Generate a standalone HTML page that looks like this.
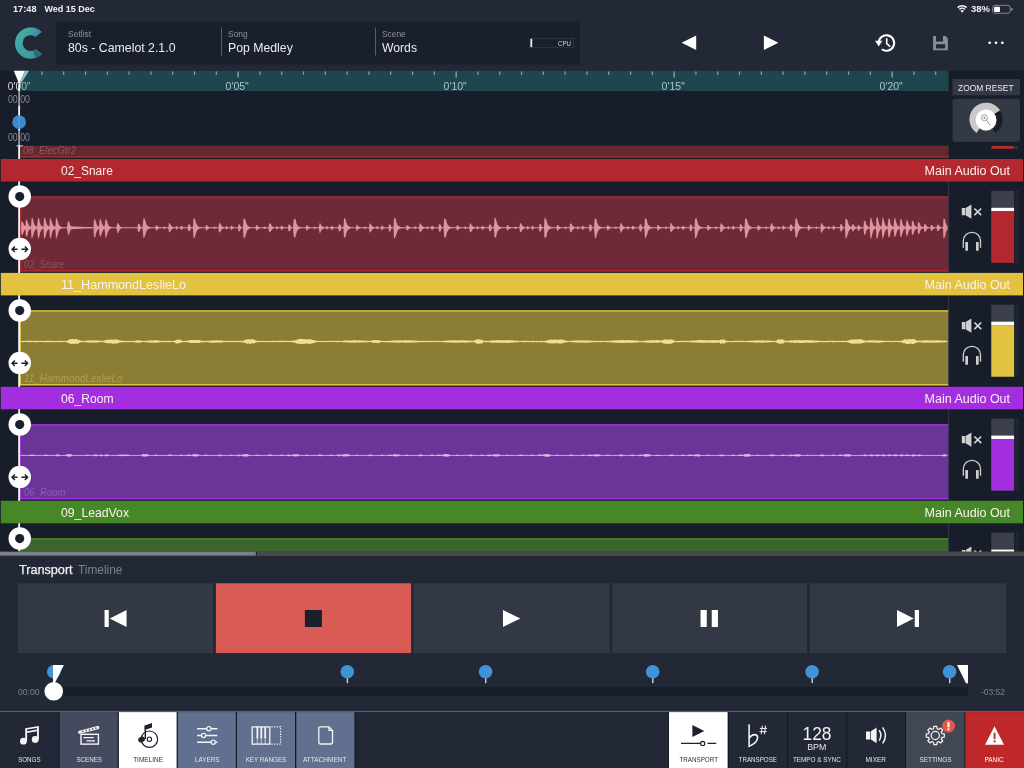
<!DOCTYPE html>
<html><head><meta charset="utf-8"><title>Camelot Timeline</title>
<style>
html,body{margin:0;padding:0;background:#222836;}
body{width:1024px;height:768px;overflow:hidden;position:relative;font-family:"Liberation Sans", sans-serif;-webkit-font-smoothing:antialiased;}
span{display:block}
</style></head><body>
<div id="app" style="position:absolute;left:0;top:0;width:1024px;height:768px;overflow:hidden;will-change:transform">
<svg style="position:absolute;left:0px;top:0px" width="1024" height="768"><rect x="0" y="0" width="1024" height="768" fill="#222836"/></svg>
<span id="t0" style="position:absolute;top:4px;font-size:9px;line-height:10px;white-space:nowrap;color:#f2f2f2;font-weight:700;left:12.50px;transform-origin:left center;transform:scaleX(1.0204);">17:48</span>
<span id="t1" style="position:absolute;top:4px;font-size:9px;line-height:10px;white-space:nowrap;color:#f2f2f2;font-weight:700;left:44.50px;transform-origin:left center;">Wed 15 Dec</span>
<span id="t2" style="position:absolute;top:4px;font-size:9px;line-height:10px;white-space:nowrap;color:#f2f2f2;font-weight:700;left:971.00px;transform-origin:left center;transform:scaleX(1.0546);">38%</span>
<svg style="position:absolute;left:955px;top:3px" width="15" height="12" viewBox="955 3 15 12">
<path d="M957.63 7.62 A6.5 6.5 0 0 1 966.67 7.62" fill="none" stroke="#f2f2f2" stroke-width="1.55"/>
<path d="M959.37 9.42 A4.0 4.0 0 0 1 964.93 9.42" fill="none" stroke="#f2f2f2" stroke-width="1.5"/>
<path d="M962.15 12.8 L960.40 10.85 A2.2 2.2 0 0 1 963.90 10.85 Z" fill="#f2f2f2"/>
</svg>
<svg style="position:absolute;left:991px;top:3px" width="23" height="13" viewBox="991 3 23 13">
<rect x="992.7" y="5.35" width="17.5" height="7.9" rx="2.3" fill="none" stroke="#8e9199" stroke-width="0.9"/>
<rect x="994.1" y="6.7" width="5.9" height="5.2" rx="1" fill="#ffffff"/>
<path d="M1011.2 7.8 Q1012.8 8 1012.8 9.3 Q1012.8 10.6 1011.2 10.8 Z" fill="#8e9199"/>
</svg>
<svg style="position:absolute;left:0;top:20px" width="60" height="48" viewBox="0 20 60 48"><defs><linearGradient id="lg" gradientUnits="userSpaceOnUse" x1="15" y1="30" x2="42" y2="56"><stop offset="0" stop-color="#4aafa6"/><stop offset="1" stop-color="#3c9398"/></linearGradient><linearGradient id="lg2" gradientUnits="userSpaceOnUse" x1="26" y1="28" x2="41" y2="33"><stop offset="0" stop-color="#46a6a6" stop-opacity="0"/><stop offset="0.6" stop-color="#3f93a6" stop-opacity="0.75"/><stop offset="1" stop-color="#3a7ca2"/></linearGradient></defs><path d="M41.63 32.07 A15.6 15.6 0 1 0 42.01 53.74 L35.85 49.14 A8.0 8.0 0 1 1 35.41 36.71 Z" fill="url(#lg)" /><path d="M41.63 32.07 A15.6 15.6 0 0 0 25.26 28.44 L27.86 35.58 A8.0 8.0 0 0 1 35.41 36.71 Z" fill="url(#lg2)" /><path d="M35.42 57.94 A15.6 15.6 0 0 0 42.01 53.74 L35.85 49.14 A8.0 8.0 0 0 1 33.07 50.71 Z" fill="#2a6c79" /></svg>
<svg style="position:absolute;left:56px;top:21px" width="524" height="44"><rect x="0" y="0.6" width="524" height="42.9" fill="#1a1f2c"/></svg>
<span id="t3" style="position:absolute;top:29px;font-size:9.2px;line-height:10px;white-space:nowrap;color:#8e939c;font-weight:400;left:67.80px;transform-origin:left center;transform:scaleX(0.9268);">Setlist</span>
<span id="t4" style="position:absolute;top:40px;font-size:13px;line-height:15px;white-space:nowrap;color:#ececec;font-weight:400;left:67.80px;transform-origin:left center;transform:scaleX(0.9475);">80s - Camelot 2.1.0</span>
<svg style="position:absolute;left:221px;top:27px" width="1" height="29"><rect x="0" y="0.5" width="1" height="28" fill="#5a5f6a"/></svg>
<span id="t5" style="position:absolute;top:29px;font-size:9.2px;line-height:10px;white-space:nowrap;color:#8e939c;font-weight:400;left:227.50px;transform-origin:left center;transform:scaleX(0.9223);">Song</span>
<span id="t6" style="position:absolute;top:40px;font-size:13px;line-height:15px;white-space:nowrap;color:#ececec;font-weight:400;left:227.50px;transform-origin:left center;transform:scaleX(0.9438);">Pop Medley</span>
<svg style="position:absolute;left:375px;top:27px" width="1" height="29"><rect x="0" y="0.5" width="1" height="28" fill="#5a5f6a"/></svg>
<span id="t7" style="position:absolute;top:29px;font-size:9.2px;line-height:10px;white-space:nowrap;color:#8e939c;font-weight:400;left:382.00px;transform-origin:left center;transform:scaleX(0.9132);">Scene</span>
<span id="t8" style="position:absolute;top:40px;font-size:13px;line-height:15px;white-space:nowrap;color:#ececec;font-weight:400;left:382.00px;transform-origin:left center;transform:scaleX(0.9376);">Words</span>
<svg style="position:absolute;left:528px;top:36px" width="48" height="14" viewBox="528 36 48 14"><rect x="530" y="38.4" width="43.5" height="9.2" fill="none" stroke="#2e3340" stroke-width="1"/><rect x="530.4" y="38.9" width="1.8" height="8.2" fill="#ededed"/></svg>
<span id="t9" style="position:absolute;top:39px;font-size:7.4px;line-height:9px;white-space:nowrap;color:#d8d8d8;font-weight:400;left:557.60px;transform-origin:left center;transform:scaleX(0.8328);">CPU</span>
<svg style="position:absolute;left:680px;top:34px" width="18" height="18" viewBox="0 0 18 18"><path d="M1.6 8.75 L16.2 1.5 L16.2 16 Z" fill="#fff"/></svg>
<svg style="position:absolute;left:762px;top:34px" width="18" height="18" viewBox="0 0 18 18"><path d="M16.4 8.75 L1.9 1.5 L1.9 16 Z" fill="#fff"/></svg>
<svg style="position:absolute;left:872px;top:30px" width="28" height="26" viewBox="872 30 28 26">
<path d="M878.65 43.5 A7.75 7.75 0 1 1 881.84 49.27" fill="none" stroke="#fff" stroke-width="2.1"/>
<path d="M875 40.7 H882.4 L878.7 46.4 Z" fill="#fff"/>
<path d="M886.7 38.3 V43.6 L890.2 46.6" fill="none" stroke="#fff" stroke-width="1.6"/>
</svg>
<svg style="position:absolute;left:932px;top:35px" width="17" height="17" viewBox="932 35 17 17">
<path d="M933.1 36 H936 V41.5 H943 V36 H945.5 L947.9 38.6 V50.3 H933.1 Z M936 44.3 V48.5 H945.2 V44.3 Z" fill="#8a8d96" fill-rule="evenodd"/>
</svg>
<svg style="position:absolute;left:987px;top:40px" width="18" height="6" viewBox="0 0 18 6"><circle cx="2.7" cy="2.8" r="1.35" fill="#fff"/><circle cx="9" cy="2.8" r="1.35" fill="#fff"/><circle cx="15.3" cy="2.8" r="1.35" fill="#fff"/></svg>
<svg style="position:absolute;left:0px;top:70px" width="1024" height="484"><rect x="0" y="0.6" width="1024" height="483" fill="#181d2a"/></svg>
<svg style="position:absolute;left:19px;top:70px" width="930" height="21"><rect x="0.5" y="0.6" width="929" height="20.4" fill="#1f464f"/></svg>
<svg style="position:absolute;left:0;top:70.6px" width="949" height="21" viewBox="0 0 949 21"><rect x="41.35" y="0.4" width="1.15" height="3.6" fill="#9dbcbc" opacity="0.8"/><rect x="63.15" y="0.4" width="1.15" height="3.6" fill="#9dbcbc" opacity="0.8"/><rect x="84.95" y="0.4" width="1.15" height="3.6" fill="#9dbcbc" opacity="0.8"/><rect x="106.75" y="0.4" width="1.15" height="3.6" fill="#9dbcbc" opacity="0.8"/><rect x="128.55" y="0.4" width="1.15" height="3.6" fill="#9dbcbc" opacity="0.8"/><rect x="150.35" y="0.4" width="1.15" height="3.6" fill="#9dbcbc" opacity="0.8"/><rect x="172.15" y="0.4" width="1.15" height="3.6" fill="#9dbcbc" opacity="0.8"/><rect x="193.95" y="0.4" width="1.15" height="3.6" fill="#9dbcbc" opacity="0.8"/><rect x="215.75" y="0.4" width="1.15" height="3.6" fill="#9dbcbc" opacity="0.8"/><rect x="237.55" y="0.4" width="1.15" height="6.3" fill="#9dbcbc" opacity="0.95"/><rect x="259.35" y="0.4" width="1.15" height="3.6" fill="#9dbcbc" opacity="0.8"/><rect x="281.15" y="0.4" width="1.15" height="3.6" fill="#9dbcbc" opacity="0.8"/><rect x="302.95" y="0.4" width="1.15" height="3.6" fill="#9dbcbc" opacity="0.8"/><rect x="324.75" y="0.4" width="1.15" height="3.6" fill="#9dbcbc" opacity="0.8"/><rect x="346.55" y="0.4" width="1.15" height="3.6" fill="#9dbcbc" opacity="0.8"/><rect x="368.35" y="0.4" width="1.15" height="3.6" fill="#9dbcbc" opacity="0.8"/><rect x="390.15" y="0.4" width="1.15" height="3.6" fill="#9dbcbc" opacity="0.8"/><rect x="411.95" y="0.4" width="1.15" height="3.6" fill="#9dbcbc" opacity="0.8"/><rect x="433.75" y="0.4" width="1.15" height="3.6" fill="#9dbcbc" opacity="0.8"/><rect x="455.55" y="0.4" width="1.15" height="6.3" fill="#9dbcbc" opacity="0.95"/><rect x="477.35" y="0.4" width="1.15" height="3.6" fill="#9dbcbc" opacity="0.8"/><rect x="499.15" y="0.4" width="1.15" height="3.6" fill="#9dbcbc" opacity="0.8"/><rect x="520.95" y="0.4" width="1.15" height="3.6" fill="#9dbcbc" opacity="0.8"/><rect x="542.75" y="0.4" width="1.15" height="3.6" fill="#9dbcbc" opacity="0.8"/><rect x="564.55" y="0.4" width="1.15" height="3.6" fill="#9dbcbc" opacity="0.8"/><rect x="586.35" y="0.4" width="1.15" height="3.6" fill="#9dbcbc" opacity="0.8"/><rect x="608.15" y="0.4" width="1.15" height="3.6" fill="#9dbcbc" opacity="0.8"/><rect x="629.95" y="0.4" width="1.15" height="3.6" fill="#9dbcbc" opacity="0.8"/><rect x="651.75" y="0.4" width="1.15" height="3.6" fill="#9dbcbc" opacity="0.8"/><rect x="673.55" y="0.4" width="1.15" height="6.3" fill="#9dbcbc" opacity="0.95"/><rect x="695.35" y="0.4" width="1.15" height="3.6" fill="#9dbcbc" opacity="0.8"/><rect x="717.15" y="0.4" width="1.15" height="3.6" fill="#9dbcbc" opacity="0.8"/><rect x="738.95" y="0.4" width="1.15" height="3.6" fill="#9dbcbc" opacity="0.8"/><rect x="760.75" y="0.4" width="1.15" height="3.6" fill="#9dbcbc" opacity="0.8"/><rect x="782.55" y="0.4" width="1.15" height="3.6" fill="#9dbcbc" opacity="0.8"/><rect x="804.35" y="0.4" width="1.15" height="3.6" fill="#9dbcbc" opacity="0.8"/><rect x="826.15" y="0.4" width="1.15" height="3.6" fill="#9dbcbc" opacity="0.8"/><rect x="847.95" y="0.4" width="1.15" height="3.6" fill="#9dbcbc" opacity="0.8"/><rect x="869.75" y="0.4" width="1.15" height="3.6" fill="#9dbcbc" opacity="0.8"/><rect x="891.55" y="0.4" width="1.15" height="6.3" fill="#9dbcbc" opacity="0.95"/><rect x="913.35" y="0.4" width="1.15" height="3.6" fill="#9dbcbc" opacity="0.8"/><rect x="935.15" y="0.4" width="1.15" height="3.6" fill="#9dbcbc" opacity="0.8"/></svg>
<span id="t10" style="position:absolute;top:80px;font-size:11px;line-height:12px;white-space:nowrap;color:transparent;font-weight:400;left:7.32px;transform-origin:center center;transform:scaleX(0.9360);background:linear-gradient(to right,#ececec 50%,#a9c6c6 50%);-webkit-background-clip:text;background-clip:text;">0'00&quot;</span>
<span id="t11" style="position:absolute;top:80px;font-size:11px;line-height:12px;white-space:nowrap;color:#a9c6c6;font-weight:400;left:225.42px;transform-origin:center center;transform:scaleX(0.9524);">0'05&quot;</span>
<span id="t12" style="position:absolute;top:80px;font-size:11px;line-height:12px;white-space:nowrap;color:#a9c6c6;font-weight:400;left:443.42px;transform-origin:center center;transform:scaleX(0.9524);">0'10&quot;</span>
<span id="t13" style="position:absolute;top:80px;font-size:11px;line-height:12px;white-space:nowrap;color:#a9c6c6;font-weight:400;left:661.42px;transform-origin:center center;transform:scaleX(0.9524);">0'15&quot;</span>
<span id="t14" style="position:absolute;top:80px;font-size:11px;line-height:12px;white-space:nowrap;color:#a9c6c6;font-weight:400;left:879.42px;transform-origin:center center;transform:scaleX(0.9524);">0'20&quot;</span>
<svg style="position:absolute;left:952px;top:79px" width="68" height="17"><rect x="0.5" y="0" width="67.5" height="16.3" fill="#333845"/></svg>
<span id="t15" style="position:absolute;top:82px;font-size:9.7px;line-height:11px;white-space:nowrap;color:#ececec;font-weight:400;left:958.40px;transform-origin:left center;transform:scaleX(0.8679);">ZOOM RESET</span>
<svg style="position:absolute;left:952px;top:98px" width="69" height="45"><rect x="0.50" y="0.80" width="67.50" height="43.00" fill="#333845" rx="2.5"/></svg>
<svg style="position:absolute;left:952.5px;top:98.8px" width="68" height="43" viewBox="0 0 68 43"><path d="M23.48 33.90 A16.6 16.6 0 1 1 47.08 11.50 L38.94 16.59 A7 7 0 1 0 28.98 26.03 Z" fill="#c9c9c9"/><path d="M47.08 11.50 A16.6 16.6 0 0 1 42.52 33.90 L37.02 26.03 A7 7 0 0 0 38.94 16.59 Z" fill="#181d2a"/><circle cx="33" cy="21.6" r="10.6" fill="#d0d0d0" opacity="0.5"/><circle cx="33" cy="20.900000000000002" r="10.4" fill="#fff"/><circle cx="31.4" cy="18.7" r="3" fill="none" stroke="#777" stroke-width="0.7"/><path d="M33.5 21.1 L37 26.3" stroke="#777" stroke-width="0.8"/><path d="M30 18.7 h2.8 M31.4 17.3 v2.8" stroke="#777" stroke-width="0.6"/></svg>
<svg style="position:absolute;left:0px;top:145px" width="949" height="14"><rect x="20.10" y="0.70" width="928.50" height="12.00" fill="#652a30"/><rect x="20.10" y="11.10" width="928.50" height="1.50" fill="#9a2b2b"/></svg>
<span id="t18" style="position:absolute;top:145px;font-size:10.4px;line-height:11px;white-space:nowrap;color:#8e5860;font-weight:400;font-style:italic;left:23.20px;transform-origin:left center;transform:scaleX(0.9175);">08_ElecGtr2</span>
<svg style="position:absolute;left:991px;top:146px" width="23" height="3"><rect x="0.4" y="0" width="22.6" height="2.8" fill="#b03224"/></svg>
<svg style="position:absolute;left:1015px;top:146px" width="3" height="3"><rect x="0" y="0.4" width="2.6" height="2.2" fill="#3a3f4a"/></svg>
<svg style="position:absolute;left:948px;top:181px" width="2" height="92"><rect x="0.2" y="0.5" width="0.9" height="91.5" fill="#353a48"/></svg>
<svg style="position:absolute;left:0;top:196px" width="949" height="76" viewBox="0 196 949 76"><rect x="20" y="196.40" width="928.2" height="75.10" fill="#6f2a3a"/><rect x="20" y="196.40" width="928.2" height="1.35" fill="#b3282e"/><rect x="20" y="196.40" width="0.9" height="75.10" fill="#b3282e"/><rect x="20" y="270.10" width="928.2" height="1.4" fill="#b3282e"/></svg>
<svg style="position:absolute;left:0;top:199px" width="949" height="70" viewBox="0 199 949 70"><path d="M20.5 227.2 21.0 227.2 21.5 220.4 22.0 221.4 22.5 221.7 23.0 222.2 23.5 223.5 24.0 224.9 24.5 225.4 25.0 226.0 25.5 225.3 26.0 218.4 26.5 220.0 27.0 220.0 27.5 221.4 28.0 222.8 28.5 224.2 29.0 225.4 29.5 225.8 30.0 226.3 30.5 226.6 31.0 226.8 31.5 218.4 32.0 218.3 32.5 218.3 33.0 218.3 33.5 221.7 34.0 223.6 34.5 224.8 35.0 225.2 35.5 225.8 36.0 226.3 36.5 226.6 37.0 226.8 37.5 222.7 38.0 218.8 38.5 218.1 39.0 218.2 39.5 220.7 40.0 223.1 40.5 224.3 41.0 225.3 41.5 225.8 42.0 226.2 42.5 226.6 43.0 226.7 43.5 226.8 44.0 218.0 44.5 218.2 45.0 217.5 45.5 219.3 46.0 221.7 46.5 223.1 47.0 224.7 47.5 225.3 48.0 225.7 48.5 226.3 49.0 226.5 49.5 225.0 50.0 217.1 50.5 218.5 51.0 219.4 51.5 220.7 52.0 222.6 52.5 223.9 53.0 225.1 53.5 225.7 54.0 226.2 54.5 226.4 55.0 226.7 55.5 225.2 56.0 217.1 56.5 218.2 57.0 219.3 57.5 220.2 58.0 221.9 58.5 224.1 59.0 224.8 59.5 225.5 60.0 226.1 60.5 226.3 61.0 226.7 61.5 226.9 62.0 227.0 62.5 227.1 63.0 227.1 63.5 227.2 64.0 227.2 64.5 227.2 65.0 227.2 65.5 227.3 66.0 227.2 66.5 227.2 67.0 227.2 67.5 223.8 68.0 221.2 68.5 221.5 69.0 221.2 69.5 222.8 70.0 224.4 70.5 225.6 71.0 225.9 71.5 226.2 72.0 226.4 72.5 226.4 73.0 226.3 73.5 226.5 74.0 226.4 74.5 226.6 75.0 226.4 75.5 226.6 76.0 226.5 76.5 226.6 77.0 226.7 77.5 226.5 78.0 226.7 78.5 226.7 79.0 226.6 79.5 226.8 80.0 226.8 80.5 226.8 81.0 226.8 81.5 226.8 82.0 226.8 82.5 226.8 83.0 226.8 83.5 226.9 84.0 226.9 84.5 227.0 85.0 227.0 85.5 226.9 86.0 227.0 86.5 226.9 87.0 227.0 87.5 227.0 88.0 226.9 88.5 227.0 89.0 226.9 89.5 227.0 90.0 227.0 90.5 227.0 91.0 227.0 91.5 227.0 92.0 227.2 92.5 227.2 93.0 227.2 93.5 227.3 94.0 219.3 94.5 219.7 95.0 218.8 95.5 220.7 96.0 222.2 96.5 223.6 97.0 225.1 97.5 225.7 98.0 226.0 98.5 226.6 99.0 226.7 99.5 221.3 100.0 218.6 100.5 219.2 101.0 220.5 101.5 221.5 102.0 223.8 102.5 224.4 103.0 225.6 103.5 226.1 104.0 226.4 104.5 226.7 105.0 222.7 105.5 219.2 106.0 218.8 106.5 220.0 107.0 220.7 107.5 223.3 108.0 224.2 108.5 225.4 109.0 226.0 109.5 226.3 110.0 226.6 110.5 226.8 111.0 226.9 111.5 227.1 112.0 227.2 112.5 227.2 113.0 227.2 113.5 227.2 114.0 227.2 114.5 227.2 115.0 227.2 115.5 227.2 116.0 227.2 116.5 227.2 117.0 225.2 117.5 223.0 118.0 222.9 118.5 223.4 119.0 224.6 119.5 225.6 120.0 226.3 120.5 226.7 121.0 226.9 121.5 227.1 122.0 227.2 122.5 227.2 123.0 227.2 123.5 227.3 124.0 227.2 124.5 227.2 125.0 227.2 125.5 227.2 126.0 227.3 126.5 227.2 127.0 227.2 127.5 227.3 128.0 227.3 128.5 227.3 129.0 227.2 129.5 227.2 130.0 227.2 130.5 227.2 131.0 227.2 131.5 227.2 132.0 227.2 132.5 227.3 133.0 227.2 133.5 227.2 134.0 227.3 134.5 227.2 135.0 227.2 135.5 227.2 136.0 227.2 136.5 227.2 137.0 227.3 137.5 227.3 138.0 223.8 138.5 223.9 139.0 224.1 139.5 224.0 140.0 224.9 140.5 226.4 141.0 227.0 141.5 227.3 142.0 227.2 142.5 227.2 143.0 222.8 143.5 218.1 144.0 217.9 144.5 218.5 145.0 219.7 145.5 221.2 146.0 223.1 146.5 224.6 147.0 225.1 147.5 225.7 148.0 226.2 148.5 226.5 149.0 226.7 149.5 226.8 150.0 227.1 150.5 227.1 151.0 227.2 151.5 227.2 152.0 227.2 152.5 227.3 153.0 227.2 153.5 227.2 154.0 227.2 154.5 227.2 155.0 227.2 155.5 227.0 156.0 224.8 156.5 225.2 157.0 225.7 157.5 226.3 158.0 226.4 158.5 226.7 159.0 226.9 159.5 227.1 160.0 227.2 160.5 227.2 161.0 227.2 161.5 227.3 162.0 227.2 162.5 227.2 163.0 227.2 163.5 227.1 164.0 226.4 164.5 226.5 165.0 226.7 165.5 227.2 166.0 227.2 166.5 227.2 167.0 227.2 167.5 227.2 168.0 227.2 168.5 226.6 169.0 222.7 169.5 223.3 170.0 223.6 170.5 224.7 171.0 225.5 171.5 225.9 172.0 226.2 172.5 226.7 173.0 226.9 173.5 227.1 174.0 227.2 174.5 227.2 175.0 227.2 175.5 227.2 176.0 226.0 176.5 226.2 177.0 226.0 177.5 227.0 178.0 227.2 178.5 227.2 179.0 227.2 179.5 227.2 180.0 227.2 180.5 227.2 181.0 225.4 181.5 225.7 182.0 226.2 182.5 226.6 183.0 226.9 183.5 227.2 184.0 227.2 184.5 227.2 185.0 227.2 185.5 227.2 186.0 227.3 186.5 227.2 187.0 227.2 187.5 227.3 188.0 225.9 188.5 224.5 189.0 224.3 189.5 224.5 190.0 224.5 190.5 226.4 191.0 227.0 191.5 227.2 192.0 227.2 192.5 227.2 193.0 226.8 193.5 218.0 194.0 218.5 194.5 218.3 195.0 219.5 195.5 221.0 196.0 222.5 196.5 223.8 197.0 224.9 197.5 225.4 198.0 226.0 198.5 226.5 199.0 226.7 199.5 226.9 200.0 227.0 200.5 227.1 201.0 227.2 201.5 227.2 202.0 227.3 202.5 227.3 203.0 227.2 203.5 227.2 204.0 227.2 204.5 227.3 205.0 227.2 205.5 227.2 206.0 224.8 206.5 225.1 207.0 225.5 207.5 225.8 208.0 226.3 208.5 226.7 209.0 226.9 209.5 227.1 210.0 227.2 210.5 227.2 211.0 227.2 211.5 227.2 212.0 227.2 212.5 227.3 213.0 227.2 213.5 227.2 214.0 226.5 214.5 226.4 215.0 226.6 215.5 227.2 216.0 227.3 216.5 227.2 217.0 227.2 217.5 227.2 218.0 227.2 218.5 227.2 219.0 223.2 219.5 222.9 220.0 223.3 220.5 224.0 221.0 225.0 221.5 225.8 222.0 226.1 222.5 226.6 223.0 226.9 223.5 227.1 224.0 227.2 224.5 227.2 225.0 227.2 225.5 227.3 226.0 226.6 226.5 226.1 227.0 226.1 227.5 226.7 228.0 227.2 228.5 227.2 229.0 227.2 229.5 227.2 230.0 227.2 230.5 227.3 231.0 225.5 231.5 225.7 232.0 226.0 232.5 226.4 233.0 226.8 233.5 227.1 234.0 227.2 234.5 227.3 235.0 227.3 235.5 227.2 236.0 227.2 236.5 227.2 237.0 227.2 237.5 227.2 238.0 227.2 238.5 224.4 239.0 224.5 239.5 224.6 240.0 224.4 240.5 226.1 241.0 226.9 241.5 227.2 242.0 227.2 242.5 227.3 243.0 227.2 243.5 218.1 244.0 218.9 244.5 218.7 245.0 219.2 245.5 220.3 246.0 222.3 246.5 223.3 247.0 224.7 247.5 225.3 248.0 226.1 248.5 226.3 249.0 226.6 249.5 226.8 250.0 227.0 250.5 227.0 251.0 227.2 251.5 227.2 252.0 227.3 252.5 227.2 253.0 227.3 253.5 227.2 254.0 227.2 254.5 227.2 255.0 227.2 255.5 227.2 256.0 225.4 256.5 224.7 257.0 225.1 257.5 225.9 258.0 226.2 258.5 226.7 259.0 226.9 259.5 227.1 260.0 227.2 260.5 227.3 261.0 227.2 261.5 227.2 262.0 227.2 262.5 227.2 263.0 227.2 263.5 227.2 264.0 226.5 264.5 226.6 265.0 226.6 265.5 227.0 266.0 227.2 266.5 227.2 267.0 227.3 267.5 227.3 268.0 227.2 268.5 227.2 269.0 224.3 269.5 223.2 270.0 223.5 270.5 223.5 271.0 224.6 271.5 225.5 272.0 226.2 272.5 226.5 273.0 226.7 273.5 226.9 274.0 227.2 274.5 227.2 275.0 227.2 275.5 227.2 276.0 227.2 276.5 226.1 277.0 226.1 277.5 226.6 278.0 227.2 278.5 227.2 279.0 227.3 279.5 227.3 280.0 227.2 280.5 227.2 281.0 226.1 281.5 225.8 282.0 225.7 282.5 226.3 283.0 226.7 283.5 227.0 284.0 227.2 284.5 227.2 285.0 227.2 285.5 227.2 286.0 227.2 286.5 227.2 287.0 227.3 287.5 227.2 288.0 227.2 288.5 224.6 289.0 224.2 289.5 224.7 290.0 224.8 290.5 225.6 291.0 226.7 291.5 227.2 292.0 227.3 292.5 227.2 293.0 227.3 293.5 221.9 294.0 218.3 294.5 219.3 295.0 218.7 295.5 218.9 296.0 221.0 296.5 223.4 297.0 224.7 297.5 225.2 298.0 226.0 298.5 226.4 299.0 226.4 299.5 226.8 300.0 226.9 300.5 227.0 301.0 227.1 301.5 227.2 302.0 227.2 302.5 227.3 303.0 227.2 303.5 227.2 304.0 227.2 304.5 227.2 305.0 227.2 305.5 227.2 306.0 226.8 306.5 224.8 307.0 224.9 307.5 225.7 308.0 226.0 308.5 226.4 309.0 226.8 309.5 227.0 310.0 227.1 310.5 227.2 311.0 227.2 311.5 227.2 312.0 227.2 312.5 227.2 313.0 227.2 313.5 227.2 314.0 227.0 314.5 226.6 315.0 226.7 315.5 226.9 316.0 227.3 316.5 227.2 317.0 227.3 317.5 227.2 318.0 227.2 318.5 227.3 319.0 226.4 319.5 222.9 320.0 223.8 320.5 223.3 321.0 224.8 321.5 225.5 322.0 225.8 322.5 226.3 323.0 226.6 323.5 227.0 324.0 227.0 324.5 227.2 325.0 227.3 325.5 227.2 326.0 227.2 326.5 225.8 327.0 226.0 327.5 226.4 328.0 227.0 328.5 227.2 329.0 227.2 329.5 227.2 330.0 227.2 330.5 227.3 331.0 227.0 331.5 225.8 332.0 225.7 332.5 226.3 333.0 226.7 333.5 227.0 334.0 227.2 334.5 227.2 335.0 227.3 335.5 227.3 336.0 227.2 336.5 227.2 337.0 227.2 337.5 227.2 338.0 227.2 338.5 225.9 339.0 223.9 339.5 224.4 340.0 224.6 340.5 224.7 341.0 226.3 341.5 227.1 342.0 227.3 342.5 227.2 343.0 227.3 343.5 226.2 344.0 218.7 344.5 217.6 345.0 219.2 345.5 218.6 346.0 221.4 346.5 223.0 347.0 224.0 347.5 225.1 348.0 225.4 348.5 226.2 349.0 226.5 349.5 226.6 350.0 226.8 350.5 227.0 351.0 227.1 351.5 227.2 352.0 227.2 352.5 227.2 353.0 227.2 353.5 227.3 354.0 227.2 354.5 227.2 355.0 227.2 355.5 227.2 356.0 227.2 356.5 224.6 357.0 224.8 357.5 225.4 358.0 226.1 358.5 226.5 359.0 226.6 359.5 226.9 360.0 227.1 360.5 227.2 361.0 227.2 361.5 227.3 362.0 227.2 362.5 227.2 363.0 227.3 363.5 227.3 364.0 227.2 364.5 226.6 365.0 226.5 365.5 226.6 366.0 227.2 366.5 227.2 367.0 227.2 367.5 227.2 368.0 227.3 368.5 227.2 369.0 227.2 369.5 223.6 370.0 223.4 370.5 223.7 371.0 224.4 371.5 224.9 372.0 225.9 372.5 226.3 373.0 226.7 373.5 226.8 374.0 227.0 374.5 227.2 375.0 227.2 375.5 227.2 376.0 227.2 376.5 226.6 377.0 225.9 377.5 226.0 378.0 226.8 378.5 227.2 379.0 227.3 379.5 227.2 380.0 227.2 380.5 227.2 381.0 227.2 381.5 225.3 382.0 225.8 382.5 225.8 383.0 226.6 383.5 226.8 384.0 227.2 384.5 227.2 385.0 227.3 385.5 227.2 386.0 227.2 386.5 227.2 387.0 227.3 387.5 227.2 388.0 227.2 388.5 227.1 389.0 224.4 389.5 224.3 390.0 224.5 390.5 224.5 391.0 226.1 391.5 226.9 392.0 227.2 392.5 227.2 393.0 227.2 393.5 227.3 394.0 218.0 394.5 217.9 395.0 218.8 395.5 218.1 396.0 219.9 396.5 222.7 397.0 223.5 397.5 224.8 398.0 225.4 398.5 225.8 399.0 226.3 399.5 226.6 400.0 226.8 400.5 226.9 401.0 227.1 401.5 227.2 402.0 227.2 402.5 227.2 403.0 227.2 403.5 227.2 404.0 227.2 404.5 227.2 405.0 227.2 405.5 227.2 406.0 227.3 406.5 225.3 407.0 225.2 407.5 225.5 408.0 225.7 408.5 226.2 409.0 226.5 409.5 226.8 410.0 227.0 410.5 227.2 411.0 227.2 411.5 227.2 412.0 227.3 412.5 227.2 413.0 227.2 413.5 227.2 414.0 227.2 414.5 226.5 415.0 226.6 415.5 226.5 416.0 227.1 416.5 227.3 417.0 227.2 417.5 227.2 418.0 227.3 418.5 227.2 419.0 227.2 419.5 224.3 420.0 223.1 420.5 223.8 421.0 224.3 421.5 225.1 422.0 225.8 422.5 226.2 423.0 226.4 423.5 226.7 424.0 227.0 424.5 227.1 425.0 227.2 425.5 227.2 426.0 227.2 426.5 227.2 427.0 225.9 427.5 226.3 428.0 226.5 428.5 227.2 429.0 227.3 429.5 227.2 430.0 227.2 430.5 227.2 431.0 227.3 431.5 226.1 432.0 225.6 432.5 225.8 433.0 226.2 433.5 226.8 434.0 227.1 434.5 227.2 435.0 227.2 435.5 227.2 436.0 227.2 436.5 227.2 437.0 227.2 437.5 227.2 438.0 227.2 438.5 227.3 439.0 224.2 439.5 224.0 440.0 224.7 440.5 224.3 441.0 225.5 441.5 226.7 442.0 227.2 442.5 227.2 443.0 227.2 443.5 227.2 444.0 221.3 444.5 217.9 445.0 218.5 445.5 219.2 446.0 218.8 446.5 222.1 447.0 223.0 447.5 224.4 448.0 225.0 448.5 225.8 449.0 226.3 449.5 226.6 450.0 226.8 450.5 226.9 451.0 227.1 451.5 227.1 452.0 227.2 452.5 227.2 453.0 227.2 453.5 227.2 454.0 227.3 454.5 227.2 455.0 227.2 455.5 227.2 456.0 227.2 456.5 226.6 457.0 225.0 457.5 225.2 458.0 225.8 458.5 226.1 459.0 226.5 459.5 226.7 460.0 227.0 460.5 227.2 461.0 227.2 461.5 227.2 462.0 227.2 462.5 227.2 463.0 227.2 463.5 227.2 464.0 227.2 464.5 226.9 465.0 226.4 465.5 226.5 466.0 226.8 466.5 227.3 467.0 227.2 467.5 227.2 468.0 227.2 468.5 227.3 469.0 227.2 469.5 226.1 470.0 223.4 470.5 223.3 471.0 223.4 471.5 224.9 472.0 225.5 472.5 225.8 473.0 226.5 473.5 226.8 474.0 226.9 474.5 227.1 475.0 227.2 475.5 227.2 476.0 227.2 476.5 227.2 477.0 226.1 477.5 226.2 478.0 226.4 478.5 227.0 479.0 227.3 479.5 227.2 480.0 227.3 480.5 227.3 481.0 227.2 481.5 226.9 482.0 225.7 482.5 225.8 483.0 226.0 483.5 226.7 484.0 226.9 484.5 227.1 485.0 227.2 485.5 227.2 486.0 227.3 486.5 227.2 487.0 227.3 487.5 227.2 488.0 227.2 488.5 227.3 489.0 225.5 489.5 224.5 490.0 224.3 490.5 224.6 491.0 224.7 491.5 226.4 492.0 227.1 492.5 227.2 493.0 227.2 493.5 227.2 494.0 225.6 494.5 218.0 495.0 217.6 495.5 218.0 496.0 219.6 496.5 221.1 497.0 222.9 497.5 224.4 498.0 225.0 498.5 225.8 499.0 226.0 499.5 226.5 500.0 226.7 500.5 226.9 501.0 226.9 501.5 227.1 502.0 227.2 502.5 227.2 503.0 227.3 503.5 227.2 504.0 227.3 504.5 227.2 505.0 227.3 505.5 227.2 506.0 227.2 506.5 227.2 507.0 225.0 507.5 225.0 508.0 225.6 508.5 226.0 509.0 226.4 509.5 226.8 510.0 226.9 510.5 227.1 511.0 227.2 511.5 227.2 512.0 227.2 512.5 227.2 513.0 227.2 513.5 227.2 514.0 227.2 514.5 227.2 515.0 226.6 515.5 226.4 516.0 226.7 516.5 227.2 517.0 227.2 517.5 227.2 518.0 227.3 518.5 227.2 519.0 227.2 519.5 227.2 520.0 222.8 520.5 223.2 521.0 223.4 521.5 224.3 522.0 225.1 522.5 225.8 523.0 226.1 523.5 226.6 524.0 226.9 524.5 227.0 525.0 227.2 525.5 227.2 526.0 227.3 526.5 227.2 527.0 226.5 527.5 226.2 528.0 226.0 528.5 226.8 529.0 227.2 529.5 227.2 530.0 227.2 530.5 227.2 531.0 227.2 531.5 227.2 532.0 225.7 532.5 225.5 533.0 226.0 533.5 226.6 534.0 226.9 534.5 227.2 535.0 227.2 535.5 227.3 536.0 227.2 536.5 227.3 537.0 227.2 537.5 227.3 538.0 227.2 538.5 227.2 539.0 226.9 539.5 224.0 540.0 224.1 540.5 224.2 541.0 224.3 541.5 226.0 542.0 226.9 542.5 227.2 543.0 227.2 543.5 227.2 544.0 227.2 544.5 218.0 545.0 217.8 545.5 218.8 546.0 219.1 546.5 219.8 547.0 222.3 547.5 224.0 548.0 224.9 548.5 225.4 549.0 225.8 549.5 226.3 550.0 226.5 550.5 226.8 551.0 227.0 551.5 227.1 552.0 227.1 552.5 227.2 553.0 227.2 553.5 227.2 554.0 227.2 554.5 227.2 555.0 227.2 555.5 227.3 556.0 227.2 556.5 227.2 557.0 225.1 557.5 224.9 558.0 225.0 558.5 225.8 559.0 226.4 559.5 226.5 560.0 226.9 560.5 227.0 561.0 227.2 561.5 227.2 562.0 227.3 562.5 227.2 563.0 227.2 563.5 227.2 564.0 227.2 564.5 227.2 565.0 226.5 565.5 226.6 566.0 226.7 566.5 227.0 567.0 227.2 567.5 227.2 568.0 227.2 568.5 227.2 569.0 227.2 569.5 227.3 570.0 223.8 570.5 223.6 571.0 223.5 571.5 223.8 572.0 225.2 572.5 225.5 573.0 226.1 573.5 226.6 574.0 226.8 574.5 227.0 575.0 227.1 575.5 227.3 576.0 227.2 576.5 227.2 577.0 227.2 577.5 225.9 578.0 226.2 578.5 226.5 579.0 227.1 579.5 227.2 580.0 227.2 580.5 227.2 581.0 227.2 581.5 227.2 582.0 226.0 582.5 225.7 583.0 225.6 583.5 226.4 584.0 226.8 584.5 227.1 585.0 227.3 585.5 227.2 586.0 227.2 586.5 227.2 587.0 227.2 587.5 227.3 588.0 227.3 588.5 227.2 589.0 227.2 589.5 223.9 590.0 224.4 590.5 224.5 591.0 224.7 591.5 225.6 592.0 226.8 592.5 227.2 593.0 227.2 593.5 227.2 594.0 227.2 594.5 220.9 595.0 218.1 595.5 218.9 596.0 219.0 596.5 219.3 597.0 221.8 597.5 223.6 598.0 224.6 598.5 225.4 599.0 225.9 599.5 226.3 600.0 226.6 600.5 226.8 601.0 226.9 601.5 227.0 602.0 227.1 602.5 227.2 603.0 227.3 603.5 227.2 604.0 227.2 604.5 227.2 605.0 227.2 605.5 227.2 606.0 227.3 606.5 227.2 607.0 226.6 607.5 225.0 608.0 225.2 608.5 225.9 609.0 226.1 609.5 226.5 610.0 226.8 610.5 227.0 611.0 227.2 611.5 227.2 612.0 227.2 612.5 227.2 613.0 227.3 613.5 227.3 614.0 227.2 614.5 227.2 615.0 226.9 615.5 226.4 616.0 226.6 616.5 226.8 617.0 227.2 617.5 227.2 618.0 227.2 618.5 227.3 619.0 227.2 619.5 227.2 620.0 225.8 620.5 223.0 621.0 223.6 621.5 223.2 622.0 224.6 622.5 225.6 623.0 226.0 623.5 226.4 624.0 226.7 624.5 227.0 625.0 227.1 625.5 227.1 626.0 227.2 626.5 227.3 627.0 227.2 627.5 226.0 628.0 226.2 628.5 226.3 629.0 227.0 629.5 227.3 630.0 227.2 630.5 227.3 631.0 227.2 631.5 227.2 632.0 226.8 632.5 225.6 633.0 225.9 633.5 226.1 634.0 226.8 634.5 226.9 635.0 227.2 635.5 227.2 636.0 227.2 636.5 227.2 637.0 227.2 637.5 227.2 638.0 227.2 638.5 227.3 639.0 227.2 639.5 225.5 640.0 224.0 640.5 224.6 641.0 224.3 641.5 225.0 642.0 226.4 642.5 227.1 643.0 227.2 643.5 227.2 644.0 227.2 644.5 225.1 645.0 217.3 645.5 218.4 646.0 219.3 646.5 218.9 647.0 220.8 647.5 222.9 648.0 224.4 648.5 225.1 649.0 225.6 649.5 226.0 650.0 226.4 650.5 226.7 651.0 226.9 651.5 227.0 652.0 227.1 652.5 227.1 653.0 227.2 653.5 227.2 654.0 227.2 654.5 227.2 655.0 227.2 655.5 227.2 656.0 227.2 656.5 227.2 657.0 227.2 657.5 224.9 658.0 224.7 658.5 225.4 659.0 226.1 659.5 226.6 660.0 226.7 660.5 227.0 661.0 227.1 661.5 227.2 662.0 227.2 662.5 227.3 663.0 227.2 663.5 227.3 664.0 227.2 664.5 227.2 665.0 227.2 665.5 226.5 666.0 226.6 666.5 226.6 667.0 227.2 667.5 227.2 668.0 227.2 668.5 227.2 669.0 227.2 669.5 227.3 670.0 227.2 670.5 222.7 671.0 223.1 671.5 223.3 672.0 224.5 672.5 225.4 673.0 225.9 673.5 226.2 674.0 226.5 674.5 226.8 675.0 227.0 675.5 227.2 676.0 227.2 676.5 227.2 677.0 227.3 677.5 226.3 678.0 226.0 678.5 226.1 679.0 226.8 679.5 227.3 680.0 227.2 680.5 227.2 681.0 227.2 681.5 227.3 682.0 227.3 682.5 225.7 683.0 225.8 683.5 226.1 684.0 226.5 684.5 226.9 685.0 227.1 685.5 227.2 686.0 227.2 686.5 227.2 687.0 227.3 687.5 227.2 688.0 227.2 688.5 227.2 689.0 227.2 689.5 226.9 690.0 224.4 690.5 224.3 691.0 224.6 691.5 224.6 692.0 226.2 692.5 227.0 693.0 227.2 693.5 227.2 694.0 227.3 694.5 227.2 695.0 218.4 695.5 218.7 696.0 218.5 696.5 218.0 697.0 220.2 697.5 221.9 698.0 223.7 698.5 224.8 699.0 225.4 699.5 225.8 700.0 226.4 700.5 226.6 701.0 226.8 701.5 227.0 702.0 227.1 702.5 227.2 703.0 227.2 703.5 227.2 704.0 227.2 704.5 227.3 705.0 227.2 705.5 227.2 706.0 227.3 706.5 227.2 707.0 227.2 707.5 224.9 708.0 224.7 708.5 225.5 709.0 225.8 709.5 226.4 710.0 226.7 710.5 227.0 711.0 227.0 711.5 227.2 712.0 227.3 712.5 227.2 713.0 227.2 713.5 227.2 714.0 227.2 714.5 227.2 715.0 227.2 715.5 226.4 716.0 226.6 716.5 226.7 717.0 227.0 717.5 227.2 718.0 227.2 718.5 227.2 719.0 227.2 719.5 227.3 720.0 227.3 720.5 223.9 721.0 223.2 721.5 223.5 722.0 223.7 722.5 224.7 723.0 225.6 723.5 226.2 724.0 226.6 724.5 226.7 725.0 226.9 725.5 227.1 726.0 227.2 726.5 227.2 727.0 227.2 727.5 227.1 728.0 225.9 728.5 226.0 729.0 226.6 729.5 227.2 730.0 227.3 730.5 227.2 731.0 227.2 731.5 227.2 732.0 227.2 732.5 226.0 733.0 225.8 733.5 225.8 734.0 226.3 734.5 226.9 735.0 227.0 735.5 227.3 736.0 227.2 736.5 227.2 737.0 227.2 737.5 227.2 738.0 227.2 738.5 227.3 739.0 227.3 739.5 227.2 740.0 224.5 740.5 224.3 741.0 224.1 741.5 224.7 742.0 225.8 742.5 226.8 743.0 227.2 743.5 227.2 744.0 227.2 744.5 227.3 745.0 220.3 745.5 217.7 746.0 218.9 746.5 218.8 747.0 220.1 747.5 221.7 748.0 223.3 748.5 224.7 749.0 225.3 749.5 225.7 750.0 226.1 750.5 226.6 751.0 226.8 751.5 227.0 752.0 227.1 752.5 227.2 753.0 227.2 753.5 227.2 754.0 227.2 754.5 227.2 755.0 227.2 755.5 227.2 756.0 227.2 756.5 227.2 757.0 227.3 757.5 226.4 758.0 225.1 758.5 225.3 759.0 225.8 759.5 226.3 760.0 226.5 760.5 226.8 761.0 226.9 761.5 227.2 762.0 227.2 762.5 227.2 763.0 227.2 763.5 227.3 764.0 227.2 764.5 227.2 765.0 227.2 765.5 226.8 766.0 226.5 766.5 226.5 767.0 226.9 767.5 227.2 768.0 227.2 768.5 227.2 769.0 227.2 769.5 227.2 770.0 227.2 770.5 225.7 771.0 223.5 771.5 223.1 772.0 223.3 772.5 224.6 773.0 225.4 773.5 226.1 774.0 226.5 774.5 226.6 775.0 226.9 775.5 227.1 776.0 227.2 776.5 227.2 777.0 227.2 777.5 227.2 778.0 225.9 778.5 226.2 779.0 226.4 779.5 227.0 780.0 227.2 780.5 227.2 781.0 227.2 781.5 227.2 782.0 227.2 782.5 226.8 783.0 225.6 783.5 225.6 784.0 226.1 784.5 226.7 785.0 226.9 785.5 227.2 786.0 227.3 786.5 227.2 787.0 227.2 787.5 227.2 788.0 227.2 788.5 227.2 789.0 227.2 789.5 227.2 790.0 225.2 790.5 224.3 791.0 224.4 791.5 224.7 792.0 225.2 792.5 226.5 793.0 227.1 793.5 227.2 794.0 227.2 794.5 227.2 795.0 224.6 795.5 218.3 796.0 218.5 796.5 218.3 797.0 219.2 797.5 220.7 798.0 223.0 798.5 223.9 799.0 224.8 799.5 225.7 800.0 226.2 800.5 226.4 801.0 226.7 801.5 226.8 802.0 227.1 802.5 227.1 803.0 227.1 803.5 227.2 804.0 227.2 804.5 227.2 805.0 227.2 805.5 227.2 806.0 227.2 806.5 227.2 807.0 227.3 807.5 227.3 808.0 225.0 808.5 224.9 809.0 225.7 809.5 226.0 810.0 226.6 810.5 226.8 811.0 226.9 811.5 227.1 812.0 227.2 812.5 227.3 813.0 227.2 813.5 227.2 814.0 227.2 814.5 227.2 815.0 227.3 815.5 227.2 816.0 226.4 816.5 226.6 817.0 226.6 817.5 227.2 818.0 227.2 818.5 227.2 819.0 227.2 819.5 227.3 820.0 227.2 820.5 227.2 821.0 223.3 821.5 223.5 822.0 223.3 822.5 224.4 823.0 225.2 823.5 226.0 824.0 226.3 824.5 226.5 825.0 226.8 825.5 227.0 826.0 227.1 826.5 227.2 827.0 227.2 827.5 227.2 828.0 226.2 828.5 226.2 829.0 226.1 829.5 226.9 830.0 227.2 830.5 227.2 831.0 227.3 831.5 227.3 832.0 227.2 832.5 227.2 833.0 225.5 833.5 225.5 834.0 225.9 834.5 226.5 835.0 226.9 835.5 227.1 836.0 227.2 836.5 227.3 837.0 227.2 837.5 227.2 838.0 227.2 838.5 227.2 839.0 227.2 839.5 227.2 840.0 226.6 840.5 223.9 841.0 224.3 841.5 224.4 842.0 224.8 842.5 226.3 843.0 226.9 843.5 227.2 844.0 227.2 844.5 227.2 845.0 227.2 845.5 218.3 846.0 218.7 846.5 219.2 847.0 219.3 847.5 220.3 848.0 222.4 848.5 223.7 849.0 225.1 849.5 225.7 850.0 226.1 850.5 226.4 851.0 226.6 851.5 226.9 852.0 225.8 852.5 223.7 853.0 224.4 853.5 224.0 854.0 225.0 854.5 226.0 855.0 226.5 855.5 226.8 856.0 227.0 856.5 227.2 857.0 227.2 857.5 226.3 858.0 225.2 858.5 225.0 859.0 225.1 859.5 225.8 860.0 226.4 860.5 226.8 861.0 227.0 861.5 227.1 862.0 227.2 862.5 227.2 863.0 227.2 863.5 227.2 864.0 220.3 864.5 221.1 865.0 221.1 865.5 221.4 866.0 223.3 866.5 224.6 867.0 225.7 867.5 226.3 868.0 226.6 868.5 226.9 869.0 227.1 869.5 227.2 870.0 222.2 870.5 217.9 871.0 217.7 871.5 218.2 872.0 221.1 872.5 222.5 873.0 224.5 873.5 225.3 874.0 225.7 874.5 226.2 875.0 226.5 875.5 226.7 876.0 226.9 876.5 217.2 877.0 217.2 877.5 217.5 878.0 218.5 878.5 221.4 879.0 223.2 879.5 224.9 880.0 225.7 880.5 226.1 881.0 226.5 881.5 226.7 882.0 222.8 882.5 217.4 883.0 217.5 883.5 218.9 884.0 220.5 884.5 223.0 885.0 224.0 885.5 225.5 886.0 226.1 886.5 226.2 887.0 226.6 887.5 226.8 888.0 222.9 888.5 217.9 889.0 219.3 889.5 218.6 890.0 220.6 890.5 223.3 891.0 224.7 891.5 225.4 892.0 225.7 892.5 226.4 893.0 226.6 893.5 226.9 894.0 222.5 894.5 217.4 895.0 218.1 895.5 219.1 896.0 221.4 896.5 223.1 897.0 224.6 897.5 225.5 898.0 225.8 898.5 226.4 899.0 226.6 899.5 226.9 900.0 223.2 900.5 219.1 901.0 219.0 901.5 219.6 902.0 220.9 902.5 223.4 903.0 224.9 903.5 225.4 904.0 226.1 904.5 226.3 905.0 226.7 905.5 226.9 906.0 223.3 906.5 220.4 907.0 220.0 907.5 220.6 908.0 221.9 908.5 223.6 909.0 224.9 909.5 225.5 910.0 226.1 910.5 226.6 911.0 226.8 911.5 227.0 912.0 220.7 912.5 220.7 913.0 221.8 913.5 221.2 914.0 223.3 914.5 224.9 915.0 225.7 915.5 226.1 916.0 226.6 916.5 226.8 917.0 227.0 917.5 227.2 918.0 222.1 918.5 221.7 919.0 222.7 919.5 222.7 920.0 224.1 920.5 225.4 921.0 225.9 921.5 226.4 922.0 226.7 922.5 227.0 923.0 227.1 923.5 227.2 924.0 225.6 924.5 223.5 925.0 224.0 925.5 224.3 926.0 225.1 926.5 225.6 927.0 226.3 927.5 226.8 928.0 226.9 928.5 227.1 929.0 227.2 929.5 227.2 930.0 227.2 930.5 226.9 931.0 225.0 931.5 225.0 932.0 225.0 932.5 225.7 933.0 226.3 933.5 226.6 934.0 226.9 934.5 227.2 935.0 227.2 935.5 227.2 936.0 227.3 936.5 227.2 937.0 225.9 937.5 224.4 938.0 224.6 938.5 225.0 939.0 225.3 939.5 226.2 940.0 226.6 940.5 226.9 941.0 227.1 941.5 227.2 942.0 227.2 942.5 227.2 943.0 227.2 943.5 218.6 944.0 218.7 944.5 219.2 945.0 219.3 945.5 222.5 946.0 224.0 946.5 224.8 947.0 225.7 947.5 226.2 947.5 229.5 947.0 230.0 946.5 230.7 946.0 231.8 945.5 234.3 945.0 237.2 944.5 237.6 944.0 237.7 943.5 238.9 943.0 228.2 942.5 228.2 942.0 228.2 941.5 228.3 941.0 228.3 940.5 228.5 940.0 229.0 939.5 229.3 939.0 230.2 938.5 231.0 938.0 231.3 937.5 231.4 937.0 229.6 936.5 228.2 936.0 228.2 935.5 228.3 935.0 228.3 934.5 228.3 934.0 228.5 933.5 228.9 933.0 229.3 932.5 230.0 932.0 230.7 931.5 230.7 931.0 231.0 930.5 228.5 930.0 228.2 929.5 228.2 929.0 228.2 928.5 228.3 928.0 228.6 927.5 228.7 927.0 229.3 926.5 229.9 926.0 230.8 925.5 231.4 925.0 232.1 924.5 232.0 924.0 229.7 923.5 228.2 923.0 228.3 922.5 228.5 922.0 228.7 921.5 229.1 921.0 229.6 920.5 230.1 920.0 231.7 919.5 233.6 919.0 233.9 918.5 233.4 918.0 233.8 917.5 228.3 917.0 228.4 916.5 228.6 916.0 228.9 915.5 229.5 915.0 229.9 914.5 230.6 914.0 231.9 913.5 233.8 913.0 234.6 912.5 234.7 912.0 235.7 911.5 228.4 911.0 228.7 910.5 229.0 910.0 229.4 909.5 229.9 909.0 230.6 908.5 231.8 908.0 233.6 907.5 235.9 907.0 235.1 906.5 236.4 906.0 232.4 905.5 228.5 905.0 228.7 904.5 229.1 904.0 229.6 903.5 230.1 903.0 231.3 902.5 232.9 902.0 234.6 901.5 236.8 901.0 236.6 900.5 237.5 900.0 233.0 899.5 228.6 899.0 228.9 898.5 229.3 898.0 229.6 897.5 230.3 897.0 231.2 896.5 233.1 896.0 235.6 895.5 236.1 895.0 236.8 894.5 237.2 894.0 232.9 893.5 228.6 893.0 228.9 892.5 229.3 892.0 229.6 891.5 230.2 891.0 231.6 890.5 233.0 890.0 235.6 889.5 237.1 889.0 237.2 888.5 237.6 888.0 233.4 887.5 228.6 887.0 228.9 886.5 229.2 886.0 229.5 885.5 230.4 885.0 231.6 884.5 233.1 884.0 235.8 883.5 236.6 883.0 238.5 882.5 238.6 882.0 233.4 881.5 228.8 881.0 229.2 880.5 229.3 880.0 229.9 879.5 231.1 879.0 232.4 878.5 233.5 878.0 236.9 877.5 237.5 877.0 239.0 876.5 238.7 876.0 228.6 875.5 228.7 875.0 229.0 874.5 229.1 874.0 229.8 873.5 230.2 873.0 231.6 872.5 233.3 872.0 235.6 871.5 237.8 871.0 238.8 870.5 238.4 870.0 233.5 869.5 228.4 869.0 228.4 868.5 228.5 868.0 228.8 867.5 229.4 867.0 229.7 866.5 230.7 866.0 231.7 865.5 234.1 865.0 234.2 864.5 235.0 864.0 234.3 863.5 228.2 863.0 228.2 862.5 228.2 862.0 228.2 861.5 228.2 861.0 228.4 860.5 228.7 860.0 229.1 859.5 230.0 859.0 230.6 858.5 230.8 858.0 231.0 857.5 229.4 857.0 228.3 856.5 228.2 856.0 228.4 855.5 228.7 855.0 229.1 854.5 229.7 854.0 230.6 853.5 231.1 853.0 231.3 852.5 231.7 852.0 229.9 851.5 228.7 851.0 228.8 850.5 229.1 850.0 229.6 849.5 230.1 849.0 230.8 848.5 231.9 848.0 233.8 847.5 234.9 847.0 236.4 846.5 238.1 846.0 238.4 845.5 238.2 845.0 228.2 844.5 228.3 844.0 228.3 843.5 228.2 843.0 228.4 842.5 229.5 842.0 230.9 841.5 231.3 841.0 231.6 840.5 231.2 840.0 228.9 839.5 228.2 839.0 228.2 838.5 228.3 838.0 228.2 837.5 228.2 837.0 228.2 836.5 228.2 836.0 228.2 835.5 228.3 835.0 228.5 834.5 229.1 834.0 229.4 833.5 229.8 833.0 229.9 832.5 228.2 832.0 228.2 831.5 228.3 831.0 228.2 830.5 228.2 830.0 228.3 829.5 228.6 829.0 229.5 828.5 229.3 828.0 229.1 827.5 228.2 827.0 228.2 826.5 228.2 826.0 228.3 825.5 228.4 825.0 228.6 824.5 228.8 824.0 229.1 823.5 229.7 823.0 230.6 822.5 231.6 822.0 232.3 821.5 232.6 821.0 232.9 820.5 228.2 820.0 228.2 819.5 228.2 819.0 228.2 818.5 228.2 818.0 228.2 817.5 228.2 817.0 228.8 816.5 228.8 816.0 229.0 815.5 228.3 815.0 228.2 814.5 228.2 814.0 228.2 813.5 228.2 813.0 228.2 812.5 228.3 812.0 228.2 811.5 228.3 811.0 228.6 810.5 228.8 810.0 229.1 809.5 229.5 809.0 230.1 808.5 230.7 808.0 230.6 807.5 228.3 807.0 228.2 806.5 228.2 806.0 228.2 805.5 228.2 805.0 228.2 804.5 228.3 804.0 228.2 803.5 228.3 803.0 228.3 802.5 228.3 802.0 228.5 801.5 228.6 801.0 228.8 800.5 229.0 800.0 229.2 799.5 230.0 799.0 230.7 798.5 231.3 798.0 233.0 797.5 234.6 797.0 237.4 796.5 237.0 796.0 237.5 795.5 237.2 795.0 231.0 794.5 228.2 794.0 228.3 793.5 228.2 793.0 228.3 792.5 228.9 792.0 230.4 791.5 231.2 791.0 231.0 790.5 231.3 790.0 230.3 789.5 228.2 789.0 228.2 788.5 228.3 788.0 228.2 787.5 228.3 787.0 228.2 786.5 228.2 786.0 228.2 785.5 228.2 785.0 228.4 784.5 228.9 784.0 229.1 783.5 230.0 783.0 230.1 782.5 228.8 782.0 228.2 781.5 228.2 781.0 228.2 780.5 228.2 780.0 228.2 779.5 228.4 779.0 229.3 778.5 229.5 778.0 229.6 777.5 228.2 777.0 228.2 776.5 228.2 776.0 228.2 775.5 228.4 775.0 228.6 774.5 228.8 774.0 229.2 773.5 229.7 773.0 230.2 772.5 230.9 772.0 231.7 771.5 232.6 771.0 232.2 770.5 229.8 770.0 228.2 769.5 228.3 769.0 228.2 768.5 228.2 768.0 228.2 767.5 228.3 767.0 228.5 766.5 229.0 766.0 229.1 765.5 228.7 765.0 228.2 764.5 228.2 764.0 228.2 763.5 228.2 763.0 228.2 762.5 228.2 762.0 228.2 761.5 228.3 761.0 228.4 760.5 228.7 760.0 228.9 759.5 229.4 759.0 229.9 758.5 230.5 758.0 230.8 757.5 229.3 757.0 228.3 756.5 228.2 756.0 228.2 755.5 228.2 755.0 228.3 754.5 228.2 754.0 228.3 753.5 228.3 753.0 228.2 752.5 228.3 752.0 228.5 751.5 228.6 751.0 228.8 750.5 228.8 750.0 229.4 749.5 229.6 749.0 230.5 748.5 231.5 748.0 232.8 747.5 234.1 747.0 236.9 746.5 238.1 746.0 237.3 745.5 238.7 745.0 234.8 744.5 228.3 744.0 228.2 743.5 228.3 743.0 228.3 742.5 228.6 742.0 229.9 741.5 231.0 741.0 231.4 740.5 231.7 740.0 231.6 739.5 228.3 739.0 228.2 738.5 228.2 738.0 228.3 737.5 228.2 737.0 228.2 736.5 228.2 736.0 228.2 735.5 228.2 735.0 228.5 734.5 228.6 734.0 229.1 733.5 229.6 733.0 230.0 732.5 229.6 732.0 228.2 731.5 228.2 731.0 228.2 730.5 228.2 730.0 228.2 729.5 228.3 729.0 228.8 728.5 229.6 728.0 229.4 727.5 228.4 727.0 228.2 726.5 228.2 726.0 228.2 725.5 228.3 725.0 228.5 724.5 228.6 724.0 228.9 723.5 229.2 723.0 230.0 722.5 230.4 722.0 231.8 721.5 231.8 721.0 232.3 720.5 231.9 720.0 228.2 719.5 228.2 719.0 228.2 718.5 228.2 718.0 228.2 717.5 228.2 717.0 228.4 716.5 228.9 716.0 228.9 715.5 229.1 715.0 228.2 714.5 228.3 714.0 228.2 713.5 228.3 713.0 228.2 712.5 228.2 712.0 228.2 711.5 228.2 711.0 228.4 710.5 228.6 710.0 228.9 709.5 229.3 709.0 229.9 708.5 230.2 708.0 230.8 707.5 230.4 707.0 228.2 706.5 228.2 706.0 228.2 705.5 228.2 705.0 228.2 704.5 228.3 704.0 228.2 703.5 228.2 703.0 228.2 702.5 228.4 702.0 228.4 701.5 228.5 701.0 228.6 700.5 228.9 700.0 229.2 699.5 229.6 699.0 230.3 698.5 230.7 698.0 232.1 697.5 233.8 697.0 236.1 696.5 236.3 696.0 238.5 695.5 238.1 695.0 238.3 694.5 228.2 694.0 228.2 693.5 228.3 693.0 228.2 692.5 228.5 692.0 229.3 691.5 231.2 691.0 231.1 690.5 231.0 690.0 231.8 689.5 228.6 689.0 228.2 688.5 228.2 688.0 228.2 687.5 228.2 687.0 228.3 686.5 228.2 686.0 228.3 685.5 228.2 685.0 228.3 684.5 228.6 684.0 229.0 683.5 229.4 683.0 230.0 682.5 230.1 682.0 228.3 681.5 228.2 681.0 228.2 680.5 228.2 680.0 228.2 679.5 228.3 679.0 228.7 678.5 229.2 678.0 229.3 677.5 229.2 677.0 228.2 676.5 228.3 676.0 228.2 675.5 228.3 675.0 228.5 674.5 228.6 674.0 228.9 673.5 229.2 673.0 229.7 672.5 230.5 672.0 231.3 671.5 231.8 671.0 232.1 670.5 232.7 670.0 228.2 669.5 228.3 669.0 228.2 668.5 228.2 668.0 228.2 667.5 228.3 667.0 228.2 666.5 228.8 666.0 229.0 665.5 229.0 665.0 228.2 664.5 228.2 664.0 228.2 663.5 228.3 663.0 228.2 662.5 228.2 662.0 228.2 661.5 228.2 661.0 228.4 660.5 228.5 660.0 228.7 659.5 229.0 659.0 229.6 658.5 230.0 658.0 230.6 657.5 230.9 657.0 228.2 656.5 228.2 656.0 228.2 655.5 228.3 655.0 228.3 654.5 228.2 654.0 228.2 653.5 228.2 653.0 228.2 652.5 228.2 652.0 228.4 651.5 228.5 651.0 228.6 650.5 228.8 650.0 229.0 649.5 229.5 649.0 229.7 648.5 230.4 648.0 231.2 647.5 233.4 647.0 234.4 646.5 236.3 646.0 237.1 645.5 237.8 645.0 239.1 644.5 230.5 644.0 228.2 643.5 228.2 643.0 228.3 642.5 228.4 642.0 229.0 641.5 230.5 641.0 231.4 640.5 231.5 640.0 231.8 639.5 230.3 639.0 228.2 638.5 228.2 638.0 228.2 637.5 228.2 637.0 228.3 636.5 228.2 636.0 228.2 635.5 228.2 635.0 228.3 634.5 228.5 634.0 228.9 633.5 229.4 633.0 229.6 632.5 229.9 632.0 228.7 631.5 228.2 631.0 228.2 630.5 228.2 630.0 228.2 629.5 228.2 629.0 228.5 628.5 229.2 628.0 229.5 627.5 229.7 627.0 228.3 626.5 228.2 626.0 228.3 625.5 228.2 625.0 228.4 624.5 228.5 624.0 228.8 623.5 229.0 623.0 229.4 622.5 230.1 622.0 230.9 621.5 232.2 621.0 232.4 620.5 232.9 620.0 229.5 619.5 228.2 619.0 228.2 618.5 228.2 618.0 228.2 617.5 228.3 617.0 228.2 616.5 228.6 616.0 228.8 615.5 229.1 615.0 228.6 614.5 228.2 614.0 228.3 613.5 228.3 613.0 228.2 612.5 228.2 612.0 228.2 611.5 228.2 611.0 228.2 610.5 228.5 610.0 228.6 609.5 229.0 609.0 229.2 608.5 229.8 608.0 230.5 607.5 230.6 607.0 228.9 606.5 228.2 606.0 228.3 605.5 228.2 605.0 228.2 604.5 228.2 604.0 228.2 603.5 228.2 603.0 228.2 602.5 228.2 602.0 228.4 601.5 228.5 601.0 228.5 600.5 228.8 600.0 228.9 599.5 229.1 599.0 229.7 598.5 230.4 598.0 231.3 597.5 232.8 597.0 233.7 596.5 236.3 596.0 237.7 595.5 238.2 595.0 238.1 594.5 234.1 594.0 228.2 593.5 228.2 593.0 228.2 592.5 228.2 592.0 228.7 591.5 229.9 591.0 231.5 590.5 231.6 590.0 231.6 589.5 231.3 589.0 228.3 588.5 228.2 588.0 228.2 587.5 228.2 587.0 228.2 586.5 228.2 586.0 228.2 585.5 228.2 585.0 228.3 584.5 228.3 584.0 228.7 583.5 229.0 583.0 229.7 582.5 229.8 582.0 229.5 581.5 228.3 581.0 228.3 580.5 228.2 580.0 228.2 579.5 228.3 579.0 228.4 578.5 228.8 578.0 229.5 577.5 229.7 577.0 228.2 576.5 228.2 576.0 228.3 575.5 228.3 575.0 228.3 574.5 228.5 574.0 228.8 573.5 228.9 573.0 229.4 572.5 229.9 572.0 230.4 571.5 232.0 571.0 232.6 570.5 232.2 570.0 231.4 569.5 228.2 569.0 228.2 568.5 228.3 568.0 228.2 567.5 228.2 567.0 228.2 566.5 228.4 566.0 228.9 565.5 229.0 565.0 229.1 564.5 228.2 564.0 228.3 563.5 228.2 563.0 228.2 562.5 228.2 562.0 228.2 561.5 228.2 561.0 228.3 560.5 228.4 560.0 228.5 559.5 228.9 559.0 229.2 558.5 229.8 558.0 230.3 557.5 230.8 557.0 230.3 556.5 228.3 556.0 228.2 555.5 228.2 555.0 228.2 554.5 228.3 554.0 228.2 553.5 228.2 553.0 228.2 552.5 228.3 552.0 228.3 551.5 228.4 551.0 228.4 550.5 228.7 550.0 228.8 549.5 229.3 549.0 229.5 548.5 229.9 548.0 231.0 547.5 231.8 547.0 233.5 546.5 236.4 546.0 236.9 545.5 237.7 545.0 237.5 544.5 238.2 544.0 228.2 543.5 228.3 543.0 228.2 542.5 228.3 542.0 228.5 541.5 229.3 541.0 230.9 540.5 231.4 540.0 231.4 539.5 231.7 539.0 228.5 538.5 228.3 538.0 228.2 537.5 228.2 537.0 228.2 536.5 228.2 536.0 228.2 535.5 228.2 535.0 228.2 534.5 228.3 534.0 228.6 533.5 229.1 533.0 229.5 532.5 229.8 532.0 230.0 531.5 228.2 531.0 228.2 530.5 228.2 530.0 228.2 529.5 228.2 529.0 228.2 528.5 228.7 528.0 229.4 527.5 229.5 527.0 228.9 526.5 228.2 526.0 228.2 525.5 228.2 525.0 228.3 524.5 228.4 524.0 228.6 523.5 228.9 523.0 229.2 522.5 229.7 522.0 230.3 521.5 231.7 521.0 232.0 520.5 232.2 520.0 232.2 519.5 228.3 519.0 228.2 518.5 228.2 518.0 228.2 517.5 228.2 517.0 228.2 516.5 228.2 516.0 228.9 515.5 229.1 515.0 229.0 514.5 228.3 514.0 228.3 513.5 228.3 513.0 228.2 512.5 228.2 512.0 228.3 511.5 228.2 511.0 228.2 510.5 228.4 510.0 228.5 509.5 228.8 509.0 229.2 508.5 229.4 508.0 229.9 507.5 230.6 507.0 230.6 506.5 228.2 506.0 228.2 505.5 228.2 505.0 228.2 504.5 228.2 504.0 228.2 503.5 228.3 503.0 228.2 502.5 228.2 502.0 228.2 501.5 228.4 501.0 228.5 500.5 228.7 500.0 228.9 499.5 229.1 499.0 229.6 498.5 230.0 498.0 230.6 497.5 231.6 497.0 233.1 496.5 234.5 496.0 237.7 495.5 237.0 495.0 237.8 494.5 237.2 494.0 230.0 493.5 228.2 493.0 228.2 492.5 228.2 492.0 228.3 491.5 229.1 491.0 231.0 490.5 231.0 490.0 231.3 489.5 231.2 489.0 229.9 488.5 228.2 488.0 228.2 487.5 228.2 487.0 228.2 486.5 228.2 486.0 228.2 485.5 228.2 485.0 228.2 484.5 228.3 484.0 228.4 483.5 228.8 483.0 229.5 482.5 230.1 482.0 229.9 481.5 228.5 481.0 228.2 480.5 228.3 480.0 228.3 479.5 228.3 479.0 228.2 478.5 228.4 478.0 229.2 477.5 229.4 477.0 229.7 476.5 228.2 476.0 228.2 475.5 228.2 475.0 228.3 474.5 228.4 474.0 228.6 473.5 228.9 473.0 229.1 472.5 229.7 472.0 230.4 471.5 231.4 471.0 231.9 470.5 231.9 470.0 232.2 469.5 229.3 469.0 228.2 468.5 228.2 468.0 228.2 467.5 228.2 467.0 228.3 466.5 228.2 466.0 228.7 465.5 229.0 465.0 228.9 464.5 228.6 464.0 228.2 463.5 228.2 463.0 228.3 462.5 228.2 462.0 228.2 461.5 228.3 461.0 228.2 460.5 228.4 460.0 228.4 459.5 228.6 459.0 229.1 458.5 229.5 458.0 229.7 457.5 230.4 457.0 230.5 456.5 228.9 456.0 228.2 455.5 228.2 455.0 228.2 454.5 228.2 454.0 228.3 453.5 228.2 453.0 228.2 452.5 228.2 452.0 228.3 451.5 228.3 451.0 228.4 450.5 228.6 450.0 228.7 449.5 229.0 449.0 229.2 448.5 229.8 448.0 230.4 447.5 231.5 447.0 232.3 446.5 234.7 446.0 236.7 445.5 237.8 445.0 237.1 444.5 238.4 444.0 233.7 443.5 228.2 443.0 228.3 442.5 228.2 442.0 228.3 441.5 228.8 441.0 230.0 440.5 231.4 440.0 231.5 439.5 231.7 439.0 231.6 438.5 228.2 438.0 228.2 437.5 228.3 437.0 228.2 436.5 228.3 436.0 228.2 435.5 228.3 435.0 228.2 434.5 228.3 434.0 228.5 433.5 228.7 433.0 229.2 432.5 229.9 432.0 229.9 431.5 229.5 431.0 228.3 430.5 228.2 430.0 228.2 429.5 228.2 429.0 228.3 428.5 228.3 428.0 228.8 427.5 229.5 427.0 229.3 426.5 228.3 426.0 228.3 425.5 228.2 425.0 228.2 424.5 228.4 424.0 228.5 423.5 228.7 423.0 228.9 422.5 229.3 422.0 230.2 421.5 231.0 421.0 232.0 420.5 231.8 420.0 232.2 419.5 231.1 419.0 228.2 418.5 228.3 418.0 228.2 417.5 228.2 417.0 228.2 416.5 228.2 416.0 228.4 415.5 229.0 415.0 229.0 414.5 229.0 414.0 228.2 413.5 228.2 413.0 228.2 412.5 228.3 412.0 228.2 411.5 228.2 411.0 228.2 410.5 228.2 410.0 228.4 409.5 228.6 409.0 228.9 408.5 229.3 408.0 229.8 407.5 230.2 407.0 230.6 406.5 230.1 406.0 228.2 405.5 228.2 405.0 228.2 404.5 228.2 404.0 228.3 403.5 228.3 403.0 228.2 402.5 228.2 402.0 228.2 401.5 228.3 401.0 228.4 400.5 228.6 400.0 228.7 399.5 229.0 399.0 229.2 398.5 229.4 398.0 230.1 397.5 231.3 397.0 232.4 396.5 233.8 396.0 236.1 395.5 236.4 395.0 237.4 394.5 238.7 394.0 238.4 393.5 228.3 393.0 228.3 392.5 228.2 392.0 228.2 391.5 228.5 391.0 229.4 390.5 231.0 390.0 231.5 389.5 231.6 389.0 231.7 388.5 228.3 388.0 228.3 387.5 228.2 387.0 228.3 386.5 228.3 386.0 228.2 385.5 228.2 385.0 228.2 384.5 228.2 384.0 228.4 383.5 228.5 383.0 229.1 382.5 229.7 382.0 230.1 381.5 230.2 381.0 228.2 380.5 228.2 380.0 228.2 379.5 228.2 379.0 228.2 378.5 228.2 378.0 228.6 377.5 229.3 377.0 229.4 376.5 228.8 376.0 228.2 375.5 228.3 375.0 228.2 374.5 228.4 374.0 228.5 373.5 228.7 373.0 229.0 372.5 229.2 372.0 229.9 371.5 230.5 371.0 231.6 370.5 232.0 370.0 232.6 369.5 232.6 369.0 228.2 368.5 228.2 368.0 228.3 367.5 228.2 367.0 228.2 366.5 228.3 366.0 228.2 365.5 228.9 365.0 229.0 364.5 229.1 364.0 228.2 363.5 228.2 363.0 228.2 362.5 228.3 362.0 228.2 361.5 228.2 361.0 228.3 360.5 228.2 360.0 228.4 359.5 228.5 359.0 228.8 358.5 229.1 358.0 229.6 357.5 230.1 357.0 230.8 356.5 231.0 356.0 228.3 355.5 228.2 355.0 228.2 354.5 228.2 354.0 228.2 353.5 228.2 353.0 228.2 352.5 228.2 352.0 228.3 351.5 228.2 351.0 228.3 350.5 228.5 350.0 228.6 349.5 228.9 349.0 229.0 348.5 229.6 348.0 230.1 347.5 230.5 347.0 231.4 346.5 232.9 346.0 234.6 345.5 237.8 345.0 237.1 344.5 237.3 344.0 238.1 343.5 229.3 343.0 228.2 342.5 228.2 342.0 228.3 341.5 228.4 341.0 229.1 340.5 231.1 340.0 231.2 339.5 231.6 339.0 231.5 338.5 229.7 338.0 228.2 337.5 228.2 337.0 228.2 336.5 228.2 336.0 228.2 335.5 228.2 335.0 228.2 334.5 228.2 334.0 228.3 333.5 228.6 333.0 228.9 332.5 229.4 332.0 230.0 331.5 230.0 331.0 228.5 330.5 228.2 330.0 228.2 329.5 228.2 329.0 228.2 328.5 228.2 328.0 228.5 327.5 229.3 327.0 229.5 326.5 229.6 326.0 228.2 325.5 228.2 325.0 228.2 324.5 228.3 324.0 228.4 323.5 228.5 323.0 228.8 322.5 229.2 322.0 229.7 321.5 230.0 321.0 230.9 320.5 232.5 320.0 232.7 319.5 233.0 319.0 229.3 318.5 228.2 318.0 228.2 317.5 228.2 317.0 228.2 316.5 228.2 316.0 228.3 315.5 228.6 315.0 229.0 314.5 229.0 314.0 228.4 313.5 228.2 313.0 228.3 312.5 228.3 312.0 228.3 311.5 228.2 311.0 228.3 310.5 228.2 310.0 228.3 309.5 228.5 309.0 228.6 308.5 228.9 308.0 229.3 307.5 230.0 307.0 230.6 306.5 230.8 306.0 228.6 305.5 228.3 305.0 228.2 304.5 228.2 304.0 228.2 303.5 228.2 303.0 228.2 302.5 228.3 302.0 228.2 301.5 228.3 301.0 228.3 300.5 228.4 300.0 228.6 299.5 228.8 299.0 228.9 298.5 229.3 298.0 229.9 297.5 230.3 297.0 231.3 296.5 233.0 296.0 234.7 295.5 236.8 295.0 237.1 294.5 238.0 294.0 237.6 293.5 233.9 293.0 228.2 292.5 228.2 292.0 228.3 291.5 228.3 291.0 228.7 290.5 230.2 290.0 231.1 289.5 231.2 289.0 231.1 288.5 231.2 288.0 228.3 287.5 228.2 287.0 228.2 286.5 228.2 286.0 228.2 285.5 228.3 285.0 228.2 284.5 228.2 284.0 228.2 283.5 228.5 283.0 228.7 282.5 229.1 282.0 229.8 281.5 230.2 281.0 229.5 280.5 228.2 280.0 228.2 279.5 228.2 279.0 228.2 278.5 228.3 278.0 228.4 277.5 228.9 277.0 229.4 276.5 229.4 276.0 228.3 275.5 228.2 275.0 228.2 274.5 228.2 274.0 228.3 273.5 228.6 273.0 228.7 272.5 229.1 272.0 229.6 271.5 230.2 271.0 231.1 270.5 231.6 270.0 232.2 269.5 232.1 269.0 231.4 268.5 228.2 268.0 228.2 267.5 228.2 267.0 228.2 266.5 228.2 266.0 228.2 265.5 228.5 265.0 228.9 264.5 229.0 264.0 229.0 263.5 228.2 263.0 228.2 262.5 228.2 262.0 228.2 261.5 228.2 261.0 228.2 260.5 228.2 260.0 228.3 259.5 228.4 259.0 228.6 258.5 228.9 258.0 229.1 257.5 229.9 257.0 230.3 256.5 230.5 256.0 230.0 255.5 228.2 255.0 228.2 254.5 228.3 254.0 228.2 253.5 228.3 253.0 228.2 252.5 228.3 252.0 228.2 251.5 228.2 251.0 228.3 250.5 228.5 250.0 228.5 249.5 228.6 249.0 229.0 248.5 229.3 248.0 229.8 247.5 230.0 247.0 230.8 246.5 232.6 246.0 233.6 245.5 236.1 245.0 238.1 244.5 237.2 244.0 238.4 243.5 237.0 243.0 228.2 242.5 228.2 242.0 228.2 241.5 228.2 241.0 228.5 240.5 229.5 240.0 230.9 239.5 231.3 239.0 231.2 238.5 231.4 238.0 228.2 237.5 228.2 237.0 228.2 236.5 228.2 236.0 228.2 235.5 228.2 235.0 228.2 234.5 228.2 234.0 228.3 233.5 228.4 233.0 228.5 232.5 229.0 232.0 229.5 231.5 230.1 231.0 230.0 230.5 228.3 230.0 228.2 229.5 228.2 229.0 228.2 228.5 228.2 228.0 228.2 227.5 228.8 227.0 229.4 226.5 229.5 226.0 228.8 225.5 228.2 225.0 228.2 224.5 228.3 224.0 228.4 223.5 228.5 223.0 228.6 222.5 229.0 222.0 229.2 221.5 229.7 221.0 230.4 220.5 231.7 220.0 232.4 219.5 232.1 219.0 232.7 218.5 228.2 218.0 228.3 217.5 228.2 217.0 228.2 216.5 228.2 216.0 228.2 215.5 228.2 215.0 228.9 214.5 229.0 214.0 229.0 213.5 228.3 213.0 228.2 212.5 228.2 212.0 228.2 211.5 228.3 211.0 228.2 210.5 228.2 210.0 228.3 209.5 228.4 209.0 228.5 208.5 228.9 208.0 229.0 207.5 229.4 207.0 230.1 206.5 230.4 206.0 230.8 205.5 228.2 205.0 228.2 204.5 228.3 204.0 228.2 203.5 228.3 203.0 228.3 202.5 228.2 202.0 228.2 201.5 228.3 201.0 228.3 200.5 228.4 200.0 228.5 199.5 228.6 199.0 228.9 198.5 229.2 198.0 229.4 197.5 229.9 197.0 230.5 196.5 231.9 196.0 232.8 195.5 235.1 195.0 236.3 194.5 238.3 194.0 237.4 193.5 238.6 193.0 228.7 192.5 228.2 192.0 228.2 191.5 228.2 191.0 228.4 190.5 229.1 190.0 230.8 189.5 231.0 189.0 231.4 188.5 231.1 188.0 229.7 187.5 228.2 187.0 228.2 186.5 228.3 186.0 228.2 185.5 228.2 185.0 228.2 184.5 228.2 184.0 228.2 183.5 228.2 183.0 228.5 182.5 228.9 182.0 229.5 181.5 229.7 181.0 230.0 180.5 228.3 180.0 228.2 179.5 228.3 179.0 228.2 178.5 228.2 178.0 228.2 177.5 228.5 177.0 229.2 176.5 229.4 176.0 229.5 175.5 228.2 175.0 228.2 174.5 228.3 174.0 228.2 173.5 228.3 173.0 228.5 172.5 228.7 172.0 229.3 171.5 229.5 171.0 230.5 170.5 230.9 170.0 232.0 169.5 232.2 169.0 232.4 168.5 229.0 168.0 228.2 167.5 228.2 167.0 228.2 166.5 228.2 166.0 228.2 165.5 228.2 165.0 228.7 164.5 229.0 164.0 229.1 163.5 228.4 163.0 228.2 162.5 228.2 162.0 228.3 161.5 228.3 161.0 228.2 160.5 228.2 160.0 228.2 159.5 228.3 159.0 228.4 158.5 228.7 158.0 228.9 157.5 229.5 157.0 230.1 156.5 230.5 156.0 230.7 155.5 228.5 155.0 228.2 154.5 228.3 154.0 228.2 153.5 228.2 153.0 228.2 152.5 228.2 152.0 228.2 151.5 228.3 151.0 228.2 150.5 228.4 150.0 228.4 149.5 228.6 149.0 228.7 148.5 228.9 148.0 229.3 147.5 229.7 147.0 230.5 146.5 231.2 146.0 232.2 145.5 234.2 145.0 236.6 144.5 236.6 144.0 238.0 143.5 238.5 143.0 232.9 142.5 228.3 142.0 228.2 141.5 228.2 141.0 228.4 140.5 228.9 140.0 230.8 139.5 231.7 139.0 231.2 138.5 231.9 138.0 232.0 137.5 228.3 137.0 228.2 136.5 228.2 136.0 228.2 135.5 228.3 135.0 228.3 134.5 228.3 134.0 228.2 133.5 228.3 133.0 228.2 132.5 228.3 132.0 228.2 131.5 228.2 131.0 228.2 130.5 228.3 130.0 228.2 129.5 228.2 129.0 228.2 128.5 228.2 128.0 228.2 127.5 228.2 127.0 228.2 126.5 228.2 126.0 228.2 125.5 228.2 125.0 228.3 124.5 228.2 124.0 228.3 123.5 228.2 123.0 228.2 122.5 228.2 122.0 228.3 121.5 228.4 121.0 228.5 120.5 228.9 120.0 229.2 119.5 229.9 119.0 231.1 118.5 232.8 118.0 233.2 117.5 233.0 117.0 230.6 116.5 228.2 116.0 228.2 115.5 228.2 115.0 228.2 114.5 228.2 114.0 228.2 113.5 228.2 113.0 228.2 112.5 228.2 112.0 228.3 111.5 228.3 111.0 228.5 110.5 228.6 110.0 229.0 109.5 229.2 109.0 229.9 108.5 230.6 108.0 231.7 107.5 233.3 107.0 234.9 106.5 236.0 106.0 237.6 105.5 238.5 105.0 232.5 104.5 228.9 104.0 229.0 103.5 229.7 103.0 230.1 102.5 231.4 102.0 232.8 101.5 234.2 101.0 236.1 100.5 236.7 100.0 236.3 99.5 234.8 99.0 228.7 98.5 229.0 98.0 229.5 97.5 229.9 97.0 231.0 96.5 232.2 96.0 233.1 95.5 236.2 95.0 237.5 94.5 237.5 94.0 237.1 93.5 228.2 93.0 228.2 92.5 228.3 92.0 228.2 91.5 228.5 91.0 228.5 90.5 228.4 90.0 228.5 89.5 228.5 89.0 228.5 88.5 228.5 88.0 228.5 87.5 228.5 87.0 228.5 86.5 228.6 86.0 228.5 85.5 228.6 85.0 228.6 84.5 228.6 84.0 228.5 83.5 228.5 83.0 228.6 82.5 228.7 82.0 228.7 81.5 228.7 81.0 228.8 80.5 228.7 80.0 228.8 79.5 228.7 79.0 228.7 78.5 228.9 78.0 228.9 77.5 228.9 77.0 228.8 76.5 228.9 76.0 229.0 75.5 229.0 75.0 229.1 74.5 228.9 74.0 229.0 73.5 229.2 73.0 229.1 72.5 229.2 72.0 229.3 71.5 229.2 71.0 229.6 70.5 230.2 70.0 231.4 69.5 232.7 69.0 235.1 68.5 234.4 68.0 234.8 67.5 231.4 67.0 228.3 66.5 228.2 66.0 228.2 65.5 228.2 65.0 228.2 64.5 228.2 64.0 228.2 63.5 228.3 63.0 228.3 62.5 228.3 62.0 228.5 61.5 228.7 61.0 228.8 60.5 229.1 60.0 229.6 59.5 229.8 59.0 230.6 58.5 232.3 58.0 233.2 57.5 235.7 57.0 236.8 56.5 238.0 56.0 239.5 55.5 230.2 55.0 228.8 54.5 229.0 54.0 229.6 53.5 229.9 53.0 230.6 52.5 231.5 52.0 233.2 51.5 235.3 51.0 237.7 50.5 237.7 50.0 239.0 49.5 230.6 49.0 228.8 48.5 229.3 48.0 229.8 47.5 230.4 47.0 231.2 46.5 232.4 46.0 234.5 45.5 236.9 45.0 237.1 44.5 239.1 44.0 238.5 43.5 228.6 43.0 228.8 42.5 229.0 42.0 229.5 41.5 229.8 41.0 230.8 40.5 231.4 40.0 233.1 39.5 235.7 39.0 237.0 38.5 238.8 38.0 238.7 37.5 233.3 37.0 228.7 36.5 228.9 36.0 229.2 35.5 229.5 35.0 230.3 34.5 231.2 34.0 232.4 33.5 234.6 33.0 236.3 32.5 237.0 32.0 238.6 31.5 238.5 31.0 228.7 30.5 228.9 30.0 229.3 29.5 229.7 29.0 230.3 28.5 231.1 28.0 232.8 27.5 235.1 27.0 236.9 26.5 236.0 26.0 236.7 25.5 229.9 25.0 229.4 24.5 230.3 24.0 230.8 23.5 232.6 23.0 233.7 22.5 234.8 22.0 235.2 21.5 235.3 21.0 228.2 20.5 228.2Z" fill="#de939d"/></svg>
<span id="t21" style="position:absolute;top:259px;font-size:10.4px;line-height:11px;white-space:nowrap;color:#94505d;font-weight:400;font-style:italic;left:23.70px;transform-origin:left center;transform:scaleX(0.8962);">02_Snare</span>
<svg style="position:absolute;left:956px;top:198px" width="32" height="56" viewBox="956 198 32 56"><path d="M961.8 208.1 H965.1 V215.3 H961.8 Z M965.6 208 L971.4 204.4 V218.8 L965.6 215.3 Z" fill="#cfcfcf"/><path d="M974.4 208.5 L981.2 215.1 M981.2 208.5 L974.4 215.1" stroke="#dadada" stroke-width="1.55" fill="none"/><path d="M963.3 247.8 V240.9 A8.6 8.6 0 0 1 980.5 240.9 V247.8" fill="none" stroke="#cfcfcf" stroke-width="1.3"/><rect x="965.3" y="242" width="2.7" height="8.7" rx="0.5" fill="#cfcfcf"/><rect x="976" y="242" width="2.7" height="8.7" rx="0.5" fill="#cfcfcf"/></svg>
<svg style="position:absolute;left:990px;top:190px" width="26" height="73" viewBox="990 190 26 73"><rect x="991.3" y="190.80" width="22.8" height="72.00" fill="#3b404c"/><rect x="991.3" y="207.80" width="22.8" height="3.40" fill="#fff"/><rect x="991.3" y="211.20" width="22.8" height="51.60" fill="#b3282e"/></svg>
<svg style="position:absolute;left:1015px;top:190px" width="4" height="73" viewBox="1015 190 4 73"><rect x="1015.4" y="190.80" width="3.1" height="1.90" fill="#272c38"/><rect x="1015.4" y="193.62" width="3.1" height="1.90" fill="#272c38"/><rect x="1015.4" y="196.44" width="3.1" height="1.90" fill="#272c38"/><rect x="1015.4" y="199.26" width="3.1" height="1.90" fill="#272c38"/><rect x="1015.4" y="202.08" width="3.1" height="1.90" fill="#272c38"/><rect x="1015.4" y="204.90" width="3.1" height="1.90" fill="#272c38"/><rect x="1015.4" y="207.72" width="3.1" height="1.90" fill="#272c38"/><rect x="1015.4" y="210.54" width="3.1" height="1.90" fill="#272c38"/><rect x="1015.4" y="213.36" width="3.1" height="1.90" fill="#272c38"/><rect x="1015.4" y="216.18" width="3.1" height="1.90" fill="#272c38"/><rect x="1015.4" y="219.00" width="3.1" height="1.90" fill="#272c38"/><rect x="1015.4" y="221.82" width="3.1" height="1.90" fill="#272c38"/><rect x="1015.4" y="224.64" width="3.1" height="1.90" fill="#272c38"/><rect x="1015.4" y="227.46" width="3.1" height="1.90" fill="#272c38"/><rect x="1015.4" y="230.28" width="3.1" height="1.90" fill="#272c38"/><rect x="1015.4" y="233.10" width="3.1" height="1.90" fill="#272c38"/><rect x="1015.4" y="235.92" width="3.1" height="1.90" fill="#272c38"/><rect x="1015.4" y="238.74" width="3.1" height="1.90" fill="#272c38"/><rect x="1015.4" y="241.56" width="3.1" height="1.90" fill="#272c38"/><rect x="1015.4" y="244.38" width="3.1" height="1.90" fill="#272c38"/><rect x="1015.4" y="247.20" width="3.1" height="1.90" fill="#272c38"/><rect x="1015.4" y="250.02" width="3.1" height="1.90" fill="#272c38"/><rect x="1015.4" y="252.84" width="3.1" height="1.90" fill="#272c38"/><rect x="1015.4" y="255.66" width="3.1" height="1.90" fill="#272c38"/><rect x="1015.4" y="258.48" width="3.1" height="1.90" fill="#272c38"/><rect x="1015.4" y="261.30" width="3.1" height="1.50" fill="#272c38"/></svg>
<svg style="position:absolute;left:948px;top:295px" width="2" height="92"><rect x="0.2" y="0.4" width="0.9" height="91.5" fill="#353a48"/></svg>
<svg style="position:absolute;left:0;top:310px" width="949" height="76" viewBox="0 310 949 76"><rect x="20" y="310.30" width="928.2" height="75.10" fill="#8c7d34"/><rect x="20" y="310.30" width="928.2" height="1.35" fill="#e2c23e"/><rect x="20" y="310.30" width="0.9" height="75.10" fill="#e2c23e"/><rect x="20" y="384.00" width="928.2" height="1.4" fill="#e2c23e"/></svg>
<svg style="position:absolute;left:0;top:312.9px" width="949" height="70" viewBox="0 312.9 949 70"><path d="M20.5 340.84 21.5 340.81 22.5 340.75 23.5 340.89 24.5 340.83 25.5 340.67 26.5 340.70 27.5 340.75 28.5 340.75 29.5 340.77 30.5 340.74 31.5 340.72 32.5 340.82 33.5 340.70 34.5 340.73 35.5 340.73 36.5 340.80 37.5 340.79 38.5 340.70 39.5 340.86 40.5 340.68 41.5 340.75 42.5 340.78 43.5 340.81 44.5 340.76 45.5 340.74 46.5 340.70 47.5 340.74 48.5 340.70 49.5 340.69 50.5 340.73 51.5 340.71 52.5 340.83 53.5 340.70 54.5 340.87 55.5 340.80 56.5 340.83 57.5 340.70 58.5 340.75 59.5 340.73 60.5 340.69 61.5 340.78 62.5 340.82 63.5 340.76 64.5 340.85 65.5 340.76 66.5 340.88 67.5 340.41 68.5 339.70 69.5 339.50 70.5 338.96 71.5 339.03 72.5 338.71 73.5 339.14 74.5 339.30 75.5 338.68 76.5 339.04 77.5 339.15 78.5 339.81 79.5 339.84 80.5 340.30 81.5 340.74 82.5 340.73 83.5 340.89 84.5 340.68 85.5 340.68 86.5 340.47 87.5 340.44 88.5 340.33 89.5 340.36 90.5 340.17 91.5 340.25 92.5 340.36 93.5 340.16 94.5 340.41 95.5 340.20 96.5 340.35 97.5 340.27 98.5 340.39 99.5 340.66 100.5 340.63 101.5 340.84 102.5 340.77 103.5 340.57 104.5 340.51 105.5 340.00 106.5 339.72 107.5 339.87 108.5 339.28 109.5 339.59 110.5 339.54 111.5 339.19 112.5 339.82 113.5 339.22 114.5 339.53 115.5 339.18 116.5 339.31 117.5 339.53 118.5 340.00 119.5 340.27 120.5 340.37 121.5 340.57 122.5 340.69 123.5 340.69 124.5 340.69 125.5 340.89 126.5 340.85 127.5 340.74 128.5 340.80 129.5 340.75 130.5 340.84 131.5 340.79 132.5 340.81 133.5 340.77 134.5 340.85 135.5 340.46 136.5 340.04 137.5 340.12 138.5 340.38 139.5 340.28 140.5 340.21 141.5 340.50 142.5 340.88 143.5 340.86 144.5 340.67 145.5 340.87 146.5 340.75 147.5 340.59 148.5 340.36 149.5 340.37 150.5 340.35 151.5 340.09 152.5 340.36 153.5 340.24 154.5 340.06 155.5 340.05 156.5 340.21 157.5 340.24 158.5 340.42 159.5 340.56 160.5 340.69 161.5 340.88 162.5 340.80 163.5 340.68 164.5 340.69 165.5 340.83 166.5 340.86 167.5 340.74 168.5 340.71 169.5 340.73 170.5 340.87 171.5 340.89 172.5 340.72 173.5 340.87 174.5 340.35 175.5 340.13 176.5 339.91 177.5 339.57 178.5 339.40 179.5 339.50 180.5 339.72 181.5 340.40 182.5 340.72 183.5 340.88 184.5 340.77 185.5 340.84 186.5 340.75 187.5 340.43 188.5 340.39 189.5 340.22 190.5 340.19 191.5 339.74 192.5 339.85 193.5 339.88 194.5 339.89 195.5 339.99 196.5 339.78 197.5 340.19 198.5 339.77 199.5 340.18 200.5 340.46 201.5 340.61 202.5 340.74 203.5 340.74 204.5 340.83 205.5 340.80 206.5 340.71 207.5 340.72 208.5 340.55 209.5 340.57 210.5 340.43 211.5 340.42 212.5 340.29 213.5 340.29 214.5 340.15 215.5 340.29 216.5 340.14 217.5 340.19 218.5 340.29 219.5 340.39 220.5 340.21 221.5 340.23 222.5 340.56 223.5 340.64 224.5 340.54 225.5 340.79 226.5 340.82 227.5 340.73 228.5 340.87 229.5 340.83 230.5 340.76 231.5 340.89 232.5 340.79 233.5 340.84 234.5 340.68 235.5 340.77 236.5 340.83 237.5 340.87 238.5 340.69 239.5 340.68 240.5 340.72 241.5 340.83 242.5 340.75 243.5 340.64 244.5 339.95 245.5 339.72 246.5 339.33 247.5 339.11 248.5 339.23 249.5 339.17 250.5 339.52 251.5 339.16 252.5 338.95 253.5 339.45 254.5 339.68 255.5 340.09 256.5 340.63 257.5 340.88 258.5 340.72 259.5 340.73 260.5 340.83 261.5 340.70 262.5 340.78 263.5 340.72 264.5 340.82 265.5 340.77 266.5 340.81 267.5 340.87 268.5 340.87 269.5 340.72 270.5 340.85 271.5 340.80 272.5 340.71 273.5 340.76 274.5 340.80 275.5 340.77 276.5 340.85 277.5 340.72 278.5 340.71 279.5 340.68 280.5 340.77 281.5 340.75 282.5 340.74 283.5 340.70 284.5 340.76 285.5 340.89 286.5 340.74 287.5 340.77 288.5 340.85 289.5 340.88 290.5 340.75 291.5 340.77 292.5 340.55 293.5 340.31 294.5 340.36 295.5 340.06 296.5 339.65 297.5 339.55 298.5 339.02 299.5 338.78 300.5 338.72 301.5 338.88 302.5 338.82 303.5 338.78 304.5 338.87 305.5 339.41 306.5 339.43 307.5 339.36 308.5 338.91 309.5 339.15 310.5 339.33 311.5 339.24 312.5 339.87 313.5 339.80 314.5 340.22 315.5 340.38 316.5 340.79 317.5 340.72 318.5 340.79 319.5 340.84 320.5 340.80 321.5 340.89 322.5 340.85 323.5 340.88 324.5 340.79 325.5 340.73 326.5 340.80 327.5 340.89 328.5 340.84 329.5 340.79 330.5 340.75 331.5 340.86 332.5 340.73 333.5 340.72 334.5 340.68 335.5 340.84 336.5 340.71 337.5 340.81 338.5 340.74 339.5 340.76 340.5 340.88 341.5 340.83 342.5 340.80 343.5 340.51 344.5 340.41 345.5 340.39 346.5 340.27 347.5 340.44 348.5 340.12 349.5 340.36 350.5 340.44 351.5 340.35 352.5 340.11 353.5 340.18 354.5 340.14 355.5 340.11 356.5 340.31 357.5 340.17 358.5 340.37 359.5 340.19 360.5 340.20 361.5 340.30 362.5 340.28 363.5 340.44 364.5 340.43 365.5 340.64 366.5 340.58 367.5 340.59 368.5 340.65 369.5 340.82 370.5 340.88 371.5 340.46 372.5 340.19 373.5 340.11 374.5 340.02 375.5 340.07 376.5 339.83 377.5 340.03 378.5 340.03 379.5 340.25 380.5 340.56 381.5 340.77 382.5 340.85 383.5 340.71 384.5 340.89 385.5 340.85 386.5 340.85 387.5 340.78 388.5 340.63 389.5 340.53 390.5 340.61 391.5 340.53 392.5 340.35 393.5 340.30 394.5 340.35 395.5 340.23 396.5 340.34 397.5 340.45 398.5 340.19 399.5 340.22 400.5 340.40 401.5 340.08 402.5 340.31 403.5 340.39 404.5 340.11 405.5 340.13 406.5 340.23 407.5 340.27 408.5 340.10 409.5 340.10 410.5 340.17 411.5 340.08 412.5 340.40 413.5 340.48 414.5 340.33 415.5 340.45 416.5 340.66 417.5 340.63 418.5 340.65 419.5 340.59 420.5 340.81 421.5 340.78 422.5 340.86 423.5 340.74 424.5 340.67 425.5 340.81 426.5 340.82 427.5 340.77 428.5 340.81 429.5 340.83 430.5 340.69 431.5 340.83 432.5 340.71 433.5 340.86 434.5 340.77 435.5 340.88 436.5 340.72 437.5 340.67 438.5 340.67 439.5 340.85 440.5 340.80 441.5 340.88 442.5 340.85 443.5 340.76 444.5 340.66 445.5 340.72 446.5 340.49 447.5 340.34 448.5 340.51 449.5 340.27 450.5 340.30 451.5 340.26 452.5 340.41 453.5 340.22 454.5 340.12 455.5 340.21 456.5 340.15 457.5 340.31 458.5 340.41 459.5 340.21 460.5 340.26 461.5 340.34 462.5 340.16 463.5 340.09 464.5 340.35 465.5 340.34 466.5 340.24 467.5 340.38 468.5 340.45 469.5 340.53 470.5 340.52 471.5 340.75 472.5 340.73 473.5 340.66 474.5 340.42 475.5 339.61 476.5 339.37 477.5 339.42 478.5 338.94 479.5 339.42 480.5 339.45 481.5 339.47 482.5 340.08 483.5 340.57 484.5 340.77 485.5 340.70 486.5 340.71 487.5 340.79 488.5 340.78 489.5 340.59 490.5 340.49 491.5 340.52 492.5 340.49 493.5 340.40 494.5 340.12 495.5 340.28 496.5 339.96 497.5 340.23 498.5 339.90 499.5 339.86 500.5 340.14 501.5 340.13 502.5 340.18 503.5 340.25 504.5 340.15 505.5 340.28 506.5 339.87 507.5 339.85 508.5 340.15 509.5 340.09 510.5 340.21 511.5 340.26 512.5 340.16 513.5 340.37 514.5 340.45 515.5 340.40 516.5 340.56 517.5 340.57 518.5 340.63 519.5 340.85 520.5 340.85 521.5 340.67 522.5 340.70 523.5 340.89 524.5 340.71 525.5 340.74 526.5 340.72 527.5 340.77 528.5 340.86 529.5 340.82 530.5 340.81 531.5 340.81 532.5 340.67 533.5 340.70 534.5 340.83 535.5 340.83 536.5 340.78 537.5 340.82 538.5 340.83 539.5 340.79 540.5 340.77 541.5 340.67 542.5 340.79 543.5 340.88 544.5 340.59 545.5 340.63 546.5 340.33 547.5 340.15 548.5 339.87 549.5 339.74 550.5 339.36 551.5 339.62 552.5 339.55 553.5 339.38 554.5 339.42 555.5 339.67 556.5 339.40 557.5 339.77 558.5 339.63 559.5 339.45 560.5 339.46 561.5 339.28 562.5 339.44 563.5 339.79 564.5 339.91 565.5 340.30 566.5 340.55 567.5 340.60 568.5 340.87 569.5 340.81 570.5 340.66 571.5 340.73 572.5 340.59 573.5 340.47 574.5 340.46 575.5 340.18 576.5 340.45 577.5 340.18 578.5 340.45 579.5 340.29 580.5 340.12 581.5 340.35 582.5 340.25 583.5 340.40 584.5 340.45 585.5 340.47 586.5 340.27 587.5 340.45 588.5 340.37 589.5 340.43 590.5 340.36 591.5 340.58 592.5 340.72 593.5 340.83 594.5 340.75 595.5 340.72 596.5 340.70 597.5 340.85 598.5 340.79 599.5 340.85 600.5 340.84 601.5 340.68 602.5 340.69 603.5 340.84 604.5 340.88 605.5 340.81 606.5 340.71 607.5 340.77 608.5 340.76 609.5 340.67 610.5 340.58 611.5 340.55 612.5 340.36 613.5 340.23 614.5 340.16 615.5 340.30 616.5 340.14 617.5 340.03 618.5 340.11 619.5 339.94 620.5 340.08 621.5 340.19 622.5 339.99 623.5 339.93 624.5 340.15 625.5 340.09 626.5 339.98 627.5 339.97 628.5 340.27 629.5 339.91 630.5 340.06 631.5 340.11 632.5 340.12 633.5 340.36 634.5 340.20 635.5 340.45 636.5 340.32 637.5 340.37 638.5 340.53 639.5 340.80 640.5 340.69 641.5 340.78 642.5 340.84 643.5 340.70 644.5 340.70 645.5 340.52 646.5 340.45 647.5 340.33 648.5 340.04 649.5 340.29 650.5 340.22 651.5 340.24 652.5 340.06 653.5 339.90 654.5 340.13 655.5 340.19 656.5 339.87 657.5 339.87 658.5 340.23 659.5 340.15 660.5 340.43 661.5 340.66 662.5 339.94 663.5 339.60 664.5 339.62 665.5 339.09 666.5 339.31 667.5 339.41 668.5 339.54 669.5 339.46 670.5 339.38 671.5 339.14 672.5 339.63 673.5 340.02 674.5 340.56 675.5 340.80 676.5 340.85 677.5 340.84 678.5 340.78 679.5 340.70 680.5 340.81 681.5 340.77 682.5 340.69 683.5 340.86 684.5 340.73 685.5 340.73 686.5 340.77 687.5 340.76 688.5 340.83 689.5 340.59 690.5 340.76 691.5 340.47 692.5 340.51 693.5 340.39 694.5 340.30 695.5 340.39 696.5 340.38 697.5 340.17 698.5 339.90 699.5 339.94 700.5 339.93 701.5 340.00 702.5 340.21 703.5 339.94 704.5 340.21 705.5 340.27 706.5 340.05 707.5 340.03 708.5 340.31 709.5 340.16 710.5 340.05 711.5 339.96 712.5 340.00 713.5 340.07 714.5 340.17 715.5 339.94 716.5 340.30 717.5 340.14 718.5 340.27 719.5 340.11 720.5 339.48 721.5 339.65 722.5 339.39 723.5 339.07 724.5 339.74 725.5 340.51 726.5 340.66 727.5 340.88 728.5 340.82 729.5 340.82 730.5 340.86 731.5 340.87 732.5 340.88 733.5 340.85 734.5 340.73 735.5 340.72 736.5 340.75 737.5 340.74 738.5 340.68 739.5 340.88 740.5 340.68 741.5 340.73 742.5 340.80 743.5 340.76 744.5 340.82 745.5 340.83 746.5 340.83 747.5 340.75 748.5 340.63 749.5 340.74 750.5 340.72 751.5 340.49 752.5 340.53 753.5 340.51 754.5 340.29 755.5 340.13 756.5 340.34 757.5 340.47 758.5 340.18 759.5 340.19 760.5 340.39 761.5 340.40 762.5 340.22 763.5 340.44 764.5 340.29 765.5 340.29 766.5 340.48 767.5 340.39 768.5 340.38 769.5 340.48 770.5 340.61 771.5 340.83 772.5 340.69 773.5 340.76 774.5 340.83 775.5 340.69 776.5 340.55 777.5 339.51 778.5 339.42 779.5 338.95 780.5 339.65 781.5 339.42 782.5 338.92 783.5 339.96 784.5 340.51 785.5 340.64 786.5 340.57 787.5 340.66 788.5 340.53 789.5 340.51 790.5 340.48 791.5 340.17 792.5 340.13 793.5 340.30 794.5 340.29 795.5 339.89 796.5 340.05 797.5 340.11 798.5 339.89 799.5 340.18 800.5 340.22 801.5 340.17 802.5 340.27 803.5 340.13 804.5 340.01 805.5 340.20 806.5 340.04 807.5 339.90 808.5 340.24 809.5 340.26 810.5 340.06 811.5 340.20 812.5 340.20 813.5 340.29 814.5 340.34 815.5 340.52 816.5 340.48 817.5 340.53 818.5 340.64 819.5 340.71 820.5 340.74 821.5 340.78 822.5 340.79 823.5 340.85 824.5 340.87 825.5 340.85 826.5 340.83 827.5 340.77 828.5 340.70 829.5 340.67 830.5 340.81 831.5 340.72 832.5 340.73 833.5 340.67 834.5 340.70 835.5 340.87 836.5 340.87 837.5 340.71 838.5 340.74 839.5 340.84 840.5 340.88 841.5 340.68 842.5 340.73 843.5 340.75 844.5 340.74 845.5 340.85 846.5 340.68 847.5 340.61 848.5 340.21 849.5 340.03 850.5 339.97 851.5 339.25 852.5 339.45 853.5 339.54 854.5 339.33 855.5 339.26 856.5 339.42 857.5 339.08 858.5 339.44 859.5 338.95 860.5 339.21 861.5 339.14 862.5 339.92 863.5 340.12 864.5 340.39 865.5 340.59 866.5 340.51 867.5 340.43 868.5 340.38 869.5 340.17 870.5 340.16 871.5 340.14 872.5 340.29 873.5 340.19 874.5 340.38 875.5 340.26 876.5 340.48 877.5 340.40 878.5 340.30 879.5 340.38 880.5 340.27 881.5 340.64 882.5 340.56 883.5 340.57 884.5 340.79 885.5 340.76 886.5 340.70 887.5 340.82 888.5 340.77 889.5 340.77 890.5 340.89 891.5 340.86 892.5 340.70 893.5 340.84 894.5 340.75 895.5 340.72 896.5 340.67 897.5 340.83 898.5 340.70 899.5 340.76 900.5 340.80 901.5 340.72 902.5 340.07 903.5 339.72 904.5 339.13 905.5 339.24 906.5 339.35 907.5 339.42 908.5 339.17 909.5 338.86 910.5 338.79 911.5 339.28 912.5 339.14 913.5 338.76 914.5 339.16 915.5 339.92 916.5 340.11 917.5 340.63 918.5 340.60 919.5 340.47 920.5 340.47 921.5 340.57 922.5 340.42 923.5 340.20 924.5 340.14 925.5 340.42 926.5 340.15 927.5 340.18 928.5 340.40 929.5 340.40 930.5 340.25 931.5 340.34 932.5 340.12 933.5 340.33 934.5 340.31 935.5 340.27 936.5 340.09 937.5 340.18 938.5 340.41 939.5 340.23 940.5 340.51 941.5 340.46 942.5 340.49 943.5 340.53 944.5 340.50 945.5 340.68 946.5 340.71 947.5 340.70 947.5 341.92 946.5 342.07 945.5 342.22 944.5 342.06 943.5 342.30 942.5 342.26 941.5 342.29 940.5 342.47 939.5 342.51 938.5 342.60 937.5 342.43 936.5 342.68 935.5 342.43 934.5 342.58 933.5 342.54 932.5 342.59 931.5 342.44 930.5 342.65 929.5 342.62 928.5 342.58 927.5 342.48 926.5 342.72 925.5 342.65 924.5 342.66 923.5 342.48 922.5 342.56 921.5 342.36 920.5 342.27 919.5 342.07 918.5 342.09 917.5 342.17 916.5 342.72 915.5 342.97 914.5 343.48 913.5 343.92 912.5 343.86 911.5 343.61 910.5 343.34 909.5 343.88 908.5 344.04 907.5 343.92 906.5 343.97 905.5 343.41 904.5 343.18 903.5 343.03 902.5 342.77 901.5 342.33 900.5 342.07 899.5 341.94 898.5 342.09 897.5 341.96 896.5 341.94 895.5 341.96 894.5 341.92 893.5 342.07 892.5 342.04 891.5 341.93 890.5 341.92 889.5 341.99 888.5 341.99 887.5 341.92 886.5 342.02 885.5 342.02 884.5 342.09 883.5 342.10 882.5 342.10 881.5 342.31 880.5 342.48 879.5 342.57 878.5 342.55 877.5 342.70 876.5 342.39 875.5 342.55 874.5 342.37 873.5 342.40 872.5 342.50 871.5 342.35 870.5 342.44 869.5 342.38 868.5 342.41 867.5 342.33 866.5 342.27 865.5 342.16 864.5 342.63 863.5 342.80 862.5 342.81 861.5 343.29 860.5 343.45 859.5 343.70 858.5 343.19 857.5 343.73 856.5 343.40 855.5 343.67 854.5 343.44 853.5 343.82 852.5 343.32 851.5 343.60 850.5 343.19 849.5 342.84 848.5 342.44 847.5 342.06 846.5 341.96 845.5 342.03 844.5 341.91 843.5 342.08 842.5 342.07 841.5 341.96 840.5 342.02 839.5 342.07 838.5 341.91 837.5 341.97 836.5 341.93 835.5 342.11 834.5 342.03 833.5 342.06 832.5 342.09 831.5 342.01 830.5 341.93 829.5 341.92 828.5 342.10 827.5 342.10 826.5 341.93 825.5 342.09 824.5 342.10 823.5 342.13 822.5 342.07 821.5 342.01 820.5 342.05 819.5 342.00 818.5 342.15 817.5 342.37 816.5 342.29 815.5 342.52 814.5 342.32 813.5 342.64 812.5 342.72 811.5 342.58 810.5 342.68 809.5 342.63 808.5 342.64 807.5 342.65 806.5 342.49 805.5 342.54 804.5 342.76 803.5 342.65 802.5 342.91 801.5 342.80 800.5 342.92 799.5 342.93 798.5 342.61 797.5 342.51 796.5 342.54 795.5 342.92 794.5 342.89 793.5 342.47 792.5 342.36 791.5 342.56 790.5 342.52 789.5 342.33 788.5 342.28 787.5 342.11 786.5 342.08 785.5 341.99 784.5 342.28 783.5 343.33 782.5 343.35 781.5 343.43 780.5 343.86 779.5 343.33 778.5 343.48 777.5 343.04 776.5 342.28 775.5 342.01 774.5 342.10 773.5 342.12 772.5 341.94 771.5 342.12 770.5 342.26 769.5 342.30 768.5 342.19 767.5 342.44 766.5 342.40 765.5 342.49 764.5 342.47 763.5 342.63 762.5 342.61 761.5 342.56 760.5 342.41 759.5 342.43 758.5 342.47 757.5 342.61 756.5 342.49 755.5 342.55 754.5 342.41 753.5 342.32 752.5 342.25 751.5 342.32 750.5 342.13 749.5 342.09 748.5 342.05 747.5 342.07 746.5 341.99 745.5 342.01 744.5 342.07 743.5 341.91 742.5 342.01 741.5 342.03 740.5 342.00 739.5 342.06 738.5 341.91 737.5 342.02 736.5 341.93 735.5 342.02 734.5 342.03 733.5 341.93 732.5 342.12 731.5 342.12 730.5 342.05 729.5 341.98 728.5 342.01 727.5 342.06 726.5 342.15 725.5 342.57 724.5 343.40 723.5 343.36 722.5 343.24 721.5 343.42 720.5 343.78 719.5 342.36 718.5 342.40 717.5 342.67 716.5 342.88 715.5 342.72 714.5 342.51 713.5 342.69 712.5 342.83 711.5 342.77 710.5 342.61 709.5 342.58 708.5 342.49 707.5 342.62 706.5 342.74 705.5 342.63 704.5 342.68 703.5 342.65 702.5 342.70 701.5 342.64 700.5 342.69 699.5 342.67 698.5 342.50 697.5 342.54 696.5 342.36 695.5 342.57 694.5 342.25 693.5 342.28 692.5 342.46 691.5 342.21 690.5 342.06 689.5 342.02 688.5 342.08 687.5 341.94 686.5 342.06 685.5 341.94 684.5 342.02 683.5 342.13 682.5 341.95 681.5 342.07 680.5 341.92 679.5 342.07 678.5 342.12 677.5 342.08 676.5 342.05 675.5 341.92 674.5 342.25 673.5 342.54 672.5 343.02 671.5 343.48 670.5 343.80 669.5 343.53 668.5 343.65 667.5 343.72 666.5 343.88 665.5 343.31 664.5 343.63 663.5 343.30 662.5 342.78 661.5 342.15 660.5 342.35 659.5 342.35 658.5 342.50 657.5 342.71 656.5 342.54 655.5 342.63 654.5 342.51 653.5 342.73 652.5 342.92 651.5 342.53 650.5 342.72 649.5 342.71 648.5 342.53 647.5 342.56 646.5 342.43 645.5 342.42 644.5 342.23 643.5 342.06 642.5 342.06 641.5 342.03 640.5 342.02 639.5 342.18 638.5 342.14 637.5 342.38 636.5 342.36 635.5 342.57 634.5 342.51 633.5 342.40 632.5 342.78 631.5 342.71 630.5 342.89 629.5 342.71 628.5 342.73 627.5 342.76 626.5 342.64 625.5 342.57 624.5 342.96 623.5 342.95 622.5 342.59 621.5 342.91 620.5 342.76 619.5 342.89 618.5 342.51 617.5 342.78 616.5 342.73 615.5 342.75 614.5 342.61 613.5 342.38 612.5 342.33 611.5 342.33 610.5 342.15 609.5 342.26 608.5 342.06 607.5 342.03 606.5 341.92 605.5 342.10 604.5 342.02 603.5 341.95 602.5 342.00 601.5 341.94 600.5 342.09 599.5 342.10 598.5 341.98 597.5 341.92 596.5 342.07 595.5 342.11 594.5 341.99 593.5 342.07 592.5 342.24 591.5 342.12 590.5 342.34 589.5 342.29 588.5 342.57 587.5 342.41 586.5 342.55 585.5 342.70 584.5 342.58 583.5 342.48 582.5 342.67 581.5 342.49 580.5 342.65 579.5 342.49 578.5 342.32 577.5 342.72 576.5 342.49 575.5 342.51 574.5 342.22 573.5 342.34 572.5 342.19 571.5 342.10 570.5 341.98 569.5 341.91 568.5 341.91 567.5 342.14 566.5 342.21 565.5 342.67 564.5 342.65 563.5 342.70 562.5 343.07 561.5 343.53 560.5 343.48 559.5 343.61 558.5 342.99 557.5 343.20 556.5 343.07 555.5 343.23 554.5 343.08 553.5 343.58 552.5 343.23 551.5 343.32 550.5 343.21 549.5 343.33 548.5 343.11 547.5 342.57 546.5 342.71 545.5 342.43 544.5 342.19 543.5 342.00 542.5 342.05 541.5 342.03 540.5 342.10 539.5 342.02 538.5 342.12 537.5 342.05 536.5 342.07 535.5 341.94 534.5 342.13 533.5 342.09 532.5 342.12 531.5 342.04 530.5 341.98 529.5 342.02 528.5 342.04 527.5 342.01 526.5 341.93 525.5 342.03 524.5 342.13 523.5 342.10 522.5 341.93 521.5 342.00 520.5 341.92 519.5 341.97 518.5 342.14 517.5 342.05 516.5 342.34 515.5 342.20 514.5 342.38 513.5 342.46 512.5 342.55 511.5 342.71 510.5 342.46 509.5 342.82 508.5 342.93 507.5 342.60 506.5 342.96 505.5 342.57 504.5 342.92 503.5 342.54 502.5 342.54 501.5 342.95 500.5 342.53 499.5 342.74 498.5 342.51 497.5 342.87 496.5 342.57 495.5 342.48 494.5 342.67 493.5 342.73 492.5 342.60 491.5 342.53 490.5 342.15 489.5 342.15 488.5 342.08 487.5 342.17 486.5 341.91 485.5 342.05 484.5 342.07 483.5 342.19 482.5 342.81 481.5 343.89 480.5 343.24 479.5 343.44 478.5 343.86 477.5 343.35 476.5 343.77 475.5 342.78 474.5 342.23 473.5 342.16 472.5 342.11 471.5 342.20 470.5 342.34 469.5 342.20 468.5 342.34 467.5 342.22 466.5 342.60 465.5 342.63 464.5 342.53 463.5 342.38 462.5 342.50 461.5 342.50 460.5 342.48 459.5 342.72 458.5 342.39 457.5 342.53 456.5 342.56 455.5 342.69 454.5 342.51 453.5 342.68 452.5 342.33 451.5 342.43 450.5 342.62 449.5 342.54 448.5 342.25 447.5 342.43 446.5 342.32 445.5 342.19 444.5 342.09 443.5 342.18 442.5 342.00 441.5 342.03 440.5 341.98 439.5 341.91 438.5 341.92 437.5 342.08 436.5 342.01 435.5 341.95 434.5 341.95 433.5 342.03 432.5 341.91 431.5 341.96 430.5 342.09 429.5 342.01 428.5 342.10 427.5 342.03 426.5 342.01 425.5 341.94 424.5 342.10 423.5 342.13 422.5 342.08 421.5 341.95 420.5 342.04 419.5 342.09 418.5 342.26 417.5 342.22 416.5 342.37 415.5 342.39 414.5 342.31 413.5 342.29 412.5 342.66 411.5 342.69 410.5 342.48 409.5 342.51 408.5 342.68 407.5 342.49 406.5 342.69 405.5 342.72 404.5 342.61 403.5 342.39 402.5 342.35 401.5 342.45 400.5 342.46 399.5 342.56 398.5 342.49 397.5 342.54 396.5 342.51 395.5 342.32 394.5 342.42 393.5 342.28 392.5 342.37 391.5 342.17 390.5 342.27 389.5 342.30 388.5 342.18 387.5 342.18 386.5 342.04 385.5 342.11 384.5 342.12 383.5 341.93 382.5 341.93 381.5 341.95 380.5 342.29 379.5 342.70 378.5 342.95 377.5 343.18 376.5 342.65 375.5 343.00 374.5 342.67 373.5 343.00 372.5 342.42 371.5 342.09 370.5 342.00 369.5 341.99 368.5 342.11 367.5 342.10 366.5 342.29 365.5 342.35 364.5 342.18 363.5 342.46 362.5 342.26 361.5 342.36 360.5 342.47 359.5 342.56 358.5 342.39 357.5 342.51 356.5 342.41 355.5 342.46 354.5 342.54 353.5 342.61 352.5 342.39 351.5 342.59 350.5 342.48 349.5 342.66 348.5 342.34 347.5 342.48 346.5 342.21 345.5 342.44 344.5 342.24 343.5 342.10 342.5 342.16 341.5 341.94 340.5 341.93 339.5 341.91 338.5 342.12 337.5 341.93 336.5 342.05 335.5 341.97 334.5 341.98 333.5 342.01 332.5 341.97 331.5 341.92 330.5 341.99 329.5 341.95 328.5 341.93 327.5 342.12 326.5 342.00 325.5 341.92 324.5 342.00 323.5 341.91 322.5 342.02 321.5 341.93 320.5 341.95 319.5 341.95 318.5 341.95 317.5 341.94 316.5 342.07 315.5 342.29 314.5 342.65 313.5 342.81 312.5 343.38 311.5 343.31 310.5 343.59 309.5 343.84 308.5 343.75 307.5 343.72 306.5 343.47 305.5 343.34 304.5 343.71 303.5 343.67 302.5 344.08 301.5 343.59 300.5 343.90 299.5 343.80 298.5 343.33 297.5 343.64 296.5 343.40 295.5 342.66 294.5 342.57 293.5 342.43 292.5 342.05 291.5 342.12 290.5 342.01 289.5 342.02 288.5 342.03 287.5 342.01 286.5 342.02 285.5 342.08 284.5 342.07 283.5 342.02 282.5 341.98 281.5 342.13 280.5 342.04 279.5 341.99 278.5 342.11 277.5 341.92 276.5 341.96 275.5 342.04 274.5 341.95 273.5 341.94 272.5 342.08 271.5 342.07 270.5 341.95 269.5 342.07 268.5 341.93 267.5 341.97 266.5 342.10 265.5 342.08 264.5 342.00 263.5 341.99 262.5 341.96 261.5 341.92 260.5 341.99 259.5 341.99 258.5 342.03 257.5 342.07 256.5 342.13 255.5 342.63 254.5 343.09 253.5 343.64 252.5 343.25 251.5 343.23 250.5 343.82 249.5 343.62 248.5 343.28 247.5 343.66 246.5 343.37 245.5 342.83 244.5 342.72 243.5 342.30 242.5 342.09 241.5 342.06 240.5 342.08 239.5 341.99 238.5 341.93 237.5 342.11 236.5 342.06 235.5 341.94 234.5 342.00 233.5 342.04 232.5 342.02 231.5 341.98 230.5 342.06 229.5 341.99 228.5 342.09 227.5 341.93 226.5 342.00 225.5 342.15 224.5 342.27 223.5 342.31 222.5 342.26 221.5 342.34 220.5 342.70 219.5 342.61 218.5 342.41 217.5 342.71 216.5 342.48 215.5 342.61 214.5 342.54 213.5 342.65 212.5 342.56 211.5 342.72 210.5 342.54 209.5 342.30 208.5 342.22 207.5 342.03 206.5 342.01 205.5 342.10 204.5 342.07 203.5 342.12 202.5 342.04 201.5 342.31 200.5 342.38 199.5 342.74 198.5 342.83 197.5 342.95 196.5 342.64 195.5 342.89 194.5 342.83 193.5 342.95 192.5 342.65 191.5 342.78 190.5 342.82 189.5 342.61 188.5 342.42 187.5 342.25 186.5 342.14 185.5 341.95 184.5 342.09 183.5 341.98 182.5 342.12 181.5 342.19 180.5 342.94 179.5 342.83 178.5 343.17 177.5 343.33 176.5 343.33 175.5 343.13 174.5 342.22 173.5 341.93 172.5 341.92 171.5 341.94 170.5 342.04 169.5 342.03 168.5 342.06 167.5 342.11 166.5 342.09 165.5 342.01 164.5 342.08 163.5 341.99 162.5 342.10 161.5 342.00 160.5 342.15 159.5 342.17 158.5 342.47 157.5 342.64 156.5 342.56 155.5 342.67 154.5 342.57 153.5 342.67 152.5 342.48 151.5 342.57 150.5 342.64 149.5 342.49 148.5 342.35 147.5 342.30 146.5 342.05 145.5 342.02 144.5 342.10 143.5 341.92 142.5 341.94 141.5 342.07 140.5 342.61 139.5 342.63 138.5 342.52 137.5 342.78 136.5 342.40 135.5 342.31 134.5 342.09 133.5 342.09 132.5 341.95 131.5 342.08 130.5 342.10 129.5 341.98 128.5 342.12 127.5 342.03 126.5 341.98 125.5 342.07 124.5 342.04 123.5 342.11 122.5 342.06 121.5 342.03 120.5 342.33 119.5 342.46 118.5 342.83 117.5 343.18 116.5 343.55 115.5 343.13 114.5 343.63 113.5 343.66 112.5 343.63 111.5 343.08 110.5 343.26 109.5 343.26 108.5 343.16 107.5 343.03 106.5 342.83 105.5 342.72 104.5 342.32 103.5 342.24 102.5 341.95 101.5 341.94 100.5 342.06 99.5 342.23 98.5 342.19 97.5 342.39 96.5 342.45 95.5 342.36 94.5 342.49 93.5 342.41 92.5 342.41 91.5 342.61 90.5 342.33 89.5 342.47 88.5 342.56 87.5 342.34 86.5 342.24 85.5 342.17 84.5 342.19 83.5 341.92 82.5 342.07 81.5 341.99 80.5 342.44 79.5 342.66 78.5 343.41 77.5 343.79 76.5 343.31 75.5 343.74 74.5 343.55 73.5 343.90 72.5 343.73 71.5 343.82 70.5 343.80 69.5 343.34 68.5 342.83 67.5 342.63 66.5 342.10 65.5 341.94 64.5 342.00 63.5 341.92 62.5 341.93 61.5 342.13 60.5 342.13 59.5 341.98 58.5 341.92 57.5 341.92 56.5 342.08 55.5 341.94 54.5 342.09 53.5 342.13 52.5 341.92 51.5 342.04 50.5 341.96 49.5 342.04 48.5 342.12 47.5 341.94 46.5 342.13 45.5 342.12 44.5 342.11 43.5 342.04 42.5 341.99 41.5 341.98 40.5 342.01 39.5 341.96 38.5 341.93 37.5 342.12 36.5 342.09 35.5 342.11 34.5 342.10 33.5 342.01 32.5 341.92 31.5 342.04 30.5 341.92 29.5 342.07 28.5 342.10 27.5 341.94 26.5 342.01 25.5 342.01 24.5 341.96 23.5 342.10 22.5 341.92 21.5 342.04 20.5 342.03Z" fill="#eee08c"/></svg>
<span id="t24" style="position:absolute;top:373px;font-size:10.4px;line-height:11px;white-space:nowrap;color:#ad9e52;font-weight:400;font-style:italic;left:23.70px;transform-origin:left center;transform:scaleX(0.9544);">11_HammondLeslieLo</span>
<svg style="position:absolute;left:956px;top:311.9px" width="32" height="56" viewBox="956 198 32 56"><path d="M961.8 208.1 H965.1 V215.3 H961.8 Z M965.6 208 L971.4 204.4 V218.8 L965.6 215.3 Z" fill="#cfcfcf"/><path d="M974.4 208.5 L981.2 215.1 M981.2 208.5 L974.4 215.1" stroke="#dadada" stroke-width="1.55" fill="none"/><path d="M963.3 247.8 V240.9 A8.6 8.6 0 0 1 980.5 240.9 V247.8" fill="none" stroke="#cfcfcf" stroke-width="1.3"/><rect x="965.3" y="242" width="2.7" height="8.7" rx="0.5" fill="#cfcfcf"/><rect x="976" y="242" width="2.7" height="8.7" rx="0.5" fill="#cfcfcf"/></svg>
<svg style="position:absolute;left:990px;top:304px" width="26" height="73" viewBox="990 304 26 73"><rect x="991.3" y="304.70" width="22.8" height="72.00" fill="#3b404c"/><rect x="991.3" y="321.70" width="22.8" height="3.40" fill="#fff"/><rect x="991.3" y="325.10" width="22.8" height="51.60" fill="#e2c23e"/></svg>
<svg style="position:absolute;left:1015px;top:304px" width="4" height="73" viewBox="1015 304 4 73"><rect x="1015.4" y="304.70" width="3.1" height="1.90" fill="#272c38"/><rect x="1015.4" y="307.52" width="3.1" height="1.90" fill="#272c38"/><rect x="1015.4" y="310.34" width="3.1" height="1.90" fill="#272c38"/><rect x="1015.4" y="313.16" width="3.1" height="1.90" fill="#272c38"/><rect x="1015.4" y="315.98" width="3.1" height="1.90" fill="#272c38"/><rect x="1015.4" y="318.80" width="3.1" height="1.90" fill="#272c38"/><rect x="1015.4" y="321.62" width="3.1" height="1.90" fill="#272c38"/><rect x="1015.4" y="324.44" width="3.1" height="1.90" fill="#272c38"/><rect x="1015.4" y="327.26" width="3.1" height="1.90" fill="#272c38"/><rect x="1015.4" y="330.08" width="3.1" height="1.90" fill="#272c38"/><rect x="1015.4" y="332.90" width="3.1" height="1.90" fill="#272c38"/><rect x="1015.4" y="335.72" width="3.1" height="1.90" fill="#272c38"/><rect x="1015.4" y="338.54" width="3.1" height="1.90" fill="#272c38"/><rect x="1015.4" y="341.36" width="3.1" height="1.90" fill="#272c38"/><rect x="1015.4" y="344.18" width="3.1" height="1.90" fill="#272c38"/><rect x="1015.4" y="347.00" width="3.1" height="1.90" fill="#272c38"/><rect x="1015.4" y="349.82" width="3.1" height="1.90" fill="#272c38"/><rect x="1015.4" y="352.64" width="3.1" height="1.90" fill="#272c38"/><rect x="1015.4" y="355.46" width="3.1" height="1.90" fill="#272c38"/><rect x="1015.4" y="358.28" width="3.1" height="1.90" fill="#272c38"/><rect x="1015.4" y="361.10" width="3.1" height="1.90" fill="#272c38"/><rect x="1015.4" y="363.92" width="3.1" height="1.90" fill="#272c38"/><rect x="1015.4" y="366.74" width="3.1" height="1.90" fill="#272c38"/><rect x="1015.4" y="369.56" width="3.1" height="1.90" fill="#272c38"/><rect x="1015.4" y="372.38" width="3.1" height="1.90" fill="#272c38"/><rect x="1015.4" y="375.20" width="3.1" height="1.50" fill="#272c38"/></svg>
<svg style="position:absolute;left:948px;top:409px" width="2" height="92"><rect x="0.2" y="0.3" width="0.9" height="91.5" fill="#353a48"/></svg>
<svg style="position:absolute;left:0;top:424px" width="949" height="76" viewBox="0 424 949 76"><rect x="20" y="424.20" width="928.2" height="75.10" fill="#6a3498"/><rect x="20" y="424.20" width="928.2" height="1.35" fill="#a32ee0"/><rect x="20" y="424.20" width="0.9" height="75.10" fill="#a32ee0"/><rect x="20" y="497.90" width="928.2" height="1.4" fill="#a32ee0"/></svg>
<svg style="position:absolute;left:0;top:426.8px" width="949" height="70" viewBox="0 426.8 949 70"><path d="M20.5 454.70 21.0 454.67 21.5 454.68 22.0 454.83 22.5 454.64 23.0 454.65 23.5 454.74 24.0 454.72 24.5 454.83 25.0 454.78 25.5 454.67 26.0 454.67 26.5 454.71 27.0 454.83 27.5 454.79 28.0 454.63 28.5 454.77 29.0 454.72 29.5 454.69 30.0 454.43 30.5 454.23 31.0 454.43 31.5 454.52 32.0 454.46 32.5 454.57 33.0 454.44 33.5 454.26 34.0 454.56 34.5 454.56 35.0 454.63 35.5 454.68 36.0 454.83 36.5 454.76 37.0 454.83 37.5 454.80 38.0 454.79 38.5 454.64 39.0 454.76 39.5 454.72 40.0 454.81 40.5 454.67 41.0 454.83 41.5 454.82 42.0 454.71 42.5 454.76 43.0 454.72 43.5 454.77 44.0 454.82 44.5 454.56 45.0 454.61 45.5 454.19 46.0 454.42 46.5 454.34 47.0 454.51 47.5 454.73 48.0 454.83 48.5 454.66 49.0 454.68 49.5 454.70 50.0 454.81 50.5 454.80 51.0 454.77 51.5 454.63 52.0 454.63 52.5 454.73 53.0 454.73 53.5 454.75 54.0 454.76 54.5 454.63 55.0 454.73 55.5 454.70 56.0 454.33 56.5 454.34 57.0 454.16 57.5 454.21 58.0 454.34 58.5 454.38 59.0 454.33 59.5 454.64 60.0 454.70 60.5 454.83 61.0 454.78 61.5 454.74 62.0 454.70 62.5 454.76 63.0 454.68 63.5 454.76 64.0 454.65 64.5 454.63 65.0 454.73 65.5 454.80 66.0 454.64 66.5 454.40 67.0 454.09 67.5 453.76 68.0 453.83 68.5 453.85 69.0 453.85 69.5 454.22 70.0 453.97 70.5 454.10 71.0 453.85 71.5 454.21 72.0 454.62 72.5 454.77 73.0 454.79 73.5 454.74 74.0 454.71 74.5 454.79 75.0 454.83 75.5 454.78 76.0 454.81 76.5 454.76 77.0 454.71 77.5 454.72 78.0 454.71 78.5 454.66 79.0 454.66 79.5 454.76 80.0 454.71 80.5 454.63 81.0 454.71 81.5 454.65 82.0 454.81 82.5 454.71 83.0 454.70 83.5 454.76 84.0 454.79 84.5 454.63 85.0 454.63 85.5 454.71 86.0 454.63 86.5 454.67 87.0 454.42 87.5 454.55 88.0 454.67 88.5 454.66 89.0 454.67 89.5 454.83 90.0 454.78 90.5 454.67 91.0 454.78 91.5 454.63 92.0 454.71 92.5 454.70 93.0 454.68 93.5 454.51 94.0 454.42 94.5 454.37 95.0 454.30 95.5 454.17 96.0 454.48 96.5 454.30 97.0 454.29 97.5 454.72 98.0 454.75 98.5 454.69 99.0 454.73 99.5 454.63 100.0 454.34 100.5 454.41 101.0 454.51 101.5 454.25 102.0 454.54 102.5 454.48 103.0 454.73 103.5 454.73 104.0 454.80 104.5 454.66 105.0 454.66 105.5 454.32 106.0 454.49 106.5 454.07 107.0 454.19 107.5 454.13 108.0 454.38 108.5 454.52 109.0 454.77 109.5 454.80 110.0 454.75 110.5 454.70 111.0 454.81 111.5 454.82 112.0 454.71 112.5 454.65 113.0 454.74 113.5 454.71 114.0 454.64 114.5 454.82 115.0 454.80 115.5 454.73 116.0 454.72 116.5 454.75 117.0 454.71 117.5 454.61 118.0 454.65 118.5 454.47 119.0 454.43 119.5 454.60 120.0 454.58 120.5 454.40 121.0 454.29 121.5 454.49 122.0 454.60 122.5 454.59 123.0 454.27 123.5 454.53 124.0 454.26 124.5 454.31 125.0 454.39 125.5 454.53 126.0 454.39 126.5 454.47 127.0 454.31 127.5 454.36 128.0 454.38 128.5 454.51 129.0 454.51 129.5 454.72 130.0 454.73 130.5 454.60 131.0 454.68 131.5 454.74 132.0 454.70 132.5 454.74 133.0 454.80 133.5 454.76 134.0 454.65 134.5 454.78 135.0 454.80 135.5 454.79 136.0 454.83 136.5 454.76 137.0 454.69 137.5 454.74 138.0 454.81 138.5 454.77 139.0 454.68 139.5 454.79 140.0 454.79 140.5 454.75 141.0 454.76 141.5 454.61 142.0 454.28 142.5 454.32 143.0 453.82 143.5 453.84 144.0 453.64 144.5 454.20 145.0 453.98 145.5 453.90 146.0 453.92 146.5 454.18 147.0 453.69 147.5 453.72 148.0 454.32 148.5 454.46 149.0 454.70 149.5 454.77 150.0 454.83 150.5 454.80 151.0 454.75 151.5 454.82 152.0 454.81 152.5 454.64 153.0 454.66 153.5 454.83 154.0 454.73 154.5 454.71 155.0 454.53 155.5 454.57 156.0 454.37 156.5 454.61 157.0 454.66 157.5 454.53 158.0 454.78 158.5 454.78 159.0 454.74 159.5 454.78 160.0 454.69 160.5 454.79 161.0 454.76 161.5 454.75 162.0 454.68 162.5 454.65 163.0 454.68 163.5 454.74 164.0 454.70 164.5 454.68 165.0 454.78 165.5 454.75 166.0 454.82 166.5 454.78 167.0 454.78 167.5 454.58 168.0 454.67 168.5 454.53 169.0 454.18 169.5 454.28 170.0 454.36 170.5 454.40 171.0 454.38 171.5 454.47 172.0 454.67 172.5 454.69 173.0 454.64 173.5 454.81 174.0 454.64 174.5 454.74 175.0 454.67 175.5 454.72 176.0 454.71 176.5 454.66 177.0 454.82 177.5 454.83 178.0 454.73 178.5 454.75 179.0 454.78 179.5 454.67 180.0 454.53 180.5 454.56 181.0 454.32 181.5 454.36 182.0 454.56 182.5 454.52 183.0 454.80 183.5 454.81 184.0 454.65 184.5 454.67 185.0 454.69 185.5 454.70 186.0 454.76 186.5 454.66 187.0 454.64 187.5 454.49 188.0 454.45 188.5 454.39 189.0 454.42 189.5 454.26 190.0 454.38 190.5 454.56 191.0 454.72 191.5 454.64 192.0 454.59 192.5 454.52 193.0 454.14 193.5 454.02 194.0 453.91 194.5 454.02 195.0 454.00 195.5 453.90 196.0 454.03 196.5 454.01 197.0 454.28 197.5 453.93 198.0 454.07 198.5 454.48 199.0 454.64 199.5 454.70 200.0 454.64 200.5 454.75 201.0 454.69 201.5 454.68 202.0 454.65 202.5 454.77 203.0 454.70 203.5 454.80 204.0 454.67 204.5 454.80 205.0 454.54 205.5 454.47 206.0 454.50 206.5 454.34 207.0 454.57 207.5 454.46 208.0 454.78 208.5 454.72 209.0 454.80 209.5 454.71 210.0 454.69 210.5 454.82 211.0 454.66 211.5 454.77 212.0 454.70 212.5 454.79 213.0 454.66 213.5 454.81 214.0 454.80 214.5 454.80 215.0 454.81 215.5 454.68 216.0 454.67 216.5 454.64 217.0 454.70 217.5 454.78 218.0 454.69 218.5 454.47 219.0 454.26 219.5 454.50 220.0 454.31 220.5 454.49 221.0 454.42 221.5 454.50 222.0 454.52 222.5 454.68 223.0 454.77 223.5 454.73 224.0 454.68 224.5 454.75 225.0 454.73 225.5 454.67 226.0 454.77 226.5 454.66 227.0 454.82 227.5 454.79 228.0 454.82 228.5 454.81 229.0 454.63 229.5 454.73 230.0 454.73 230.5 454.45 231.0 454.39 231.5 454.64 232.0 454.52 232.5 454.58 233.0 454.74 233.5 454.74 234.0 454.82 234.5 454.63 235.0 454.73 235.5 454.75 236.0 454.74 236.5 454.61 237.0 454.54 237.5 454.63 238.0 454.41 238.5 454.25 239.0 454.43 239.5 454.28 240.0 454.54 240.5 454.55 241.0 454.52 241.5 454.75 242.0 454.53 242.5 454.22 243.0 454.25 243.5 454.19 244.0 453.69 244.5 454.12 245.0 453.73 245.5 453.87 246.0 454.09 246.5 453.66 247.0 454.12 247.5 454.07 248.0 454.12 248.5 454.43 249.0 454.34 249.5 454.81 250.0 454.70 250.5 454.76 251.0 454.71 251.5 454.78 252.0 454.78 252.5 454.68 253.0 454.73 253.5 454.83 254.0 454.75 254.5 454.71 255.0 454.76 255.5 454.70 256.0 454.53 256.5 454.55 257.0 454.43 257.5 454.60 258.0 454.59 258.5 454.63 259.0 454.77 259.5 454.64 260.0 454.74 260.5 454.72 261.0 454.64 261.5 454.72 262.0 454.81 262.5 454.73 263.0 454.79 263.5 454.82 264.0 454.76 264.5 454.63 265.0 454.78 265.5 454.68 266.0 454.66 266.5 454.75 267.0 454.78 267.5 454.65 268.0 454.49 268.5 454.59 269.0 454.24 269.5 454.53 270.0 454.20 270.5 454.18 271.0 454.29 271.5 454.38 272.0 454.56 272.5 454.63 273.0 454.82 273.5 454.82 274.0 454.74 274.5 454.65 275.0 454.82 275.5 454.66 276.0 454.68 276.5 454.77 277.0 454.68 277.5 454.65 278.0 454.80 278.5 454.78 279.0 454.79 279.5 454.76 280.0 454.67 280.5 454.52 281.0 454.60 281.5 454.42 282.0 454.46 282.5 454.66 283.0 454.64 283.5 454.64 284.0 454.70 284.5 454.67 285.0 454.77 285.5 454.78 286.0 454.65 286.5 454.70 287.0 454.50 287.5 454.41 288.0 454.54 288.5 454.25 289.0 454.55 289.5 454.42 290.0 454.29 290.5 454.52 291.0 454.72 291.5 454.68 292.0 454.53 292.5 454.53 293.0 454.10 293.5 453.93 294.0 454.33 294.5 454.27 295.0 454.10 295.5 454.33 296.0 453.91 296.5 454.15 297.0 453.99 297.5 454.11 298.0 453.93 298.5 454.36 299.0 454.49 299.5 454.69 300.0 454.73 300.5 454.75 301.0 454.64 301.5 454.66 302.0 454.81 302.5 454.64 303.0 454.74 303.5 454.71 304.0 454.78 304.5 454.78 305.0 454.62 305.5 454.70 306.0 454.45 306.5 454.61 307.0 454.60 307.5 454.66 308.0 454.58 308.5 454.78 309.0 454.81 309.5 454.78 310.0 454.82 310.5 454.81 311.0 454.76 311.5 454.70 312.0 454.65 312.5 454.78 313.0 454.65 313.5 454.75 314.0 454.63 314.5 454.70 315.0 454.68 315.5 454.64 316.0 454.66 316.5 454.75 317.0 454.69 317.5 454.68 318.0 454.59 318.5 454.42 319.0 454.38 319.5 454.21 320.0 454.19 320.5 454.32 321.0 454.49 321.5 454.24 322.0 454.63 322.5 454.65 323.0 454.70 323.5 454.78 324.0 454.70 324.5 454.68 325.0 454.74 325.5 454.68 326.0 454.71 326.5 454.74 327.0 454.82 327.5 454.66 328.0 454.82 328.5 454.67 329.0 454.74 329.5 454.67 330.0 454.67 330.5 454.51 331.0 454.47 331.5 454.44 332.0 454.36 332.5 454.68 333.0 454.49 333.5 454.80 334.0 454.81 334.5 454.82 335.0 454.83 335.5 454.77 336.0 454.75 336.5 454.63 337.0 454.61 337.5 454.57 338.0 454.46 338.5 454.40 339.0 454.31 339.5 454.31 340.0 454.24 340.5 454.35 341.0 454.53 341.5 454.60 342.0 454.67 342.5 454.50 343.0 454.13 343.5 454.17 344.0 453.72 344.5 454.18 345.0 454.01 345.5 454.06 346.0 454.14 346.5 454.17 347.0 453.90 347.5 453.73 348.0 453.67 348.5 454.31 349.0 454.53 349.5 454.51 350.0 454.67 350.5 454.64 351.0 454.72 351.5 454.75 352.0 454.66 352.5 454.77 353.0 454.82 353.5 454.79 354.0 454.71 354.5 454.68 355.0 454.74 355.5 454.55 356.0 454.48 356.5 454.47 357.0 454.43 357.5 454.46 358.0 454.59 358.5 454.69 359.0 454.78 359.5 454.82 360.0 454.78 360.5 454.82 361.0 454.64 361.5 454.81 362.0 454.64 362.5 454.76 363.0 454.69 363.5 454.81 364.0 454.77 364.5 454.74 365.0 454.82 365.5 454.78 366.0 454.66 366.5 454.76 367.0 454.66 367.5 454.74 368.0 454.66 368.5 454.58 369.0 454.44 369.5 454.41 370.0 454.29 370.5 454.46 371.0 454.23 371.5 454.52 372.0 454.38 372.5 454.75 373.0 454.78 373.5 454.83 374.0 454.80 374.5 454.69 375.0 454.66 375.5 454.70 376.0 454.80 376.5 454.77 377.0 454.81 377.5 454.76 378.0 454.64 378.5 454.75 379.0 454.63 379.5 454.68 380.0 454.71 380.5 454.71 381.0 454.40 381.5 454.56 382.0 454.50 382.5 454.52 383.0 454.72 383.5 454.64 384.0 454.73 384.5 454.73 385.0 454.67 385.5 454.76 386.0 454.80 386.5 454.83 387.0 454.74 387.5 454.71 388.0 454.29 388.5 454.49 389.0 454.56 389.5 454.50 390.0 454.45 390.5 454.58 391.0 454.38 391.5 454.55 392.0 454.67 392.5 454.66 393.0 454.56 393.5 454.13 394.0 454.38 394.5 453.95 395.0 454.01 395.5 453.92 396.0 454.19 396.5 454.24 397.0 454.25 397.5 454.32 398.0 454.26 398.5 454.02 399.0 454.27 399.5 454.54 400.0 454.75 400.5 454.70 401.0 454.67 401.5 454.80 402.0 454.71 402.5 454.83 403.0 454.79 403.5 454.70 404.0 454.78 404.5 454.79 405.0 454.81 405.5 454.60 406.0 454.57 406.5 454.44 407.0 454.62 407.5 454.49 408.0 454.68 408.5 454.69 409.0 454.73 409.5 454.77 410.0 454.71 410.5 454.77 411.0 454.74 411.5 454.70 412.0 454.74 412.5 454.79 413.0 454.64 413.5 454.73 414.0 454.83 414.5 454.80 415.0 454.64 415.5 454.76 416.0 454.70 416.5 454.79 417.0 454.65 417.5 454.78 418.0 454.73 418.5 454.55 419.0 454.47 419.5 454.22 420.0 454.28 420.5 454.33 421.0 454.40 421.5 454.38 422.0 454.42 422.5 454.48 423.0 454.69 423.5 454.79 424.0 454.70 424.5 454.68 425.0 454.73 425.5 454.68 426.0 454.74 426.5 454.74 427.0 454.63 427.5 454.69 428.0 454.82 428.5 454.70 429.0 454.67 429.5 454.80 430.0 454.71 430.5 454.53 431.0 454.47 431.5 454.50 432.0 454.33 432.5 454.54 433.0 454.55 433.5 454.61 434.0 454.69 434.5 454.73 435.0 454.70 435.5 454.82 436.0 454.77 436.5 454.83 437.0 454.64 437.5 454.67 438.0 454.58 438.5 454.35 439.0 454.39 439.5 454.47 440.0 454.57 440.5 454.52 441.0 454.41 441.5 454.65 442.0 454.77 442.5 454.58 443.0 454.35 443.5 454.32 444.0 454.17 444.5 453.77 445.0 453.70 445.5 453.66 446.0 453.69 446.5 454.23 447.0 453.63 447.5 453.79 448.0 454.23 448.5 454.01 449.0 454.02 449.5 454.26 450.0 454.71 450.5 454.75 451.0 454.74 451.5 454.64 452.0 454.77 452.5 454.78 453.0 454.81 453.5 454.63 454.0 454.73 454.5 454.69 455.0 454.76 455.5 454.79 456.0 454.62 456.5 454.45 457.0 454.57 457.5 454.48 458.0 454.43 458.5 454.73 459.0 454.62 459.5 454.77 460.0 454.83 460.5 454.64 461.0 454.82 461.5 454.66 462.0 454.79 462.5 454.82 463.0 454.80 463.5 454.65 464.0 454.73 464.5 454.81 465.0 454.65 465.5 454.65 466.0 454.63 466.5 454.64 467.0 454.64 467.5 454.82 468.0 454.70 468.5 454.59 469.0 454.56 469.5 454.50 470.0 454.32 470.5 454.43 471.0 454.15 471.5 454.23 472.0 454.59 472.5 454.67 473.0 454.63 473.5 454.71 474.0 454.68 474.5 454.79 475.0 454.81 475.5 454.64 476.0 454.76 476.5 454.78 477.0 454.73 477.5 454.65 478.0 454.83 478.5 454.79 479.0 454.76 479.5 454.77 480.0 454.73 480.5 454.63 481.0 454.46 481.5 454.41 482.0 454.44 482.5 454.38 483.0 454.63 483.5 454.71 484.0 454.66 484.5 454.78 485.0 454.83 485.5 454.76 486.0 454.69 486.5 454.69 487.0 454.63 487.5 454.63 488.0 454.60 488.5 454.38 489.0 454.52 489.5 454.46 490.0 454.29 490.5 454.47 491.0 454.29 491.5 454.58 492.0 454.66 492.5 454.77 493.0 454.48 493.5 454.14 494.0 454.00 494.5 454.13 495.0 454.14 495.5 454.00 496.0 454.32 496.5 454.12 497.0 454.11 497.5 454.09 498.0 454.32 498.5 454.21 499.0 454.15 499.5 454.37 500.0 454.72 500.5 454.79 501.0 454.69 501.5 454.83 502.0 454.67 502.5 454.63 503.0 454.68 503.5 454.71 504.0 454.79 504.5 454.71 505.0 454.71 505.5 454.67 506.0 454.64 506.5 454.48 507.0 454.64 507.5 454.53 508.0 454.46 508.5 454.51 509.0 454.71 509.5 454.69 510.0 454.65 510.5 454.72 511.0 454.65 511.5 454.67 512.0 454.64 512.5 454.70 513.0 454.63 513.5 454.75 514.0 454.69 514.5 454.66 515.0 454.79 515.5 454.73 516.0 454.76 516.5 454.76 517.0 454.79 517.5 454.65 518.0 454.78 518.5 454.59 519.0 454.63 519.5 454.25 520.0 454.47 520.5 454.28 521.0 454.53 521.5 454.43 522.0 454.54 522.5 454.46 523.0 454.62 523.5 454.67 524.0 454.70 524.5 454.66 525.0 454.81 525.5 454.66 526.0 454.65 526.5 454.66 527.0 454.76 527.5 454.67 528.0 454.74 528.5 454.76 529.0 454.74 529.5 454.63 530.0 454.80 530.5 454.65 531.0 454.62 531.5 454.60 532.0 454.58 532.5 454.46 533.0 454.38 533.5 454.48 534.0 454.71 534.5 454.77 535.0 454.76 535.5 454.63 536.0 454.80 536.5 454.80 537.0 454.76 537.5 454.65 538.0 454.63 538.5 454.58 539.0 454.40 539.5 454.37 540.0 454.28 540.5 454.24 541.0 454.27 541.5 454.41 542.0 454.56 542.5 454.71 543.0 454.42 543.5 454.11 544.0 454.09 544.5 454.07 545.0 454.01 545.5 454.23 546.0 453.69 546.5 453.81 547.0 453.87 547.5 453.75 548.0 453.93 548.5 453.90 549.0 454.18 549.5 454.30 550.0 454.36 550.5 454.64 551.0 454.82 551.5 454.66 552.0 454.78 552.5 454.78 553.0 454.80 553.5 454.79 554.0 454.70 554.5 454.66 555.0 454.65 555.5 454.68 556.0 454.66 556.5 454.59 557.0 454.50 557.5 454.44 558.0 454.58 558.5 454.48 559.0 454.71 559.5 454.74 560.0 454.64 560.5 454.78 561.0 454.73 561.5 454.75 562.0 454.70 562.5 454.65 563.0 454.75 563.5 454.72 564.0 454.72 564.5 454.79 565.0 454.66 565.5 454.77 566.0 454.70 566.5 454.77 567.0 454.75 567.5 454.65 568.0 454.72 568.5 454.69 569.0 454.66 569.5 454.58 570.0 454.43 570.5 454.35 571.0 454.46 571.5 454.52 572.0 454.24 572.5 454.57 573.0 454.47 573.5 454.69 574.0 454.63 574.5 454.65 575.0 454.81 575.5 454.69 576.0 454.82 576.5 454.64 577.0 454.82 577.5 454.63 578.0 454.68 578.5 454.70 579.0 454.73 579.5 454.80 580.0 454.69 580.5 454.80 581.0 454.60 581.5 454.57 582.0 454.39 582.5 454.40 583.0 454.49 583.5 454.58 584.0 454.66 584.5 454.67 585.0 454.69 585.5 454.76 586.0 454.64 586.5 454.70 587.0 454.74 587.5 454.65 588.0 454.50 588.5 454.39 589.0 454.50 589.5 454.35 590.0 454.23 590.5 454.31 591.0 454.45 591.5 454.49 592.0 454.61 592.5 454.69 593.0 454.56 593.5 454.49 594.0 454.33 594.5 454.19 595.0 454.23 595.5 454.22 596.0 453.94 596.5 454.17 597.0 453.94 597.5 454.26 598.0 454.13 598.5 454.28 599.0 454.37 599.5 454.31 600.0 454.39 600.5 454.64 601.0 454.68 601.5 454.65 602.0 454.69 602.5 454.69 603.0 454.76 603.5 454.76 604.0 454.83 604.5 454.77 605.0 454.65 605.5 454.81 606.0 454.71 606.5 454.60 607.0 454.50 607.5 454.51 608.0 454.33 608.5 454.66 609.0 454.55 609.5 454.65 610.0 454.80 610.5 454.79 611.0 454.68 611.5 454.77 612.0 454.68 612.5 454.74 613.0 454.81 613.5 454.65 614.0 454.78 614.5 454.74 615.0 454.64 615.5 454.66 616.0 454.73 616.5 454.81 617.0 454.66 617.5 454.67 618.0 454.67 618.5 454.68 619.0 454.71 619.5 454.36 620.0 454.55 620.5 454.13 621.0 454.33 621.5 454.28 622.0 454.33 622.5 454.29 623.0 454.49 623.5 454.76 624.0 454.78 624.5 454.64 625.0 454.66 625.5 454.75 626.0 454.80 626.5 454.69 627.0 454.71 627.5 454.70 628.0 454.67 628.5 454.71 629.0 454.78 629.5 454.82 630.0 454.63 630.5 454.72 631.0 454.58 631.5 454.61 632.0 454.35 632.5 454.60 633.0 454.43 633.5 454.48 634.0 454.56 634.5 454.69 635.0 454.65 635.5 454.68 636.0 454.68 636.5 454.72 637.0 454.74 637.5 454.82 638.0 454.71 638.5 454.58 639.0 454.59 639.5 454.55 640.0 454.41 640.5 454.41 641.0 454.55 641.5 454.63 642.0 454.52 642.5 454.77 643.0 454.53 643.5 454.56 644.0 454.02 644.5 453.88 645.0 453.86 645.5 453.94 646.0 453.94 646.5 453.64 647.0 453.92 647.5 453.93 648.0 453.83 648.5 454.11 649.0 453.94 649.5 454.22 650.0 454.37 650.5 454.61 651.0 454.73 651.5 454.71 652.0 454.69 652.5 454.69 653.0 454.70 653.5 454.73 654.0 454.83 654.5 454.74 655.0 454.66 655.5 454.67 656.0 454.77 656.5 454.71 657.0 454.63 657.5 454.60 658.0 454.58 658.5 454.48 659.0 454.72 659.5 454.67 660.0 454.73 660.5 454.66 661.0 454.77 661.5 454.74 662.0 454.70 662.5 454.68 663.0 454.68 663.5 454.77 664.0 454.70 664.5 454.65 665.0 454.72 665.5 454.66 666.0 454.68 666.5 454.73 667.0 454.74 667.5 454.67 668.0 454.83 668.5 454.74 669.0 454.69 669.5 454.62 670.0 454.38 670.5 454.46 671.0 454.28 671.5 454.36 672.0 454.38 672.5 454.20 673.0 454.41 673.5 454.67 674.0 454.66 674.5 454.75 675.0 454.68 675.5 454.78 676.0 454.69 676.5 454.64 677.0 454.73 677.5 454.81 678.0 454.63 678.5 454.80 679.0 454.83 679.5 454.75 680.0 454.66 680.5 454.77 681.0 454.75 681.5 454.68 682.0 454.54 682.5 454.32 683.0 454.60 683.5 454.58 684.0 454.65 684.5 454.58 685.0 454.82 685.5 454.69 686.0 454.78 686.5 454.82 687.0 454.66 687.5 454.74 688.0 454.63 688.5 454.60 689.0 454.52 689.5 454.33 690.0 454.55 690.5 454.23 691.0 454.42 691.5 454.50 692.0 454.42 692.5 454.55 693.0 454.81 693.5 454.59 694.0 454.54 694.5 454.03 695.0 454.34 695.5 454.30 696.0 454.27 696.5 454.37 697.0 453.99 697.5 454.13 698.0 453.98 698.5 453.94 699.0 454.31 699.5 454.44 700.0 454.48 700.5 454.64 701.0 454.73 701.5 454.73 702.0 454.80 702.5 454.72 703.0 454.76 703.5 454.79 704.0 454.78 704.5 454.79 705.0 454.82 705.5 454.72 706.0 454.80 706.5 454.69 707.0 454.59 707.5 454.40 708.0 454.46 708.5 454.49 709.0 454.52 709.5 454.55 710.0 454.70 710.5 454.77 711.0 454.80 711.5 454.73 712.0 454.63 712.5 454.79 713.0 454.70 713.5 454.65 714.0 454.78 714.5 454.79 715.0 454.73 715.5 454.81 716.0 454.71 716.5 454.67 717.0 454.72 717.5 454.77 718.0 454.65 718.5 454.70 719.0 454.82 719.5 454.50 720.0 454.48 720.5 454.52 721.0 454.26 721.5 454.35 722.0 454.20 722.5 454.47 723.0 454.35 723.5 454.59 724.0 454.77 724.5 454.78 725.0 454.75 725.5 454.63 726.0 454.81 726.5 454.76 727.0 454.80 727.5 454.78 728.0 454.79 728.5 454.83 729.0 454.63 729.5 454.78 730.0 454.70 730.5 454.80 731.0 454.68 731.5 454.62 732.0 454.54 732.5 454.34 733.0 454.45 733.5 454.52 734.0 454.55 734.5 454.67 735.0 454.68 735.5 454.76 736.0 454.79 736.5 454.77 737.0 454.82 737.5 454.74 738.0 454.81 738.5 454.52 739.0 454.62 739.5 454.28 740.0 454.55 740.5 454.22 741.0 454.54 741.5 454.27 742.0 454.44 742.5 454.53 743.0 454.68 743.5 454.48 744.0 454.38 744.5 453.86 745.0 453.93 745.5 453.70 746.0 454.15 746.5 454.15 747.0 453.89 747.5 453.84 748.0 453.66 748.5 453.65 749.0 454.02 749.5 453.74 750.0 454.10 750.5 454.52 751.0 454.57 751.5 454.81 752.0 454.72 752.5 454.67 753.0 454.81 753.5 454.68 754.0 454.73 754.5 454.63 755.0 454.78 755.5 454.64 756.0 454.75 756.5 454.63 757.0 454.50 757.5 454.49 758.0 454.39 758.5 454.62 759.0 454.68 759.5 454.71 760.0 454.76 760.5 454.71 761.0 454.72 761.5 454.80 762.0 454.79 762.5 454.83 763.0 454.63 763.5 454.66 764.0 454.79 764.5 454.81 765.0 454.69 765.5 454.79 766.0 454.70 766.5 454.71 767.0 454.83 767.5 454.63 768.0 454.71 768.5 454.65 769.0 454.81 769.5 454.64 770.0 454.59 770.5 454.35 771.0 454.23 771.5 454.16 772.0 454.43 772.5 454.52 773.0 454.26 773.5 454.42 774.0 454.61 774.5 454.64 775.0 454.73 775.5 454.64 776.0 454.71 776.5 454.80 777.0 454.77 777.5 454.75 778.0 454.68 778.5 454.64 779.0 454.78 779.5 454.69 780.0 454.81 780.5 454.71 781.0 454.64 781.5 454.62 782.0 454.47 782.5 454.35 783.0 454.37 783.5 454.61 784.0 454.49 784.5 454.75 785.0 454.67 785.5 454.81 786.0 454.73 786.5 454.65 787.0 454.80 787.5 454.71 788.0 454.63 788.5 454.75 789.0 454.63 789.5 454.56 790.0 454.34 790.5 454.21 791.0 454.29 791.5 454.36 792.0 454.63 792.5 454.53 793.0 454.71 793.5 454.68 794.0 454.39 794.5 454.43 795.0 454.17 795.5 454.34 796.0 454.26 796.5 453.99 797.0 454.08 797.5 454.11 798.0 454.21 798.5 453.93 799.0 454.32 799.5 454.17 800.0 454.26 800.5 454.33 801.0 454.54 801.5 454.82 802.0 454.73 802.5 454.71 803.0 454.80 803.5 454.71 804.0 454.69 804.5 454.81 805.0 454.67 805.5 454.66 806.0 454.69 806.5 454.74 807.0 454.68 807.5 454.52 808.0 454.59 808.5 454.55 809.0 454.62 809.5 454.69 810.0 454.57 810.5 454.68 811.0 454.73 811.5 454.64 812.0 454.63 812.5 454.65 813.0 454.63 813.5 454.71 814.0 454.74 814.5 454.63 815.0 454.81 815.5 454.69 816.0 454.65 816.5 454.81 817.0 454.69 817.5 454.63 818.0 454.66 818.5 454.76 819.0 454.81 819.5 454.69 820.0 454.63 820.5 454.54 821.0 454.43 821.5 454.36 822.0 454.31 822.5 454.20 823.0 454.25 823.5 454.40 824.0 454.63 824.5 454.64 825.0 454.63 825.5 454.76 826.0 454.71 826.5 454.81 827.0 454.79 827.5 454.66 828.0 454.73 828.5 454.64 829.0 454.69 829.5 454.69 830.0 454.80 830.5 454.68 831.0 454.73 831.5 454.59 832.0 454.48 832.5 454.41 833.0 454.46 833.5 454.59 834.0 454.67 834.5 454.63 835.0 454.70 835.5 454.68 836.0 454.70 836.5 454.64 837.0 454.64 837.5 454.80 838.0 454.79 838.5 454.74 839.0 454.48 839.5 454.31 840.0 454.33 840.5 454.19 841.0 454.33 841.5 454.45 842.0 454.44 842.5 454.58 843.0 454.63 843.5 454.79 844.0 454.42 844.5 454.30 845.0 453.97 845.5 453.94 846.0 454.01 846.5 454.22 847.0 454.12 847.5 454.13 848.0 453.67 848.5 453.94 849.0 454.06 849.5 453.79 850.0 454.34 850.5 454.51 851.0 454.68 851.5 454.73 852.0 454.77 852.5 454.63 853.0 454.72 853.5 454.69 854.0 454.81 854.5 454.81 855.0 454.71 855.5 454.82 856.0 454.74 856.5 454.65 857.0 454.78 857.5 454.78 858.0 454.72 858.5 454.72 859.0 454.67 859.5 454.67 860.0 454.83 860.5 454.65 861.0 454.78 861.5 454.77 862.0 454.77 862.5 454.63 863.0 454.81 863.5 454.63 864.0 454.43 864.5 454.14 865.0 454.42 865.5 454.45 866.0 454.22 866.5 454.52 867.0 454.47 867.5 454.81 868.0 454.68 868.5 454.70 869.0 454.83 869.5 454.71 870.0 454.37 870.5 454.38 871.0 454.26 871.5 454.37 872.0 454.37 872.5 454.30 873.0 454.66 873.5 454.63 874.0 454.81 874.5 454.76 875.0 454.63 875.5 454.72 876.0 454.42 876.5 454.41 877.0 454.45 877.5 454.19 878.0 454.24 878.5 454.26 879.0 454.33 879.5 454.62 880.0 454.64 880.5 454.63 881.0 454.65 881.5 454.57 882.0 454.56 882.5 454.49 883.0 454.42 883.5 454.26 884.0 454.07 884.5 454.50 885.0 454.64 885.5 454.59 886.0 454.78 886.5 454.81 887.0 454.68 887.5 454.57 888.0 454.38 888.5 454.39 889.0 454.30 889.5 454.19 890.0 454.25 890.5 454.40 891.0 454.46 891.5 454.71 892.0 454.67 892.5 454.71 893.0 454.70 893.5 454.75 894.0 454.40 894.5 454.14 895.0 454.31 895.5 454.39 896.0 454.33 896.5 454.34 897.0 454.62 897.5 454.68 898.0 454.67 898.5 454.69 899.0 454.71 899.5 454.72 900.0 454.48 900.5 454.51 901.0 454.32 901.5 454.07 902.0 454.11 902.5 454.37 903.0 454.67 903.5 454.59 904.0 454.71 904.5 454.64 905.0 454.74 905.5 454.55 906.0 454.52 906.5 454.43 907.0 454.23 907.5 454.49 908.0 454.08 908.5 454.32 909.0 454.64 909.5 454.56 910.0 454.74 910.5 454.81 911.0 454.71 911.5 454.71 912.0 454.33 912.5 454.39 913.0 454.40 913.5 454.26 914.0 454.26 914.5 454.27 915.0 454.63 915.5 454.63 916.0 454.65 916.5 454.79 917.0 454.82 917.5 454.70 918.0 454.32 918.5 454.45 919.0 454.46 919.5 454.13 920.0 454.18 920.5 454.44 921.0 454.47 921.5 454.63 922.0 454.74 922.5 454.65 923.0 454.81 923.5 454.78 924.0 454.80 924.5 454.74 925.0 454.69 925.5 454.64 926.0 454.78 926.5 454.68 927.0 454.83 927.5 454.80 928.0 454.64 928.5 454.72 929.0 454.82 929.5 454.70 930.0 454.79 930.5 454.67 931.0 454.82 931.5 454.77 932.0 454.72 932.5 454.72 933.0 454.72 933.5 454.73 934.0 454.79 934.5 454.74 935.0 454.76 935.5 454.64 936.0 454.74 936.5 454.83 937.0 454.76 937.5 454.68 938.0 454.82 938.5 454.63 939.0 454.64 939.5 454.69 940.0 454.67 940.5 454.69 941.0 454.78 941.5 454.71 942.0 454.70 942.5 454.58 943.0 454.39 943.5 453.98 944.0 454.26 944.5 453.88 945.0 454.04 945.5 454.27 946.0 454.29 946.5 454.64 947.0 454.73 947.5 454.64 947.5 455.55 947.0 455.66 946.5 455.69 946.0 456.02 945.5 456.54 945.0 456.05 944.5 456.07 944.0 456.14 943.5 456.27 943.0 455.97 942.5 455.94 942.0 455.54 941.5 455.57 941.0 455.65 940.5 455.61 940.0 455.60 939.5 455.60 939.0 455.57 938.5 455.56 938.0 455.60 937.5 455.52 937.0 455.57 936.5 455.61 936.0 455.67 935.5 455.50 935.0 455.60 934.5 455.56 934.0 455.55 933.5 455.67 933.0 455.52 932.5 455.56 932.0 455.54 931.5 455.50 931.0 455.64 930.5 455.52 930.0 455.48 929.5 455.52 929.0 455.64 928.5 455.48 928.0 455.55 927.5 455.65 927.0 455.66 926.5 455.49 926.0 455.63 925.5 455.62 925.0 455.64 924.5 455.62 924.0 455.48 923.5 455.56 923.0 455.61 922.5 455.62 922.0 455.47 921.5 455.61 921.0 455.76 920.5 455.84 920.0 456.23 919.5 455.86 919.0 455.85 918.5 456.16 918.0 456.05 917.5 455.82 917.0 455.64 916.5 455.51 916.0 455.62 915.5 455.49 915.0 455.85 914.5 455.85 914.0 456.07 913.5 456.20 913.0 456.24 912.5 456.20 912.0 455.90 911.5 455.82 911.0 455.60 910.5 455.47 910.0 455.65 909.5 455.56 909.0 455.72 908.5 455.88 908.0 455.81 907.5 456.02 907.0 456.17 906.5 456.04 906.0 455.82 905.5 455.78 905.0 455.51 904.5 455.56 904.0 455.49 903.5 455.59 903.0 455.85 902.5 455.98 902.0 456.23 901.5 456.17 901.0 456.14 900.5 455.87 900.0 455.73 899.5 455.63 899.0 455.61 898.5 455.49 898.0 455.63 897.5 455.68 897.0 455.81 896.5 455.94 896.0 455.81 895.5 455.85 895.0 456.22 894.5 456.04 894.0 455.85 893.5 455.70 893.0 455.47 892.5 455.62 892.0 455.48 891.5 455.56 891.0 455.82 890.5 455.90 890.0 455.90 889.5 455.82 889.0 455.82 888.5 456.09 888.0 455.82 887.5 455.57 887.0 455.58 886.5 455.65 886.0 455.60 885.5 455.54 885.0 455.78 884.5 456.08 884.0 455.99 883.5 456.18 883.0 456.16 882.5 455.80 882.0 455.70 881.5 455.62 881.0 455.60 880.5 455.50 880.0 455.48 879.5 455.81 879.0 455.92 878.5 456.07 878.0 456.20 877.5 456.01 877.0 456.08 876.5 455.91 876.0 455.73 875.5 455.71 875.0 455.60 874.5 455.61 874.0 455.54 873.5 455.54 873.0 455.81 872.5 456.10 872.0 455.97 871.5 456.21 871.0 455.89 870.5 455.76 870.0 455.91 869.5 455.64 869.0 455.50 868.5 455.62 868.0 455.48 867.5 455.50 867.0 455.71 866.5 456.00 866.0 456.12 865.5 456.02 865.0 455.88 864.5 456.11 864.0 455.75 863.5 455.74 863.0 455.53 862.5 455.47 862.0 455.50 861.5 455.60 861.0 455.57 860.5 455.60 860.0 455.56 859.5 455.50 859.0 455.51 858.5 455.52 858.0 455.51 857.5 455.59 857.0 455.64 856.5 455.64 856.0 455.65 855.5 455.54 855.0 455.51 854.5 455.55 854.0 455.50 853.5 455.51 853.0 455.66 852.5 455.62 852.0 455.66 851.5 455.54 851.0 455.75 850.5 456.08 850.0 455.95 849.5 456.33 849.0 456.59 848.5 456.41 848.0 456.42 847.5 456.13 847.0 456.18 846.5 456.15 846.0 456.38 845.5 456.66 845.0 456.32 844.5 455.87 844.0 455.90 843.5 455.57 843.0 455.60 842.5 455.61 842.0 455.84 841.5 455.93 841.0 455.74 840.5 455.85 840.0 455.79 839.5 455.92 839.0 455.85 838.5 455.54 838.0 455.61 837.5 455.67 837.0 455.58 836.5 455.50 836.0 455.51 835.5 455.54 835.0 455.71 834.5 455.73 834.0 455.91 833.5 455.66 833.0 455.85 832.5 455.85 832.0 455.62 831.5 455.64 831.0 455.60 830.5 455.65 830.0 455.54 829.5 455.54 829.0 455.55 828.5 455.59 828.0 455.50 827.5 455.57 827.0 455.57 826.5 455.65 826.0 455.51 825.5 455.62 825.0 455.51 824.5 455.52 824.0 455.60 823.5 455.73 823.0 456.00 822.5 456.14 822.0 456.16 821.5 456.02 821.0 456.16 820.5 455.78 820.0 455.71 819.5 455.54 819.0 455.47 818.5 455.52 818.0 455.59 817.5 455.52 817.0 455.65 816.5 455.53 816.0 455.62 815.5 455.50 815.0 455.58 814.5 455.66 814.0 455.67 813.5 455.58 813.0 455.60 812.5 455.49 812.0 455.63 811.5 455.51 811.0 455.52 810.5 455.55 810.0 455.58 809.5 455.57 809.0 455.66 808.5 455.67 808.0 455.86 807.5 455.87 807.0 455.72 806.5 455.51 806.0 455.60 805.5 455.47 805.0 455.48 804.5 455.63 804.0 455.57 803.5 455.59 803.0 455.54 802.5 455.67 802.0 455.63 801.5 455.53 801.0 455.60 800.5 455.71 800.0 456.04 799.5 456.23 799.0 456.36 798.5 455.98 798.0 456.40 797.5 456.05 797.0 456.14 796.5 456.11 796.0 456.31 795.5 456.01 795.0 456.19 794.5 456.02 794.0 455.92 793.5 455.70 793.0 455.68 792.5 455.69 792.0 455.73 791.5 455.93 791.0 455.97 790.5 456.06 790.0 455.97 789.5 456.01 789.0 455.85 788.5 455.64 788.0 455.65 787.5 455.66 787.0 455.60 786.5 455.62 786.0 455.51 785.5 455.57 785.0 455.58 784.5 455.76 784.0 455.90 783.5 455.68 783.0 455.98 782.5 455.75 782.0 455.85 781.5 455.53 781.0 455.55 780.5 455.53 780.0 455.53 779.5 455.63 779.0 455.59 778.5 455.65 778.0 455.61 777.5 455.55 777.0 455.47 776.5 455.54 776.0 455.59 775.5 455.48 775.0 455.47 774.5 455.56 774.0 455.68 773.5 455.73 773.0 455.90 772.5 456.09 772.0 455.95 771.5 456.11 771.0 455.78 770.5 455.89 770.0 455.94 769.5 455.69 769.0 455.57 768.5 455.51 768.0 455.53 767.5 455.55 767.0 455.62 766.5 455.62 766.0 455.53 765.5 455.50 765.0 455.61 764.5 455.60 764.0 455.65 763.5 455.59 763.0 455.47 762.5 455.67 762.0 455.49 761.5 455.51 761.0 455.67 760.5 455.51 760.0 455.59 759.5 455.66 759.0 455.87 758.5 455.86 758.0 455.69 757.5 455.72 757.0 455.73 756.5 455.65 756.0 455.62 755.5 455.61 755.0 455.63 754.5 455.48 754.0 455.47 753.5 455.60 753.0 455.54 752.5 455.56 752.0 455.55 751.5 455.65 751.0 455.51 750.5 455.89 750.0 456.22 749.5 456.29 749.0 456.53 748.5 456.26 748.0 456.25 747.5 456.57 747.0 456.37 746.5 456.27 746.0 456.44 745.5 456.37 745.0 456.61 744.5 456.34 744.0 456.16 743.5 455.75 743.0 455.66 742.5 455.60 742.0 455.87 741.5 455.89 741.0 456.06 740.5 455.84 740.0 455.85 739.5 456.02 739.0 455.77 738.5 455.64 738.0 455.60 737.5 455.62 737.0 455.66 736.5 455.62 736.0 455.65 735.5 455.52 735.0 455.50 734.5 455.62 734.0 455.79 733.5 455.90 733.0 455.81 732.5 455.96 732.0 455.61 731.5 455.58 731.0 455.54 730.5 455.56 730.0 455.53 729.5 455.47 729.0 455.56 728.5 455.49 728.0 455.47 727.5 455.62 727.0 455.66 726.5 455.47 726.0 455.47 725.5 455.50 725.0 455.50 724.5 455.63 724.0 455.64 723.5 455.69 723.0 455.73 722.5 456.06 722.0 455.86 721.5 456.01 721.0 456.10 720.5 456.14 720.0 455.99 719.5 455.82 719.0 455.59 718.5 455.58 718.0 455.52 717.5 455.54 717.0 455.63 716.5 455.64 716.0 455.66 715.5 455.50 715.0 455.51 714.5 455.61 714.0 455.58 713.5 455.53 713.0 455.60 712.5 455.64 712.0 455.60 711.5 455.50 711.0 455.66 710.5 455.58 710.0 455.63 709.5 455.73 709.0 455.83 708.5 455.67 708.0 455.76 707.5 455.95 707.0 455.84 706.5 455.59 706.0 455.66 705.5 455.51 705.0 455.53 704.5 455.53 704.0 455.63 703.5 455.57 703.0 455.59 702.5 455.61 702.0 455.58 701.5 455.56 701.0 455.52 700.5 455.79 700.0 456.04 699.5 456.18 699.0 456.28 698.5 456.19 698.0 456.38 697.5 455.98 697.0 455.95 696.5 456.15 696.0 456.02 695.5 456.07 695.0 456.42 694.5 455.91 694.0 456.07 693.5 455.62 693.0 455.55 692.5 455.62 692.0 455.81 691.5 455.90 691.0 455.78 690.5 455.92 690.0 455.86 689.5 456.01 689.0 455.70 688.5 455.81 688.0 455.60 687.5 455.50 687.0 455.55 686.5 455.55 686.0 455.55 685.5 455.58 685.0 455.54 684.5 455.64 684.0 455.81 683.5 455.80 683.0 455.96 682.5 455.69 682.0 455.78 681.5 455.64 681.0 455.50 680.5 455.52 680.0 455.47 679.5 455.64 679.0 455.62 678.5 455.49 678.0 455.53 677.5 455.59 677.0 455.65 676.5 455.59 676.0 455.60 675.5 455.52 675.0 455.53 674.5 455.50 674.0 455.62 673.5 455.65 673.0 455.89 672.5 455.97 672.0 456.00 671.5 455.84 671.0 456.08 670.5 455.92 670.0 456.05 669.5 455.84 669.0 455.59 668.5 455.48 668.0 455.47 667.5 455.66 667.0 455.51 666.5 455.59 666.0 455.64 665.5 455.56 665.0 455.51 664.5 455.56 664.0 455.51 663.5 455.62 663.0 455.61 662.5 455.64 662.0 455.57 661.5 455.47 661.0 455.47 660.5 455.65 660.0 455.63 659.5 455.63 659.0 455.73 658.5 455.85 658.0 455.73 657.5 455.96 657.0 455.71 656.5 455.77 656.0 455.52 655.5 455.67 655.0 455.64 654.5 455.63 654.0 455.49 653.5 455.57 653.0 455.51 652.5 455.54 652.0 455.55 651.5 455.52 651.0 455.55 650.5 455.76 650.0 455.87 649.5 456.38 649.0 456.08 648.5 456.30 648.0 456.23 647.5 456.18 647.0 456.56 646.5 456.49 646.0 456.44 645.5 456.26 645.0 456.19 644.5 456.58 644.0 456.03 643.5 455.79 643.0 455.61 642.5 455.58 642.0 455.82 641.5 455.77 641.0 455.94 640.5 455.92 640.0 455.77 639.5 456.07 639.0 456.06 638.5 455.65 638.0 455.57 637.5 455.56 637.0 455.53 636.5 455.54 636.0 455.49 635.5 455.53 635.0 455.67 634.5 455.50 634.0 455.69 633.5 455.69 633.0 455.77 632.5 455.93 632.0 455.94 631.5 455.68 631.0 455.66 630.5 455.61 630.0 455.61 629.5 455.48 629.0 455.55 628.5 455.47 628.0 455.58 627.5 455.63 627.0 455.50 626.5 455.54 626.0 455.60 625.5 455.47 625.0 455.64 624.5 455.51 624.0 455.51 623.5 455.61 623.0 455.81 622.5 455.98 622.0 456.14 621.5 456.02 621.0 455.95 620.5 456.02 620.0 455.99 619.5 455.81 619.0 455.62 618.5 455.58 618.0 455.59 617.5 455.67 617.0 455.59 616.5 455.51 616.0 455.67 615.5 455.57 615.0 455.58 614.5 455.50 614.0 455.51 613.5 455.67 613.0 455.66 612.5 455.67 612.0 455.53 611.5 455.55 611.0 455.64 610.5 455.49 610.0 455.64 609.5 455.65 609.0 455.68 608.5 455.67 608.0 455.90 607.5 455.67 607.0 455.75 606.5 455.75 606.0 455.68 605.5 455.47 605.0 455.50 604.5 455.56 604.0 455.52 603.5 455.67 603.0 455.50 602.5 455.62 602.0 455.62 601.5 455.55 601.0 455.54 600.5 455.56 600.0 455.93 599.5 455.87 599.0 455.94 598.5 456.12 598.0 455.98 597.5 456.07 597.0 456.35 596.5 456.04 596.0 456.42 595.5 455.98 595.0 456.00 594.5 456.34 594.0 456.15 593.5 455.92 593.0 455.72 592.5 455.52 592.0 455.81 591.5 455.73 591.0 455.93 590.5 456.11 590.0 455.92 589.5 455.81 589.0 456.04 588.5 455.77 588.0 455.62 587.5 455.60 587.0 455.58 586.5 455.54 586.0 455.48 585.5 455.65 585.0 455.64 584.5 455.49 584.0 455.77 583.5 455.68 583.0 455.78 582.5 455.80 582.0 455.91 581.5 455.66 581.0 455.64 580.5 455.49 580.0 455.66 579.5 455.66 579.0 455.48 578.5 455.66 578.0 455.56 577.5 455.63 577.0 455.61 576.5 455.60 576.0 455.67 575.5 455.50 575.0 455.56 574.5 455.60 574.0 455.59 573.5 455.55 573.0 455.62 572.5 455.93 572.0 455.91 571.5 455.82 571.0 456.16 570.5 455.86 570.0 455.97 569.5 455.90 569.0 455.83 568.5 455.52 568.0 455.58 567.5 455.54 567.0 455.60 566.5 455.56 566.0 455.58 565.5 455.52 565.0 455.60 564.5 455.56 564.0 455.57 563.5 455.50 563.0 455.58 562.5 455.59 562.0 455.65 561.5 455.48 561.0 455.50 560.5 455.54 560.0 455.59 559.5 455.55 559.0 455.62 558.5 455.66 558.0 455.84 557.5 455.68 557.0 455.92 556.5 455.86 556.0 455.63 555.5 455.52 555.0 455.62 554.5 455.60 554.0 455.49 553.5 455.50 553.0 455.62 552.5 455.49 552.0 455.49 551.5 455.58 551.0 455.54 550.5 455.47 550.0 455.94 549.5 456.20 549.0 456.32 548.5 456.43 548.0 456.64 547.5 456.35 547.0 456.67 546.5 456.48 546.0 456.65 545.5 456.35 545.0 456.42 544.5 456.32 544.0 455.99 543.5 456.11 543.0 455.76 542.5 455.53 542.0 455.64 541.5 455.75 541.0 455.78 540.5 456.09 540.0 455.83 539.5 455.83 539.0 455.76 538.5 455.71 538.0 455.66 537.5 455.62 537.0 455.50 536.5 455.52 536.0 455.56 535.5 455.61 535.0 455.64 534.5 455.67 534.0 455.53 533.5 455.64 533.0 455.68 532.5 455.80 532.0 455.73 531.5 455.80 531.0 455.73 530.5 455.57 530.0 455.51 529.5 455.67 529.0 455.51 528.5 455.66 528.0 455.52 527.5 455.61 527.0 455.49 526.5 455.61 526.0 455.59 525.5 455.47 525.0 455.65 524.5 455.49 524.0 455.58 523.5 455.59 523.0 455.66 522.5 455.73 522.0 455.95 521.5 455.97 521.0 455.92 520.5 455.78 520.0 455.85 519.5 455.92 519.0 455.78 518.5 455.64 518.0 455.62 517.5 455.61 517.0 455.66 516.5 455.67 516.0 455.52 515.5 455.62 515.0 455.66 514.5 455.50 514.0 455.48 513.5 455.49 513.0 455.54 512.5 455.60 512.0 455.53 511.5 455.58 511.0 455.51 510.5 455.65 510.0 455.47 509.5 455.55 509.0 455.68 508.5 455.66 508.0 455.79 507.5 455.88 507.0 455.71 506.5 455.73 506.0 455.62 505.5 455.63 505.0 455.57 504.5 455.66 504.0 455.58 503.5 455.53 503.0 455.56 502.5 455.51 502.0 455.59 501.5 455.59 501.0 455.52 500.5 455.61 500.0 455.75 499.5 455.80 499.0 456.12 498.5 455.98 498.0 456.29 497.5 455.97 497.0 456.22 496.5 456.30 496.0 456.40 495.5 456.21 495.0 456.10 494.5 456.13 494.0 456.37 493.5 456.01 493.0 455.83 492.5 455.54 492.0 455.55 491.5 455.74 491.0 455.90 490.5 455.85 490.0 455.85 489.5 455.97 489.0 456.05 488.5 455.96 488.0 455.89 487.5 455.69 487.0 455.50 486.5 455.51 486.0 455.66 485.5 455.56 485.0 455.61 484.5 455.47 484.0 455.56 483.5 455.55 483.0 455.74 482.5 455.89 482.0 455.85 481.5 455.93 481.0 455.69 480.5 455.62 480.0 455.57 479.5 455.59 479.0 455.53 478.5 455.60 478.0 455.56 477.5 455.66 477.0 455.50 476.5 455.63 476.0 455.55 475.5 455.66 475.0 455.47 474.5 455.51 474.0 455.55 473.5 455.56 473.0 455.67 472.5 455.66 472.0 456.02 471.5 456.15 471.0 456.01 470.5 455.93 470.0 455.92 469.5 455.82 469.0 455.74 468.5 455.54 468.0 455.66 467.5 455.52 467.0 455.62 466.5 455.64 466.0 455.53 465.5 455.53 465.0 455.57 464.5 455.66 464.0 455.63 463.5 455.65 463.0 455.56 462.5 455.57 462.0 455.51 461.5 455.59 461.0 455.55 460.5 455.60 460.0 455.65 459.5 455.61 459.0 455.61 458.5 455.57 458.0 455.76 457.5 455.72 457.0 455.76 456.5 455.74 456.0 455.57 455.5 455.54 455.0 455.50 454.5 455.57 454.0 455.61 453.5 455.60 453.0 455.51 452.5 455.55 452.0 455.63 451.5 455.56 451.0 455.53 450.5 455.57 450.0 455.54 449.5 455.88 449.0 455.92 448.5 456.54 448.0 456.25 447.5 456.56 447.0 456.50 446.5 456.22 446.0 456.32 445.5 456.09 445.0 456.26 444.5 456.40 444.0 456.33 443.5 456.31 443.0 455.85 442.5 455.61 442.0 455.60 441.5 455.62 441.0 455.95 440.5 455.85 440.0 455.77 439.5 455.87 439.0 455.85 438.5 456.07 438.0 455.86 437.5 455.77 437.0 455.52 436.5 455.50 436.0 455.57 435.5 455.67 435.0 455.58 434.5 455.57 434.0 455.67 433.5 455.75 433.0 455.79 432.5 455.91 432.0 455.91 431.5 455.96 431.0 455.61 430.5 455.73 430.0 455.61 429.5 455.57 429.0 455.65 428.5 455.58 428.0 455.63 427.5 455.67 427.0 455.53 426.5 455.58 426.0 455.66 425.5 455.63 425.0 455.57 424.5 455.51 424.0 455.48 423.5 455.59 423.0 455.61 422.5 455.76 422.0 455.90 421.5 456.02 421.0 456.05 420.5 456.04 420.0 455.78 419.5 456.16 419.0 455.85 418.5 455.76 418.0 455.50 417.5 455.57 417.0 455.56 416.5 455.52 416.0 455.47 415.5 455.61 415.0 455.48 414.5 455.55 414.0 455.52 413.5 455.53 413.0 455.47 412.5 455.49 412.0 455.58 411.5 455.49 411.0 455.59 410.5 455.52 410.0 455.60 409.5 455.58 409.0 455.64 408.5 455.65 408.0 455.81 407.5 455.84 407.0 455.72 406.5 455.88 406.0 455.85 405.5 455.71 405.0 455.59 404.5 455.66 404.0 455.62 403.5 455.59 403.0 455.51 402.5 455.53 402.0 455.51 401.5 455.47 401.0 455.53 400.5 455.64 400.0 455.53 399.5 455.68 399.0 456.00 398.5 456.06 398.0 456.10 397.5 455.96 397.0 456.15 396.5 455.93 396.0 456.21 395.5 456.20 395.0 456.29 394.5 456.35 394.0 456.07 393.5 456.07 393.0 455.78 392.5 455.67 392.0 455.52 391.5 455.73 391.0 455.84 390.5 455.74 390.0 455.82 389.5 456.11 389.0 455.77 388.5 455.90 388.0 455.94 387.5 455.64 387.0 455.61 386.5 455.57 386.0 455.66 385.5 455.59 385.0 455.53 384.5 455.65 384.0 455.59 383.5 455.57 383.0 455.80 382.5 455.72 382.0 455.86 381.5 455.86 381.0 455.73 380.5 455.66 380.0 455.55 379.5 455.62 379.0 455.49 378.5 455.64 378.0 455.66 377.5 455.63 377.0 455.65 376.5 455.60 376.0 455.56 375.5 455.64 375.0 455.64 374.5 455.57 374.0 455.53 373.5 455.56 373.0 455.60 372.5 455.69 372.0 455.65 371.5 456.03 371.0 455.78 370.5 455.95 370.0 456.01 369.5 455.91 369.0 456.02 368.5 455.64 368.0 455.59 367.5 455.60 367.0 455.58 366.5 455.57 366.0 455.57 365.5 455.52 365.0 455.51 364.5 455.65 364.0 455.61 363.5 455.65 363.0 455.56 362.5 455.51 362.0 455.48 361.5 455.54 361.0 455.53 360.5 455.53 360.0 455.53 359.5 455.61 359.0 455.56 358.5 455.54 358.0 455.70 357.5 455.65 357.0 455.96 356.5 455.68 356.0 455.65 355.5 455.63 355.0 455.68 354.5 455.55 354.0 455.48 353.5 455.60 353.0 455.58 352.5 455.64 352.0 455.51 351.5 455.56 351.0 455.50 350.5 455.59 350.0 455.56 349.5 455.71 349.0 455.98 348.5 455.92 348.0 456.11 347.5 456.26 347.0 456.65 346.5 456.07 346.0 456.32 345.5 456.07 345.0 456.15 344.5 456.43 344.0 456.29 343.5 456.33 343.0 456.21 342.5 455.77 342.0 455.57 341.5 455.66 341.0 455.77 340.5 455.82 340.0 456.08 339.5 456.02 339.0 456.06 338.5 456.02 338.0 455.71 337.5 455.75 337.0 455.57 336.5 455.65 336.0 455.50 335.5 455.62 335.0 455.56 334.5 455.51 334.0 455.54 333.5 455.56 333.0 455.60 332.5 455.89 332.0 455.86 331.5 455.89 331.0 455.90 330.5 455.78 330.0 455.51 329.5 455.57 329.0 455.56 328.5 455.49 328.0 455.47 327.5 455.50 327.0 455.52 326.5 455.61 326.0 455.62 325.5 455.54 325.0 455.53 324.5 455.57 324.0 455.59 323.5 455.47 323.0 455.51 322.5 455.59 322.0 455.85 321.5 456.01 321.0 455.85 320.5 455.96 320.0 455.78 319.5 456.08 319.0 455.73 318.5 455.68 318.0 455.68 317.5 455.57 317.0 455.54 316.5 455.64 316.0 455.60 315.5 455.53 315.0 455.47 314.5 455.62 314.0 455.49 313.5 455.55 313.0 455.49 312.5 455.54 312.0 455.66 311.5 455.57 311.0 455.59 310.5 455.63 310.0 455.62 309.5 455.54 309.0 455.59 308.5 455.64 308.0 455.78 307.5 455.75 307.0 455.71 306.5 455.99 306.0 455.86 305.5 455.62 305.0 455.65 304.5 455.56 304.0 455.62 303.5 455.57 303.0 455.66 302.5 455.56 302.0 455.48 301.5 455.58 301.0 455.53 300.5 455.60 300.0 455.66 299.5 455.56 299.0 455.95 298.5 455.87 298.0 456.15 297.5 455.96 297.0 455.97 296.5 455.97 296.0 456.40 295.5 456.18 295.0 456.06 294.5 455.93 294.0 456.13 293.5 456.17 293.0 456.13 292.5 455.73 292.0 455.56 291.5 455.56 291.0 455.57 290.5 455.75 290.0 455.83 289.5 455.97 289.0 456.10 288.5 455.95 288.0 455.97 287.5 455.75 287.0 455.58 286.5 455.60 286.0 455.52 285.5 455.54 285.0 455.49 284.5 455.64 284.0 455.55 283.5 455.59 283.0 455.67 282.5 455.67 282.0 455.96 281.5 455.80 281.0 455.81 280.5 455.64 280.0 455.68 279.5 455.48 279.0 455.48 278.5 455.66 278.0 455.51 277.5 455.56 277.0 455.57 276.5 455.47 276.0 455.52 275.5 455.49 275.0 455.60 274.5 455.62 274.0 455.60 273.5 455.48 273.0 455.61 272.5 455.49 272.0 455.63 271.5 455.88 271.0 455.81 270.5 455.78 270.0 455.97 269.5 455.78 269.0 455.99 268.5 455.68 268.0 455.61 267.5 455.56 267.0 455.52 266.5 455.60 266.0 455.60 265.5 455.52 265.0 455.63 264.5 455.52 264.0 455.50 263.5 455.48 263.0 455.56 262.5 455.58 262.0 455.54 261.5 455.64 261.0 455.53 260.5 455.55 260.0 455.62 259.5 455.48 259.0 455.50 258.5 455.68 258.0 455.77 257.5 455.75 257.0 455.96 256.5 455.80 256.0 455.66 255.5 455.70 255.0 455.65 254.5 455.63 254.0 455.57 253.5 455.63 253.0 455.61 252.5 455.49 252.0 455.58 251.5 455.58 251.0 455.67 250.5 455.57 250.0 455.54 249.5 455.50 249.0 455.87 248.5 456.03 248.0 456.40 247.5 456.52 247.0 456.33 246.5 456.08 246.0 456.63 245.5 456.15 245.0 456.65 244.5 456.08 244.0 456.61 243.5 456.30 243.0 456.20 242.5 455.84 242.0 455.72 241.5 455.52 241.0 455.58 240.5 455.92 240.0 455.99 239.5 456.07 239.0 456.11 238.5 456.08 238.0 456.06 237.5 455.93 237.0 455.59 236.5 455.64 236.0 455.59 235.5 455.63 235.0 455.48 234.5 455.61 234.0 455.52 233.5 455.56 233.0 455.74 232.5 455.59 232.0 455.76 231.5 455.74 231.0 455.77 230.5 455.61 230.0 455.64 229.5 455.69 229.0 455.58 228.5 455.57 228.0 455.52 227.5 455.60 227.0 455.55 226.5 455.57 226.0 455.54 225.5 455.59 225.0 455.61 224.5 455.53 224.0 455.66 223.5 455.54 223.0 455.49 222.5 455.62 222.0 455.56 221.5 455.95 221.0 456.00 220.5 456.01 220.0 455.92 219.5 455.93 219.0 456.07 218.5 455.86 218.0 455.65 217.5 455.52 217.0 455.67 216.5 455.67 216.0 455.61 215.5 455.64 215.0 455.62 214.5 455.59 214.0 455.48 213.5 455.51 213.0 455.57 212.5 455.61 212.0 455.66 211.5 455.64 211.0 455.67 210.5 455.57 210.0 455.62 209.5 455.60 209.0 455.50 208.5 455.59 208.0 455.54 207.5 455.63 207.0 455.83 206.5 455.75 206.0 455.83 205.5 455.73 205.0 455.78 204.5 455.61 204.0 455.51 203.5 455.60 203.0 455.65 202.5 455.52 202.0 455.51 201.5 455.54 201.0 455.58 200.5 455.49 200.0 455.59 199.5 455.65 199.0 455.60 198.5 455.68 198.0 456.04 197.5 456.04 197.0 456.18 196.5 456.23 196.0 456.34 195.5 456.37 195.0 456.26 194.5 455.95 194.0 456.06 193.5 456.07 193.0 456.24 192.5 455.89 192.0 455.65 191.5 455.62 191.0 455.64 190.5 455.82 190.0 455.91 189.5 456.08 189.0 456.11 188.5 456.00 188.0 455.87 187.5 455.70 187.0 455.72 186.5 455.66 186.0 455.47 185.5 455.63 185.0 455.65 184.5 455.53 184.0 455.51 183.5 455.62 183.0 455.53 182.5 455.68 182.0 455.66 181.5 455.86 181.0 455.93 180.5 455.71 180.0 455.63 179.5 455.59 179.0 455.51 178.5 455.51 178.0 455.65 177.5 455.59 177.0 455.67 176.5 455.55 176.0 455.49 175.5 455.67 175.0 455.66 174.5 455.56 174.0 455.56 173.5 455.53 173.0 455.63 172.5 455.56 172.0 455.55 171.5 455.63 171.0 456.01 170.5 455.77 170.0 455.91 169.5 455.86 169.0 456.15 168.5 455.86 168.0 455.64 167.5 455.66 167.0 455.48 166.5 455.61 166.0 455.50 165.5 455.49 165.0 455.64 164.5 455.61 164.0 455.67 163.5 455.64 163.0 455.59 162.5 455.60 162.0 455.58 161.5 455.53 161.0 455.49 160.5 455.53 160.0 455.48 159.5 455.48 159.0 455.59 158.5 455.48 158.0 455.51 157.5 455.64 157.0 455.85 156.5 455.76 156.0 455.73 155.5 455.77 155.0 455.82 154.5 455.65 154.0 455.58 153.5 455.58 153.0 455.51 152.5 455.59 152.0 455.58 151.5 455.53 151.0 455.58 150.5 455.57 150.0 455.67 149.5 455.48 149.0 455.64 148.5 455.72 148.0 455.89 147.5 456.06 147.0 456.36 146.5 456.11 146.0 456.28 145.5 456.67 145.0 456.09 144.5 456.54 144.0 456.07 143.5 456.33 143.0 456.64 142.5 456.02 142.0 456.01 141.5 455.64 141.0 455.53 140.5 455.67 140.0 455.48 139.5 455.47 139.0 455.50 138.5 455.61 138.0 455.61 137.5 455.66 137.0 455.61 136.5 455.66 136.0 455.66 135.5 455.57 135.0 455.53 134.5 455.52 134.0 455.50 133.5 455.55 133.0 455.50 132.5 455.49 132.0 455.56 131.5 455.65 131.0 455.47 130.5 455.60 130.0 455.53 129.5 455.56 129.0 455.69 128.5 455.78 128.0 455.81 127.5 455.82 127.0 455.92 126.5 455.74 126.0 455.82 125.5 455.81 125.0 455.82 124.5 455.74 124.0 455.93 123.5 455.73 123.0 455.94 122.5 455.74 122.0 455.95 121.5 455.98 121.0 455.86 120.5 455.78 120.0 455.73 119.5 455.90 119.0 455.85 118.5 455.66 118.0 455.69 117.5 455.59 117.0 455.71 116.5 455.62 116.0 455.60 115.5 455.66 115.0 455.60 114.5 455.61 114.0 455.54 113.5 455.57 113.0 455.53 112.5 455.49 112.0 455.62 111.5 455.48 111.0 455.54 110.5 455.47 110.0 455.50 109.5 455.59 109.0 455.66 108.5 455.62 108.0 456.03 107.5 455.90 107.0 455.82 106.5 456.24 106.0 456.12 105.5 455.93 105.0 455.81 104.5 455.48 104.0 455.59 103.5 455.53 103.0 455.58 102.5 455.60 102.0 455.93 101.5 455.94 101.0 456.11 100.5 456.11 100.0 455.73 99.5 455.67 99.0 455.66 98.5 455.60 98.0 455.59 97.5 455.80 97.0 455.89 96.5 456.20 96.0 455.91 95.5 456.06 95.0 455.96 94.5 456.03 94.0 455.81 93.5 455.66 93.0 455.49 92.5 455.59 92.0 455.56 91.5 455.53 91.0 455.50 90.5 455.52 90.0 455.66 89.5 455.58 89.0 455.64 88.5 455.60 88.0 455.77 87.5 455.81 87.0 455.73 86.5 455.61 86.0 455.57 85.5 455.52 85.0 455.66 84.5 455.54 84.0 455.53 83.5 455.56 83.0 455.65 82.5 455.49 82.0 455.58 81.5 455.47 81.0 455.54 80.5 455.67 80.0 455.58 79.5 455.49 79.0 455.60 78.5 455.55 78.0 455.67 77.5 455.54 77.0 455.48 76.5 455.47 76.0 455.64 75.5 455.55 75.0 455.55 74.5 455.65 74.0 455.59 73.5 455.54 73.0 455.47 72.5 455.50 72.0 455.71 71.5 455.97 71.0 456.09 70.5 456.48 70.0 456.46 69.5 456.16 69.0 456.50 68.5 456.54 68.0 456.32 67.5 456.42 67.0 455.95 66.5 455.91 66.0 455.57 65.5 455.64 65.0 455.58 64.5 455.67 64.0 455.61 63.5 455.64 63.0 455.64 62.5 455.60 62.0 455.63 61.5 455.64 61.0 455.61 60.5 455.58 60.0 455.59 59.5 455.85 59.0 455.94 58.5 456.01 58.0 456.11 57.5 456.13 57.0 456.10 56.5 456.14 56.0 456.00 55.5 455.66 55.0 455.54 54.5 455.60 54.0 455.67 53.5 455.50 53.0 455.53 52.5 455.62 52.0 455.56 51.5 455.64 51.0 455.56 50.5 455.64 50.0 455.56 49.5 455.63 49.0 455.66 48.5 455.49 48.0 455.57 47.5 455.80 47.0 455.78 46.5 456.05 46.0 455.82 45.5 455.93 45.0 455.66 44.5 455.82 44.0 455.50 43.5 455.50 43.0 455.53 42.5 455.66 42.0 455.66 41.5 455.54 41.0 455.66 40.5 455.65 40.0 455.62 39.5 455.63 39.0 455.54 38.5 455.66 38.0 455.62 37.5 455.67 37.0 455.47 36.5 455.59 36.0 455.63 35.5 455.64 35.0 455.47 34.5 455.57 34.0 455.80 33.5 455.91 33.0 455.85 32.5 455.99 32.0 455.96 31.5 455.75 31.0 455.79 30.5 455.84 30.0 455.96 29.5 455.80 29.0 455.61 28.5 455.67 28.0 455.65 27.5 455.51 27.0 455.65 26.5 455.49 26.0 455.49 25.5 455.50 25.0 455.66 24.5 455.51 24.0 455.59 23.5 455.52 23.0 455.49 22.5 455.60 22.0 455.56 21.5 455.66 21.0 455.66 20.5 455.62Z" fill="#d6bbe9"/></svg>
<span id="t27" style="position:absolute;top:487px;font-size:10.4px;line-height:11px;white-space:nowrap;color:#8c5cb6;font-weight:400;font-style:italic;left:23.70px;transform-origin:left center;transform:scaleX(0.9209);">06_Room</span>
<svg style="position:absolute;left:956px;top:425.8px" width="32" height="56" viewBox="956 198 32 56"><path d="M961.8 208.1 H965.1 V215.3 H961.8 Z M965.6 208 L971.4 204.4 V218.8 L965.6 215.3 Z" fill="#cfcfcf"/><path d="M974.4 208.5 L981.2 215.1 M981.2 208.5 L974.4 215.1" stroke="#dadada" stroke-width="1.55" fill="none"/><path d="M963.3 247.8 V240.9 A8.6 8.6 0 0 1 980.5 240.9 V247.8" fill="none" stroke="#cfcfcf" stroke-width="1.3"/><rect x="965.3" y="242" width="2.7" height="8.7" rx="0.5" fill="#cfcfcf"/><rect x="976" y="242" width="2.7" height="8.7" rx="0.5" fill="#cfcfcf"/></svg>
<svg style="position:absolute;left:990px;top:418px" width="26" height="73" viewBox="990 418 26 73"><rect x="991.3" y="418.60" width="22.8" height="72.00" fill="#3b404c"/><rect x="991.3" y="435.60" width="22.8" height="3.40" fill="#fff"/><rect x="991.3" y="439.00" width="22.8" height="51.60" fill="#a32ee0"/></svg>
<svg style="position:absolute;left:1015px;top:418px" width="4" height="73" viewBox="1015 418 4 73"><rect x="1015.4" y="418.60" width="3.1" height="1.90" fill="#272c38"/><rect x="1015.4" y="421.42" width="3.1" height="1.90" fill="#272c38"/><rect x="1015.4" y="424.24" width="3.1" height="1.90" fill="#272c38"/><rect x="1015.4" y="427.06" width="3.1" height="1.90" fill="#272c38"/><rect x="1015.4" y="429.88" width="3.1" height="1.90" fill="#272c38"/><rect x="1015.4" y="432.70" width="3.1" height="1.90" fill="#272c38"/><rect x="1015.4" y="435.52" width="3.1" height="1.90" fill="#272c38"/><rect x="1015.4" y="438.34" width="3.1" height="1.90" fill="#272c38"/><rect x="1015.4" y="441.16" width="3.1" height="1.90" fill="#272c38"/><rect x="1015.4" y="443.98" width="3.1" height="1.90" fill="#272c38"/><rect x="1015.4" y="446.80" width="3.1" height="1.90" fill="#272c38"/><rect x="1015.4" y="449.62" width="3.1" height="1.90" fill="#272c38"/><rect x="1015.4" y="452.44" width="3.1" height="1.90" fill="#272c38"/><rect x="1015.4" y="455.26" width="3.1" height="1.90" fill="#272c38"/><rect x="1015.4" y="458.08" width="3.1" height="1.90" fill="#272c38"/><rect x="1015.4" y="460.90" width="3.1" height="1.90" fill="#272c38"/><rect x="1015.4" y="463.72" width="3.1" height="1.90" fill="#272c38"/><rect x="1015.4" y="466.54" width="3.1" height="1.90" fill="#272c38"/><rect x="1015.4" y="469.36" width="3.1" height="1.90" fill="#272c38"/><rect x="1015.4" y="472.18" width="3.1" height="1.90" fill="#272c38"/><rect x="1015.4" y="475.00" width="3.1" height="1.90" fill="#272c38"/><rect x="1015.4" y="477.82" width="3.1" height="1.90" fill="#272c38"/><rect x="1015.4" y="480.64" width="3.1" height="1.90" fill="#272c38"/><rect x="1015.4" y="483.46" width="3.1" height="1.90" fill="#272c38"/><rect x="1015.4" y="486.28" width="3.1" height="1.90" fill="#272c38"/><rect x="1015.4" y="489.10" width="3.1" height="1.50" fill="#272c38"/></svg>
<svg style="position:absolute;left:948px;top:523px" width="2" height="29"><rect x="0.2" y="0.3" width="0.9" height="28.45" fill="#353a48"/></svg>
<svg style="position:absolute;left:0;top:538px" width="949" height="14" viewBox="0 538 949 14"><rect x="20" y="538.20" width="928.2" height="13.55" fill="#3c672c"/><rect x="20" y="538.20" width="928.2" height="1.35" fill="#468827"/><rect x="20" y="538.20" width="0.9" height="13.55" fill="#468827"/></svg>
<svg style="position:absolute;left:956px;top:539.8px" width="32" height="11.950000000000045" viewBox="956 198 32 11.950000000000045"><path d="M961.8 208.1 H965.1 V215.3 H961.8 Z M965.6 208 L971.4 204.4 V218.8 L965.6 215.3 Z" fill="#cfcfcf"/><path d="M974.4 208.5 L981.2 215.1 M981.2 208.5 L974.4 215.1" stroke="#dadada" stroke-width="1.55" fill="none"/><path d="M963.3 247.8 V240.9 A8.6 8.6 0 0 1 980.5 240.9 V247.8" fill="none" stroke="#cfcfcf" stroke-width="1.3"/><rect x="965.3" y="242" width="2.7" height="8.7" rx="0.5" fill="#cfcfcf"/><rect x="976" y="242" width="2.7" height="8.7" rx="0.5" fill="#cfcfcf"/></svg>
<svg style="position:absolute;left:990px;top:532px" width="26" height="20" viewBox="990 532 26 20"><rect x="991.3" y="532.60" width="22.8" height="19.15" fill="#3b404c"/><rect x="991.3" y="549.60" width="22.8" height="2.15" fill="#fff"/></svg>
<svg style="position:absolute;left:1015px;top:532px" width="4" height="20" viewBox="1015 532 4 20"><rect x="1015.4" y="532.60" width="3.1" height="1.90" fill="#272c38"/><rect x="1015.4" y="535.42" width="3.1" height="1.90" fill="#272c38"/><rect x="1015.4" y="538.24" width="3.1" height="1.90" fill="#272c38"/><rect x="1015.4" y="541.06" width="3.1" height="1.90" fill="#272c38"/><rect x="1015.4" y="543.88" width="3.1" height="1.90" fill="#272c38"/><rect x="1015.4" y="546.70" width="3.1" height="1.90" fill="#272c38"/><rect x="1015.4" y="549.52" width="3.1" height="1.90" fill="#272c38"/></svg>
<svg style="position:absolute;left:12px;top:70px" width="19" height="16" viewBox="12 70 19 16"><path d="M13.75 70.7 H25 L19.9 82.6 L19.2 84 Z" fill="#fff"/><path d="M25 70.7 H29.1 L20.6 84 H19.2 Z" fill="#8fc3c3"/></svg>
<svg style="position:absolute;left:18px;top:83px" width="3" height="469"><rect x="0.2" y="0.5" width="1.85" height="467.75" fill="#f4f4f4"/></svg>
<svg style="position:absolute;left:6px;top:91px" width="28" height="15"><rect x="0" y="0" width="28" height="15" fill="rgba(24,29,42,0.42)"/></svg>
<svg style="position:absolute;left:6px;top:130px" width="28" height="15"><rect x="0" y="0.5" width="28" height="14.5" fill="rgba(24,29,42,0.42)"/></svg>
<span id="t16" style="position:absolute;top:94px;font-size:10px;line-height:11px;white-space:nowrap;color:#858a94;font-weight:400;left:8.10px;transform-origin:left center;transform:scaleX(0.8749);">00:00</span>
<span id="t17" style="position:absolute;top:132px;font-size:10px;line-height:11px;white-space:nowrap;color:#858a94;font-weight:400;left:8.10px;transform-origin:left center;transform:scaleX(0.8749);">00:00</span>
<svg style="position:absolute;left:12px;top:115px" width="14" height="15"><circle cx="7.10" cy="7.20" r="6.9" fill="rgba(61,146,216,0.93)"/></svg>
<svg style="position:absolute;left:16px;top:145px" width="7" height="2"><rect x="0.4" y="0.4" width="6.6" height="1" fill="#d8d8d8"/></svg>
<svg style="position:absolute;left:0px;top:159px" width="1023" height="23"><rect x="0.8" y="0" width="1022.2" height="22.5" fill="#b3282e"/></svg>
<span id="t19" style="position:absolute;top:164px;font-size:12px;line-height:14px;white-space:nowrap;color:#fbf1ef;font-weight:400;left:61.00px;transform-origin:left center;transform:scaleX(0.9953);">02_Snare</span>
<span id="t20" style="position:absolute;top:164px;font-size:12px;line-height:14px;white-space:nowrap;color:#fbf1ef;font-weight:400;left:927.94px;transform-origin:right center;transform:scaleX(1.0419);">Main Audio Out</span>
<svg style="position:absolute;left:0px;top:272px" width="1023" height="24"><rect x="0.8" y="0.9" width="1022.2" height="22.5" fill="#e2c23e"/></svg>
<span id="t22" style="position:absolute;top:278px;font-size:12px;line-height:14px;white-space:nowrap;color:#fbf1ef;font-weight:400;left:61.00px;transform-origin:left center;transform:scaleX(1.0488);">11_HammondLeslieLo</span>
<span id="t23" style="position:absolute;top:278px;font-size:12px;line-height:14px;white-space:nowrap;color:#fbf1ef;font-weight:400;left:927.94px;transform-origin:right center;transform:scaleX(1.0419);">Main Audio Out</span>
<svg style="position:absolute;left:0px;top:386px" width="1023" height="24"><rect x="0.8" y="0.8" width="1022.2" height="22.5" fill="#a32ee0"/></svg>
<span id="t25" style="position:absolute;top:392px;font-size:12px;line-height:14px;white-space:nowrap;color:#fbf1ef;font-weight:400;left:61.00px;transform-origin:left center;transform:scaleX(1.0090);">06_Room</span>
<span id="t26" style="position:absolute;top:392px;font-size:12px;line-height:14px;white-space:nowrap;color:#fbf1ef;font-weight:400;left:927.94px;transform-origin:right center;transform:scaleX(1.0419);">Main Audio Out</span>
<svg style="position:absolute;left:0px;top:500px" width="1023" height="24"><rect x="0.8" y="0.8" width="1022.2" height="22.5" fill="#468827"/></svg>
<span id="t28" style="position:absolute;top:506px;font-size:12px;line-height:14px;white-space:nowrap;color:#fbf1ef;font-weight:400;left:61.00px;transform-origin:left center;transform:scaleX(1.0190);">09_LeadVox</span>
<span id="t29" style="position:absolute;top:506px;font-size:12px;line-height:14px;white-space:nowrap;color:#fbf1ef;font-weight:400;left:927.94px;transform-origin:right center;transform:scaleX(1.0419);">Main Audio Out</span>
<svg style="position:absolute;left:8px;top:185px" width="24" height="24" viewBox="8 185 24 24"><circle cx="19.75" cy="196.5" r="11.25" fill="#fff"/><circle cx="19.7" cy="196.6" r="4.6" fill="#1a1f2c"/></svg>
<svg style="position:absolute;left:8px;top:237px" width="24" height="24" viewBox="8 237 24 24"><circle cx="19.75" cy="249" r="11.25" fill="#fff"/><path d="M12.3 249.2 H17.5 M14.9 246.5 L12.1 249.2 L14.9 251.9 M21.4 249.2 H27.4 M24.8 246.5 L27.6 249.2 L24.8 251.9" fill="none" stroke="#1a1f2c" stroke-width="1.45" stroke-linejoin="miter"/></svg>
<svg style="position:absolute;left:8px;top:298.9px" width="24" height="24" viewBox="8 185 24 24"><circle cx="19.75" cy="196.5" r="11.25" fill="#fff"/><circle cx="19.7" cy="196.6" r="4.6" fill="#1a1f2c"/></svg>
<svg style="position:absolute;left:8px;top:350.9px" width="24" height="24" viewBox="8 237 24 24"><circle cx="19.75" cy="249" r="11.25" fill="#fff"/><path d="M12.3 249.2 H17.5 M14.9 246.5 L12.1 249.2 L14.9 251.9 M21.4 249.2 H27.4 M24.8 246.5 L27.6 249.2 L24.8 251.9" fill="none" stroke="#1a1f2c" stroke-width="1.45" stroke-linejoin="miter"/></svg>
<svg style="position:absolute;left:8px;top:412.8px" width="24" height="24" viewBox="8 185 24 24"><circle cx="19.75" cy="196.5" r="11.25" fill="#fff"/><circle cx="19.7" cy="196.6" r="4.6" fill="#1a1f2c"/></svg>
<svg style="position:absolute;left:8px;top:464.8px" width="24" height="24" viewBox="8 237 24 24"><circle cx="19.75" cy="249" r="11.25" fill="#fff"/><path d="M12.3 249.2 H17.5 M14.9 246.5 L12.1 249.2 L14.9 251.9 M21.4 249.2 H27.4 M24.8 246.5 L27.6 249.2 L24.8 251.9" fill="none" stroke="#1a1f2c" stroke-width="1.45" stroke-linejoin="miter"/></svg>
<svg style="position:absolute;left:8px;top:526.8px" width="24" height="24" viewBox="8 185 24 24"><circle cx="19.75" cy="196.5" r="11.25" fill="#fff"/><circle cx="19.7" cy="196.6" r="4.6" fill="#1a1f2c"/></svg>
<svg style="position:absolute;left:0px;top:551px" width="1024" height="5"><rect x="0" y="0.75" width="1024" height="4.1" fill="#4d5364"/></svg>
<svg style="position:absolute;left:257px;top:551px" width="767" height="4"><rect x="0" y="0.75" width="767" height="3.1" fill="#474749"/></svg>
<svg style="position:absolute;left:255px;top:551px" width="2" height="4"><rect x="0.75" y="0.75" width="1.25" height="3.1" fill="#1c2030"/></svg>
<svg style="position:absolute;left:0px;top:551px" width="256" height="5"><rect x="0" y="0.75" width="255.75" height="3.9" fill="#7b7f89"/></svg>
<svg style="position:absolute;left:0px;top:555px" width="1024" height="156"><rect x="0" y="0.85" width="1024" height="155" fill="#222836"/></svg>
<span id="t30" style="position:absolute;top:563px;font-size:12.3px;line-height:14px;white-space:nowrap;color:#f2f2f2;font-weight:400;left:18.50px;transform-origin:left center;transform:scaleX(1.0274);-webkit-text-stroke:0.25px #f2f2f2;">Transport</span>
<span id="t31" style="position:absolute;top:563px;font-size:12.3px;line-height:14px;white-space:nowrap;color:#7d828c;font-weight:400;left:77.50px;transform-origin:left center;transform:scaleX(0.9649);">Timeline</span>
<svg style="position:absolute;left:18px;top:583px" width="196" height="71"><rect x="0.05" y="0.25" width="195" height="69.8" fill="#333845"/></svg>
<svg style="position:absolute;left:215px;top:583px" width="197" height="71"><rect x="0.9" y="0.25" width="195.2" height="69.8" fill="#d95b55"/></svg>
<svg style="position:absolute;left:413px;top:583px" width="197" height="71"><rect x="0.75" y="0.25" width="195.65" height="69.8" fill="#333845"/></svg>
<svg style="position:absolute;left:612px;top:583px" width="196" height="71"><rect x="0.4" y="0.25" width="194.7" height="69.8" fill="#333845"/></svg>
<svg style="position:absolute;left:809px;top:583px" width="198" height="71"><rect x="0.9" y="0.25" width="196.16" height="69.8" fill="#333845"/></svg>
<svg style="position:absolute;left:104px;top:609px" width="24" height="19" viewBox="-0.55 -1 24 19"><rect x="0" y="0" width="4.2" height="17" fill="#fff"/><path d="M5.2 8.5 L22 0 V17 Z" fill="#fff"/></svg>
<svg style="position:absolute;left:302px;top:609px" width="24" height="19" viewBox="-0.50 -1 24 19"><rect x="2.4" y="0" width="17" height="17" fill="#1a1f2c"/></svg>
<svg style="position:absolute;left:500px;top:609px" width="24" height="19" viewBox="-0.57 -1 24 19"><path d="M19.8 8.5 L2.4 0 V17 Z" fill="#fff"/></svg>
<svg style="position:absolute;left:698px;top:609px" width="24" height="19" viewBox="-0.75 -1 24 19"><rect x="1.8" y="0" width="6.2" height="17" fill="#fff"/><rect x="13" y="0" width="6.2" height="17" fill="#fff"/></svg>
<svg style="position:absolute;left:896px;top:609px" width="24" height="19" viewBox="-0.98 -1 24 19"><rect x="17.8" y="0" width="4.2" height="17" fill="#fff"/><path d="M16.8 8.5 L0 0 V17 Z" fill="#fff"/></svg>
<svg style="position:absolute;left:54px;top:686px" width="914" height="10"><rect x="0" y="0.9" width="913.9" height="8.9" fill="#181d2a"/></svg>
<svg style="position:absolute;left:53px;top:676px" width="2" height="8"><rect x="0.15" y="0" width="1.4" height="7.1" fill="#d4d4d4"/></svg>
<svg style="position:absolute;left:46px;top:664px" width="15" height="15"><circle cx="7.75" cy="7.75" r="6.85" fill="#4193d5"/></svg>
<svg style="position:absolute;left:346px;top:676px" width="3" height="8"><rect x="0.7" y="0" width="1.4" height="7.1" fill="#d4d4d4"/></svg>
<svg style="position:absolute;left:340px;top:664px" width="15" height="15"><circle cx="7.30" cy="7.75" r="6.85" fill="#4193d5"/></svg>
<svg style="position:absolute;left:485px;top:676px" width="2" height="8"><rect x="0" y="0" width="1.4" height="7.1" fill="#d4d4d4"/></svg>
<svg style="position:absolute;left:478px;top:664px" width="15" height="15"><circle cx="7.60" cy="7.75" r="6.85" fill="#4193d5"/></svg>
<svg style="position:absolute;left:652px;top:676px" width="2" height="8"><rect x="0.1" y="0" width="1.4" height="7.1" fill="#d4d4d4"/></svg>
<svg style="position:absolute;left:645px;top:664px" width="15" height="15"><circle cx="7.70" cy="7.75" r="6.85" fill="#4193d5"/></svg>
<svg style="position:absolute;left:811px;top:676px" width="2" height="8"><rect x="0.5" y="0" width="1.4" height="7.1" fill="#d4d4d4"/></svg>
<svg style="position:absolute;left:805px;top:664px" width="14" height="15"><circle cx="7.10" cy="7.75" r="6.85" fill="#4193d5"/></svg>
<svg style="position:absolute;left:949px;top:676px" width="2" height="8"><rect x="0" y="0" width="1.4" height="7.1" fill="#d4d4d4"/></svg>
<svg style="position:absolute;left:942px;top:664px" width="15" height="15"><circle cx="7.60" cy="7.75" r="6.85" fill="#4193d5"/></svg>
<svg style="position:absolute;left:46px;top:664px" width="20" height="20" viewBox="46 664 20 20"><path d="M53 665 H63.9 L55 682.8 H53 Z" fill="#fff"/></svg>
<svg style="position:absolute;left:955px;top:664px" width="16" height="20" viewBox="955 664 16 20"><path d="M957 665 H968 V683.2 H966 Z" fill="#fff"/></svg>
<svg style="position:absolute;left:44px;top:682px" width="20" height="19"><circle cx="9.75" cy="9.30" r="9.3" fill="#fff"/></svg>
<span id="t32" style="position:absolute;top:687px;font-size:8.9px;line-height:10px;white-space:nowrap;color:#7d828c;font-weight:400;left:18.20px;transform-origin:left center;transform:scaleX(0.9767);">00:00</span>
<span id="t33" style="position:absolute;top:687px;font-size:8.9px;line-height:10px;white-space:nowrap;color:#7d828c;font-weight:400;left:980.90px;transform-origin:left center;transform:scaleX(0.9495);">-03:52</span>
<svg style="position:absolute;left:0px;top:710px" width="1024" height="2"><rect x="0" y="0.9" width="1024" height="1.1" fill="#5a5e68"/></svg>
<svg style="position:absolute;left:58px;top:712px" width="2" height="56"><rect x="0.3" y="0" width="1.4" height="56" fill="#141822"/></svg>
<svg style="position:absolute;left:117px;top:712px" width="2" height="56"><rect x="0.6" y="0" width="1.3" height="56" fill="#141822"/></svg>
<svg style="position:absolute;left:176px;top:712px" width="2" height="56"><rect x="0.6" y="0" width="1.3" height="56" fill="#141822"/></svg>
<svg style="position:absolute;left:235px;top:712px" width="2" height="56"><rect x="0.8" y="0" width="1.2" height="56" fill="#141822"/></svg>
<svg style="position:absolute;left:295px;top:712px" width="2" height="56"><rect x="0" y="0" width="1.3" height="56" fill="#141822"/></svg>
<svg style="position:absolute;left:354px;top:712px" width="2" height="56"><rect x="0.45" y="0" width="1.25" height="56" fill="#141822"/></svg>
<svg style="position:absolute;left:668px;top:712px" width="1" height="56"><rect x="0" y="0" width="1" height="56" fill="#141822"/></svg>
<svg style="position:absolute;left:727px;top:712px" width="2" height="56"><rect x="0.6" y="0" width="1.3" height="56" fill="#141822"/></svg>
<svg style="position:absolute;left:786px;top:712px" width="3" height="56"><rect x="0.9" y="0" width="1.3" height="56" fill="#141822"/></svg>
<svg style="position:absolute;left:846px;top:712px" width="2" height="56"><rect x="0" y="0" width="1.3" height="56" fill="#141822"/></svg>
<svg style="position:absolute;left:905px;top:712px" width="2" height="56"><rect x="0.1" y="0" width="1.1" height="56" fill="#141822"/></svg>
<svg style="position:absolute;left:964px;top:712px" width="2" height="56"><rect x="0.3" y="0" width="1" height="56" fill="#141822"/></svg>
<svg style="position:absolute;left:0px;top:712px" width="59" height="57"><rect x="0" y="0.1" width="58.3" height="56" fill="#222836"/></svg>
<span id="t34" style="position:absolute;top:755px;font-size:7.4px;line-height:9px;white-space:nowrap;color:#e6e6e6;font-weight:400;left:15.95px;transform-origin:center center;transform:scaleX(0.8389);">SONGS</span>
<svg style="position:absolute;left:59px;top:712px" width="59" height="57"><rect x="0.7" y="0.1" width="57.9" height="56" fill="#454a5e"/></svg>
<span id="t35" style="position:absolute;top:755px;font-size:7.4px;line-height:9px;white-space:nowrap;color:#e6e6e6;font-weight:400;left:73.60px;transform-origin:center center;transform:scaleX(0.8419);">SCENES</span>
<svg style="position:absolute;left:118px;top:712px" width="59" height="57"><rect x="0.9" y="0.1" width="57.7" height="56" fill="#ffffff"/></svg>
<span id="t36" style="position:absolute;top:755px;font-size:7.4px;line-height:9px;white-space:nowrap;color:#2a2f3c;font-weight:400;left:130.85px;transform-origin:center center;transform:scaleX(0.8741);">TIMELINE</span>
<svg style="position:absolute;left:177px;top:712px" width="59" height="57"><rect x="0.9" y="0.1" width="57.9" height="56" fill="#62708f"/></svg>
<span id="t37" style="position:absolute;top:755px;font-size:7.4px;line-height:9px;white-space:nowrap;color:#e6e6e6;font-weight:400;left:192.69px;transform-origin:center center;transform:scaleX(0.8524);">LAYERS</span>
<svg style="position:absolute;left:237px;top:712px" width="58" height="57"><rect x="0" y="0.1" width="58" height="56" fill="#62708f"/></svg>
<span id="t38" style="position:absolute;top:755px;font-size:7.4px;line-height:9px;white-space:nowrap;color:#e6e6e6;font-weight:400;left:242.24px;transform-origin:center center;transform:scaleX(0.8472);">KEY RANGES</span>
<svg style="position:absolute;left:296px;top:712px" width="59" height="57"><rect x="0.3" y="0.1" width="58.15" height="56" fill="#62708f"/></svg>
<span id="t39" style="position:absolute;top:755px;font-size:7.4px;line-height:9px;white-space:nowrap;color:#e6e6e6;font-weight:400;left:300.30px;transform-origin:center center;transform:scaleX(0.8825);">ATTACHMENT</span>
<svg style="position:absolute;left:669px;top:712px" width="59" height="57"><rect x="0" y="0.1" width="58.6" height="56" fill="#ffffff"/></svg>
<span id="t40" style="position:absolute;top:755px;font-size:7.4px;line-height:9px;white-space:nowrap;color:#2a2f3c;font-weight:400;left:675.57px;transform-origin:center center;transform:scaleX(0.8470);">TRANSPORT</span>
<svg style="position:absolute;left:728px;top:712px" width="59" height="57"><rect x="0.9" y="0.1" width="58" height="56" fill="#222836"/></svg>
<span id="t41" style="position:absolute;top:755px;font-size:7.4px;line-height:9px;white-space:nowrap;color:#e6e6e6;font-weight:400;left:734.80px;transform-origin:center center;transform:scaleX(0.8422);">TRANSPOSE</span>
<svg style="position:absolute;left:788px;top:712px" width="58" height="57"><rect x="0.2" y="0.1" width="57.8" height="56" fill="#222836"/></svg>
<span id="t42" style="position:absolute;top:755px;font-size:7.4px;line-height:9px;white-space:nowrap;color:#e6e6e6;font-weight:400;left:789.17px;transform-origin:center center;transform:scaleX(0.8593);">TEMPO &amp; SYNC</span>
<svg style="position:absolute;left:847px;top:712px" width="59" height="57"><rect x="0.3" y="0.1" width="57.8" height="56" fill="#222836"/></svg>
<span id="t43" style="position:absolute;top:755px;font-size:7.4px;line-height:9px;white-space:nowrap;color:#e6e6e6;font-weight:400;left:864.30px;transform-origin:center center;transform:scaleX(0.8716);">MIXER</span>
<svg style="position:absolute;left:906px;top:712px" width="59" height="57"><rect x="0.2" y="0.1" width="58.1" height="56" fill="#424754"/></svg>
<span id="t44" style="position:absolute;top:755px;font-size:7.4px;line-height:9px;white-space:nowrap;color:#e6e6e6;font-weight:400;left:916.72px;transform-origin:center center;transform:scaleX(0.8629);">SETTINGS</span>
<svg style="position:absolute;left:965px;top:712px" width="59" height="57"><rect x="0.3" y="0.1" width="58.7" height="56" fill="#bf272a"/></svg>
<span id="t45" style="position:absolute;top:755px;font-size:7.4px;line-height:9px;white-space:nowrap;color:#ffffff;font-weight:400;left:983.38px;transform-origin:center center;transform:scaleX(0.8663);">PANIC</span>
<span id="t46" style="position:absolute;top:724px;font-size:18px;line-height:20px;white-space:nowrap;color:#f2f2f2;font-weight:400;left:802.28px;transform-origin:center center;transform:scaleX(0.9652);">128</span>
<span id="t47" style="position:absolute;top:742px;font-size:8.8px;line-height:10px;white-space:nowrap;color:#e6e6e6;font-weight:400;left:807.16px;transform-origin:center center;">BPM</span>
<svg style="position:absolute;left:0;top:712px" width="1024" height="56" viewBox="0 712 1024 56">
<g fill="#f4f4f4"><circle cx="23.4" cy="741.2" r="3.4"/><circle cx="35.2" cy="739.4" r="3.4"/><path d="M25.2 728.3 L38.9 726 V739.4 H37 V731.3 L27.1 732.9 V741.2 H25.2 Z M27.1 729.5 V731.2 L37 729.6 V727.9 Z" fill-rule="evenodd"/></g>
<g fill="none" stroke="#f4f4f4"><rect x="81" y="734.3" width="17.4" height="9.8" stroke-width="1.4"/><path d="M83.4 737.6 H93.8 M86.4 740.8 H95" stroke-width="1.3"/><path d="M79.6 732.2 L97.8 727.6" stroke-width="3.2" stroke-linecap="round"/><path d="M82.6 730.6 l0.5 1.6 M85.9 729.8 l0.5 1.6 M89.2 729 l0.5 1.6 M92.5 728.1 l0.5 1.6 M95.6 727.4 l0.5 1.6" stroke="#454a5e" stroke-width="1.2"/></g>
<g fill="none" stroke="#1d2230"><circle cx="149.4" cy="739.2" r="8.2" stroke-width="1.2"/><circle cx="149.4" cy="739.2" r="2.2" stroke-width="1.1"/><path d="M145.3 739 V725.8" stroke-width="1.4"/></g><ellipse cx="141.6" cy="739.4" rx="3.5" ry="2.7" transform="rotate(-25 141.6 739.4)" fill="#1d2230"/><path d="M144.7 725.6 L152 723 V727.4 L144.7 730 Z" fill="#1d2230"/>
<g stroke="#f4f4f4" stroke-width="1.5" fill="#5f6b8b"><path d="M197.1 728.8 H217.4 M197.1 735.5 H217.4 M197.1 742.2 H217.4"/><circle cx="208.9" cy="728.8" r="2.1" stroke-width="1.3"/><circle cx="203.6" cy="735.5" r="2.1" stroke-width="1.3"/><circle cx="213.2" cy="742.2" r="2.1" stroke-width="1.3"/></g>
<g fill="none" stroke="#f4f4f4"><rect x="252.2" y="726.9" width="17.6" height="17.2" stroke-width="1.3"/><path d="M257.4 727 V738.4 M261.3 727 V738.4 M265.2 727 V738.4" stroke-width="1.8"/><path d="M257.4 738.4 V744 M261.3 738.4 V744 M265.2 738.4 V744" stroke-width="1.2" opacity="0.55"/><path d="M271.4 726.9 H280.6 V744.1 H271.2" stroke-width="1.3" stroke-dasharray="1.3 1.35"/></g>
<path d="M320.2 726.9 H329 L332.5 730.4 V742.6 Q332.5 744 331.1 744 H320.2 Q318.8 744 318.8 742.6 V728.3 Q318.8 726.9 320.2 726.9 Z M329 726.9 V730.4 H332.5" fill="none" stroke="#f4f4f4" stroke-width="1.3" stroke-linejoin="round"/>
<path d="M692.4 725.1 L704.3 731 L692.4 736.9 Z" fill="#1d2230"/><path d="M681 743.4 H700.4 M707.5 743.4 H716.2" stroke="#1d2230" stroke-width="1.3" fill="none"/><circle cx="702.7" cy="743.4" r="2.1" fill="none" stroke="#1d2230" stroke-width="1.2"/>
<path d="M749.1 724.3 V746.4 Q757.6 742.6 757.6 737.6 Q757.6 734.6 754.4 734.6 Q751.6 734.6 749.1 738.4" fill="none" stroke="#f4f4f4" stroke-width="1.55" stroke-linejoin="miter"/><path d="M762.4 725.6 L761.2 734.2 M765.6 725.6 L764.4 734.2 M759.9 728.4 H767 M759.5 731.6 H766.6" stroke="#f4f4f4" stroke-width="1" fill="none"/>
<path d="M866 731.4 H870.3 V739.4 H866 Z M871 731.2 L876.6 727.6 V743.2 L871 739.6 Z" fill="#f4f4f4"/><path d="M879.2 730.2 Q882.6 735.4 879.2 740.6" fill="none" stroke="#f4f4f4" stroke-width="1.5"/><path d="M882.6 727.4 Q888.4 735.4 882.6 743.4" fill="none" stroke="#f4f4f4" stroke-width="1.5"/>
<path d="M933.51 728.78 L933.75 726.48 L936.85 726.48 L937.09 728.78 L938.79 729.49 L940.58 728.03 L942.77 730.22 L941.31 732.01 L942.02 733.71 L944.32 733.95 L944.32 737.05 L942.02 737.29 L941.31 738.99 L942.77 740.78 L940.58 742.97 L938.79 741.51 L937.09 742.22 L936.85 744.52 L933.75 744.52 L933.51 742.22 L931.81 741.51 L930.02 742.97 L927.83 740.78 L929.29 738.99 L928.58 737.29 L926.28 737.05 L926.28 733.95 L928.58 733.71 L929.29 732.01 L927.83 730.22 L930.02 728.03 L931.81 729.49 Z" fill="none" stroke="#f4f4f4" stroke-width="1.25" stroke-linejoin="round"/><circle cx="935.3" cy="735.5" r="4.1" fill="none" stroke="#f4f4f4" stroke-width="1.25"/>
<circle cx="948.5" cy="726.1" r="6.5" fill="#e0584e"/><rect x="947.5" y="721.9" width="2" height="5.4" fill="#fff"/><rect x="947.5" y="728.3" width="2" height="1.9" fill="#fff"/>
<path d="M994.5 726.2 L1004 744.8 H985 Z" fill="#fff"/><rect x="993.6" y="732.8" width="1.9" height="6.4" fill="#bf272a"/><rect x="993.6" y="740.4" width="1.9" height="1.9" fill="#bf272a"/>
</svg>
</div>
</body></html>
